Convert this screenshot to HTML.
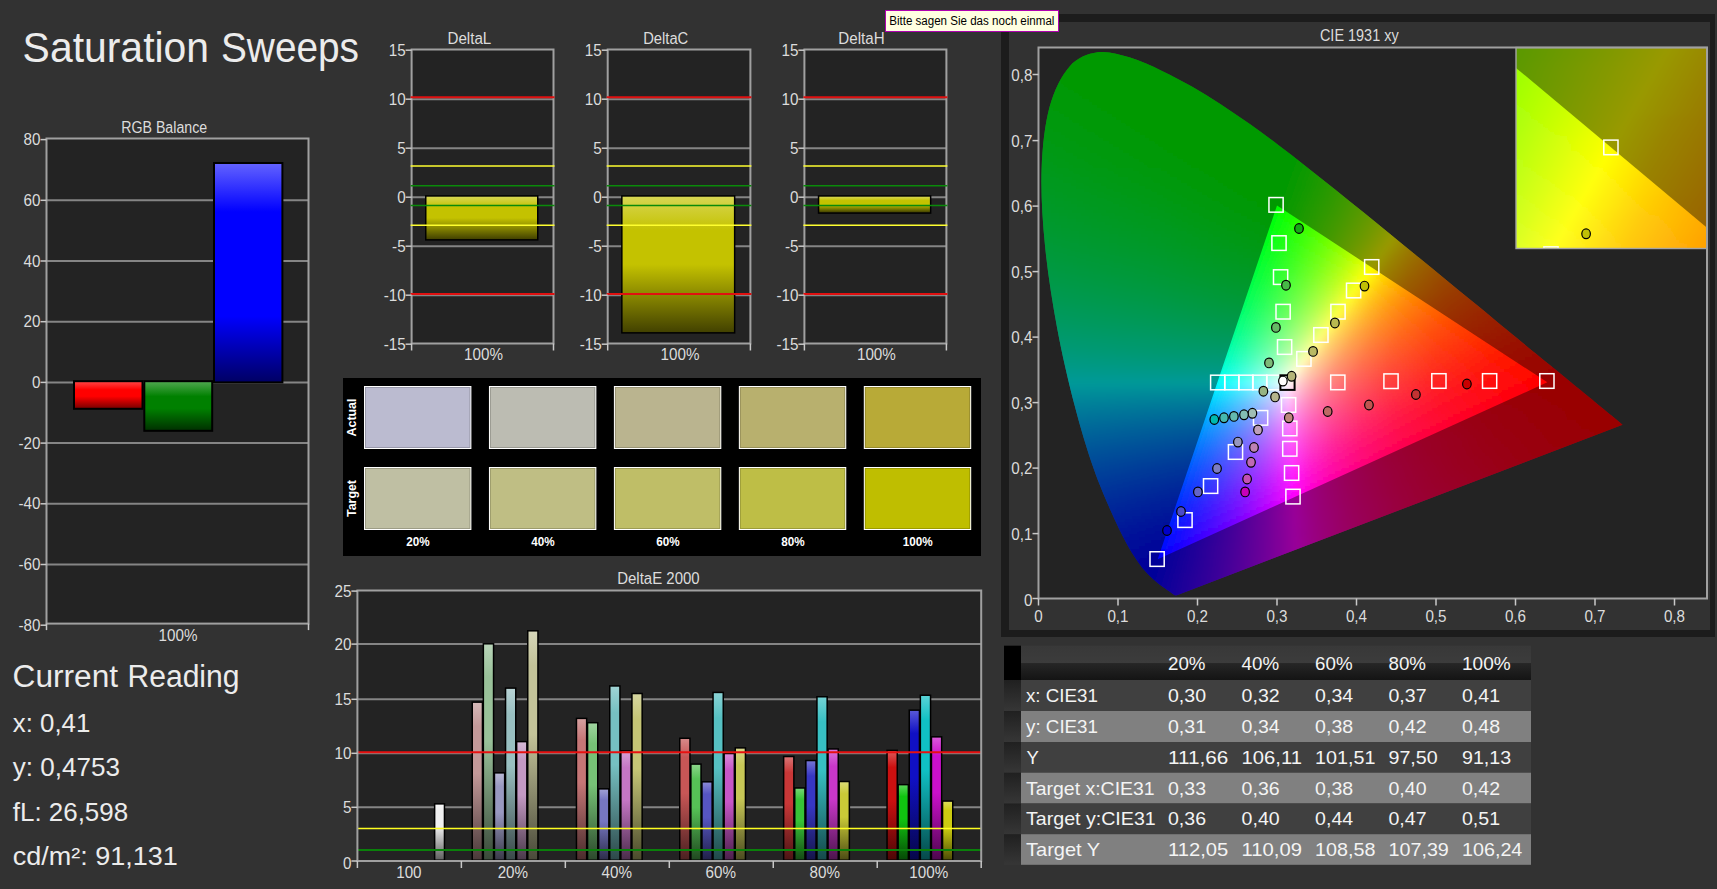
<!DOCTYPE html>
<html><head><meta charset="utf-8"><title>Saturation Sweeps</title><style>html,body{margin:0;padding:0;background:#323232;overflow:hidden}svg{display:block}text{font-family:"Liberation Sans",sans-serif}</style></head><body><svg width="1717" height="889" viewBox="0 0 1717 889"><defs><linearGradient id="g1" x1="0" y1="0" x2="0" y2="1"><stop offset="0" stop-color="#ff4040"/><stop offset="0.3" stop-color="#ff0000"/><stop offset="0.55" stop-color="#ff0000"/><stop offset="1" stop-color="#800000"/></linearGradient><linearGradient id="g2" x1="0" y1="0" x2="0" y2="1"><stop offset="0" stop-color="#4ca64c"/><stop offset="0.3" stop-color="#008000"/><stop offset="0.55" stop-color="#008000"/><stop offset="1" stop-color="#003300"/></linearGradient><linearGradient id="g3" x1="0" y1="0" x2="0" y2="1"><stop offset="0" stop-color="#6161ff"/><stop offset="0.22" stop-color="#0000ff"/><stop offset="0.7" stop-color="#0000ff"/><stop offset="1" stop-color="#000066"/></linearGradient><linearGradient id="g4" x1="0" y1="0" x2="0" y2="1"><stop offset="0" stop-color="#d7d652"/><stop offset="0.25" stop-color="#c4c200"/><stop offset="0.5" stop-color="#c4c200"/><stop offset="1" stop-color="#434200"/></linearGradient><linearGradient id="g5" x1="0" y1="0" x2="0" y2="1"><stop offset="0" stop-color="#d7d652"/><stop offset="0.25" stop-color="#c4c200"/><stop offset="0.5" stop-color="#c4c200"/><stop offset="1" stop-color="#434200"/></linearGradient><linearGradient id="g6" x1="0" y1="0" x2="0" y2="1"><stop offset="0" stop-color="#d7d652"/><stop offset="0.25" stop-color="#c4c200"/><stop offset="0.5" stop-color="#c4c200"/><stop offset="1" stop-color="#434200"/></linearGradient><linearGradient id="g7" x1="0" y1="0" x2="0" y2="1"><stop offset="0" stop-color="#f9f9f9"/><stop offset="0.1" stop-color="#f0f0f0"/><stop offset="0.4" stop-color="#f0f0f0"/><stop offset="1" stop-color="#606060"/></linearGradient><linearGradient id="g8" x1="0" y1="0" x2="0" y2="1"><stop offset="0" stop-color="#d5b8b8"/><stop offset="0.15" stop-color="#c39999"/><stop offset="0.45" stop-color="#c39999"/><stop offset="1" stop-color="#4a3a3a"/></linearGradient><linearGradient id="g9" x1="0" y1="0" x2="0" y2="1"><stop offset="0" stop-color="#b8d4b8"/><stop offset="0.15" stop-color="#99c199"/><stop offset="0.45" stop-color="#99c199"/><stop offset="1" stop-color="#3a493a"/></linearGradient><linearGradient id="g10" x1="0" y1="0" x2="0" y2="1"><stop offset="0" stop-color="#b8b8d4"/><stop offset="0.15" stop-color="#9999c1"/><stop offset="0.45" stop-color="#9999c1"/><stop offset="1" stop-color="#3a3a49"/></linearGradient><linearGradient id="g11" x1="0" y1="0" x2="0" y2="1"><stop offset="0" stop-color="#b8d3d4"/><stop offset="0.15" stop-color="#99c0c1"/><stop offset="0.45" stop-color="#99c0c1"/><stop offset="1" stop-color="#3a4949"/></linearGradient><linearGradient id="g12" x1="0" y1="0" x2="0" y2="1"><stop offset="0" stop-color="#d5b8d5"/><stop offset="0.15" stop-color="#c399c3"/><stop offset="0.45" stop-color="#c399c3"/><stop offset="1" stop-color="#4a3a4a"/></linearGradient><linearGradient id="g13" x1="0" y1="0" x2="0" y2="1"><stop offset="0" stop-color="#d5d5b8"/><stop offset="0.15" stop-color="#c3c399"/><stop offset="0.45" stop-color="#c3c399"/><stop offset="1" stop-color="#4a4a3a"/></linearGradient><linearGradient id="g14" x1="0" y1="0" x2="0" y2="1"><stop offset="0" stop-color="#d69f9f"/><stop offset="0.15" stop-color="#c57676"/><stop offset="0.45" stop-color="#c57676"/><stop offset="1" stop-color="#4b2d2d"/></linearGradient><linearGradient id="g15" x1="0" y1="0" x2="0" y2="1"><stop offset="0" stop-color="#9fd49f"/><stop offset="0.15" stop-color="#76c276"/><stop offset="0.45" stop-color="#76c276"/><stop offset="1" stop-color="#2d4a2d"/></linearGradient><linearGradient id="g16" x1="0" y1="0" x2="0" y2="1"><stop offset="0" stop-color="#9f9fd4"/><stop offset="0.15" stop-color="#7676c2"/><stop offset="0.45" stop-color="#7676c2"/><stop offset="1" stop-color="#2d2d4a"/></linearGradient><linearGradient id="g17" x1="0" y1="0" x2="0" y2="1"><stop offset="0" stop-color="#9fd3d4"/><stop offset="0.15" stop-color="#76c0c2"/><stop offset="0.45" stop-color="#76c0c2"/><stop offset="1" stop-color="#2d494a"/></linearGradient><linearGradient id="g18" x1="0" y1="0" x2="0" y2="1"><stop offset="0" stop-color="#d69fd6"/><stop offset="0.15" stop-color="#c576c5"/><stop offset="0.45" stop-color="#c576c5"/><stop offset="1" stop-color="#4b2d4b"/></linearGradient><linearGradient id="g19" x1="0" y1="0" x2="0" y2="1"><stop offset="0" stop-color="#d6d69f"/><stop offset="0.15" stop-color="#c5c576"/><stop offset="0.45" stop-color="#c5c576"/><stop offset="1" stop-color="#4b4b2d"/></linearGradient><linearGradient id="g20" x1="0" y1="0" x2="0" y2="1"><stop offset="0" stop-color="#d88989"/><stop offset="0.15" stop-color="#c75656"/><stop offset="0.45" stop-color="#c75656"/><stop offset="1" stop-color="#4c2121"/></linearGradient><linearGradient id="g21" x1="0" y1="0" x2="0" y2="1"><stop offset="0" stop-color="#89d589"/><stop offset="0.15" stop-color="#56c256"/><stop offset="0.45" stop-color="#56c256"/><stop offset="1" stop-color="#214a21"/></linearGradient><linearGradient id="g22" x1="0" y1="0" x2="0" y2="1"><stop offset="0" stop-color="#8989d5"/><stop offset="0.15" stop-color="#5656c2"/><stop offset="0.45" stop-color="#5656c2"/><stop offset="1" stop-color="#21214a"/></linearGradient><linearGradient id="g23" x1="0" y1="0" x2="0" y2="1"><stop offset="0" stop-color="#89d3d5"/><stop offset="0.15" stop-color="#56c0c2"/><stop offset="0.45" stop-color="#56c0c2"/><stop offset="1" stop-color="#21494a"/></linearGradient><linearGradient id="g24" x1="0" y1="0" x2="0" y2="1"><stop offset="0" stop-color="#d889d8"/><stop offset="0.15" stop-color="#c756c7"/><stop offset="0.45" stop-color="#c756c7"/><stop offset="1" stop-color="#4c214c"/></linearGradient><linearGradient id="g25" x1="0" y1="0" x2="0" y2="1"><stop offset="0" stop-color="#d8d889"/><stop offset="0.15" stop-color="#c7c756"/><stop offset="0.45" stop-color="#c7c756"/><stop offset="1" stop-color="#4c4c21"/></linearGradient><linearGradient id="g26" x1="0" y1="0" x2="0" y2="1"><stop offset="0" stop-color="#d97373"/><stop offset="0.15" stop-color="#c93737"/><stop offset="0.45" stop-color="#c93737"/><stop offset="1" stop-color="#4d1515"/></linearGradient><linearGradient id="g27" x1="0" y1="0" x2="0" y2="1"><stop offset="0" stop-color="#73d573"/><stop offset="0.15" stop-color="#37c337"/><stop offset="0.45" stop-color="#37c337"/><stop offset="1" stop-color="#154a15"/></linearGradient><linearGradient id="g28" x1="0" y1="0" x2="0" y2="1"><stop offset="0" stop-color="#7373d5"/><stop offset="0.15" stop-color="#3737c3"/><stop offset="0.45" stop-color="#3737c3"/><stop offset="1" stop-color="#15154a"/></linearGradient><linearGradient id="g29" x1="0" y1="0" x2="0" y2="1"><stop offset="0" stop-color="#73d3d5"/><stop offset="0.15" stop-color="#37c0c3"/><stop offset="0.45" stop-color="#37c0c3"/><stop offset="1" stop-color="#15494a"/></linearGradient><linearGradient id="g30" x1="0" y1="0" x2="0" y2="1"><stop offset="0" stop-color="#d973d9"/><stop offset="0.15" stop-color="#c937c9"/><stop offset="0.45" stop-color="#c937c9"/><stop offset="1" stop-color="#4d154d"/></linearGradient><linearGradient id="g31" x1="0" y1="0" x2="0" y2="1"><stop offset="0" stop-color="#d9d973"/><stop offset="0.15" stop-color="#c9c937"/><stop offset="0.45" stop-color="#c9c937"/><stop offset="1" stop-color="#4d4d15"/></linearGradient><linearGradient id="g32" x1="0" y1="0" x2="0" y2="1"><stop offset="0" stop-color="#db5858"/><stop offset="0.15" stop-color="#cc1010"/><stop offset="0.45" stop-color="#cc1010"/><stop offset="1" stop-color="#4e0606"/></linearGradient><linearGradient id="g33" x1="0" y1="0" x2="0" y2="1"><stop offset="0" stop-color="#58d658"/><stop offset="0.15" stop-color="#10c410"/><stop offset="0.45" stop-color="#10c410"/><stop offset="1" stop-color="#064a06"/></linearGradient><linearGradient id="g34" x1="0" y1="0" x2="0" y2="1"><stop offset="0" stop-color="#5858d6"/><stop offset="0.15" stop-color="#1010c4"/><stop offset="0.45" stop-color="#1010c4"/><stop offset="1" stop-color="#06064a"/></linearGradient><linearGradient id="g35" x1="0" y1="0" x2="0" y2="1"><stop offset="0" stop-color="#58d3d6"/><stop offset="0.15" stop-color="#10c0c4"/><stop offset="0.45" stop-color="#10c0c4"/><stop offset="1" stop-color="#06494a"/></linearGradient><linearGradient id="g36" x1="0" y1="0" x2="0" y2="1"><stop offset="0" stop-color="#db58db"/><stop offset="0.15" stop-color="#cc10cc"/><stop offset="0.45" stop-color="#cc10cc"/><stop offset="1" stop-color="#4e064e"/></linearGradient><linearGradient id="g37" x1="0" y1="0" x2="0" y2="1"><stop offset="0" stop-color="#dbdb58"/><stop offset="0.15" stop-color="#cccc10"/><stop offset="0.45" stop-color="#cccc10"/><stop offset="1" stop-color="#4e4e06"/></linearGradient><linearGradient id="g38" x1="0" y1="0" x2="0" y2="1"><stop offset="0" stop-color="#383838"/><stop offset="0.5" stop-color="#3c3c3c"/><stop offset="0.52" stop-color="#262626"/><stop offset="1" stop-color="#141414"/></linearGradient><linearGradient id="g39" x1="0" y1="0" x2="0" y2="1"><stop offset="0" stop-color="#202020"/><stop offset="1" stop-color="#363636"/></linearGradient><clipPath id="locus"><path d="M1176.91,595.23C1176.64,595.25 1175.82,595.44 1175.32,595.36C1174.82,595.27 1174.58,595.12 1173.89,594.7C1173.2,594.29 1171.97,593.42 1171.19,592.87C1170.4,592.31 1169.97,591.93 1169.2,591.36C1168.43,590.79 1167.61,590.2 1166.57,589.46C1165.54,588.72 1164.34,587.88 1163,586.91C1161.66,585.93 1160.21,584.94 1158.55,583.63C1156.88,582.32 1155.03,580.92 1152.98,579.05C1150.93,577.17 1148.86,575.43 1146.22,572.37C1143.59,569.3 1140.59,565.76 1137.16,560.64C1133.73,555.52 1129.98,549.82 1125.63,541.65C1121.29,533.47 1116.5,524.02 1111.08,511.58C1105.66,499.15 1099.2,484.76 1093.12,467.04C1087.03,449.32 1080.58,428.42 1074.59,405.27C1068.6,382.13 1062.11,354.75 1057.18,328.18C1052.25,301.61 1047.62,272.28 1045.02,245.85C1042.42,219.42 1040.85,192.73 1041.6,169.61C1042.36,146.48 1044.91,124.28 1049.55,107.12C1054.19,89.96 1061.42,75.77 1069.43,66.64C1077.43,57.51 1087.59,53.91 1097.57,52.36C1107.55,50.81 1118.64,54.29 1129.29,57.34C1139.94,60.38 1151.06,65.77 1161.49,70.64C1171.91,75.5 1181.93,80.92 1191.86,86.55C1201.78,92.19 1211.37,98.18 1221.03,104.43C1230.69,110.69 1240.27,117.32 1249.81,124.08C1259.35,130.85 1268.8,137.9 1278.27,145.04C1287.75,152.18 1297.18,159.52 1306.65,166.92C1316.13,174.32 1325.65,181.89 1335.11,189.45C1344.57,197.02 1354.01,204.69 1363.42,212.31C1372.82,219.93 1382.27,227.6 1391.56,235.17C1400.85,242.75 1410.08,250.33 1419.15,257.77C1428.21,265.2 1437.19,272.59 1445.94,279.78C1454.68,286.96 1463.31,294.06 1471.62,300.87C1479.92,307.68 1488.09,314.33 1495.78,320.65C1503.48,326.97 1510.94,333.15 1517.81,338.79C1524.67,344.44 1530.96,349.59 1536.96,354.51C1542.97,359.44 1548.68,364.13 1553.82,368.33C1558.96,372.54 1563.58,376.27 1567.81,379.73C1572.04,383.19 1575.77,386.29 1579.18,389.1C1582.58,391.9 1585.53,394.34 1588.24,396.56C1590.96,398.79 1593.3,400.68 1595.48,402.46C1597.65,404.24 1599.5,405.78 1601.28,407.24C1603.06,408.7 1604.66,410.02 1606.13,411.24C1607.6,412.45 1608.91,413.54 1610.11,414.51C1611.3,415.48 1612.36,416.31 1613.28,417.06C1614.21,417.82 1614.97,418.45 1615.67,419.03C1616.37,419.61 1616.97,420.1 1617.5,420.54C1618.03,420.97 1618.36,421.25 1618.85,421.65C1619.34,422.05 1619.82,422.45 1620.44,422.96C1621.06,423.47 1622.23,424.43 1622.59,424.73Z"/></clipPath><filter id="vb" filterUnits="userSpaceOnUse" x="1020" y="30" width="700" height="590"><feGaussianBlur stdDeviation="2.5 2.5"/></filter><linearGradient id="c0" gradientUnits="userSpaceOnUse" x1="1086" x2="1109" y1="0" y2="0"><stop offset="0" stop-color="#0f0"/><stop offset="1" stop-color="#0f0"/></linearGradient><linearGradient id="c1" gradientUnits="userSpaceOnUse" x1="1080" x2="1129" y1="0" y2="0"><stop offset="0" stop-color="#0f0"/><stop offset="1" stop-color="#0f0"/></linearGradient><linearGradient id="c2" gradientUnits="userSpaceOnUse" x1="1074" x2="1143" y1="0" y2="0"><stop offset="0" stop-color="#0f0"/><stop offset="1" stop-color="#0f0"/></linearGradient><linearGradient id="c3" gradientUnits="userSpaceOnUse" x1="1069" x2="1150" y1="0" y2="0"><stop offset="0" stop-color="#0f0"/><stop offset="1" stop-color="#0f0"/></linearGradient><linearGradient id="c4" gradientUnits="userSpaceOnUse" x1="1063" x2="1158" y1="0" y2="0"><stop offset="0" stop-color="#0f0"/><stop offset="1" stop-color="#0f0"/></linearGradient><linearGradient id="c5" gradientUnits="userSpaceOnUse" x1="1058" x2="1165" y1="0" y2="0"><stop offset="0" stop-color="#0f0"/><stop offset="1" stop-color="#0f0"/></linearGradient><linearGradient id="c6" gradientUnits="userSpaceOnUse" x1="1057" x2="1172" y1="0" y2="0"><stop offset="0" stop-color="#0f0"/><stop offset="1" stop-color="#0f0"/></linearGradient><linearGradient id="c7" gradientUnits="userSpaceOnUse" x1="1055" x2="1178" y1="0" y2="0"><stop offset="0" stop-color="#0f0"/><stop offset="1" stop-color="#0f0"/></linearGradient><linearGradient id="c8" gradientUnits="userSpaceOnUse" x1="1054" x2="1184" y1="0" y2="0"><stop offset="0" stop-color="#00ff02"/><stop offset="1" stop-color="#0f0"/></linearGradient><linearGradient id="c9" gradientUnits="userSpaceOnUse" x1="1052" x2="1189" y1="0" y2="0"><stop offset="0" stop-color="#00ff03"/><stop offset=".1022" stop-color="#0f0"/><stop offset="1" stop-color="#0f0"/></linearGradient><linearGradient id="c10" gradientUnits="userSpaceOnUse" x1="1051" x2="1195" y1="0" y2="0"><stop offset="0" stop-color="#00ff04"/><stop offset=".1389" stop-color="#0f0"/><stop offset="1" stop-color="#0f0"/></linearGradient><linearGradient id="c11" gradientUnits="userSpaceOnUse" x1="1049" x2="1201" y1="0" y2="0"><stop offset="0" stop-color="#00ff06"/><stop offset=".1776" stop-color="#0f0"/><stop offset="1" stop-color="#0f0"/></linearGradient><linearGradient id="c12" gradientUnits="userSpaceOnUse" x1="1048" x2="1206" y1="0" y2="0"><stop offset="0" stop-color="#00ff07"/><stop offset=".2025" stop-color="#0f0"/><stop offset="1" stop-color="#0f0"/></linearGradient><linearGradient id="c13" gradientUnits="userSpaceOnUse" x1="1046" x2="1211" y1="0" y2="0"><stop offset="0" stop-color="#00ff08"/><stop offset=".2364" stop-color="#0f0"/><stop offset="1" stop-color="#0f0"/></linearGradient><linearGradient id="c14" gradientUnits="userSpaceOnUse" x1="1045" x2="1216" y1="0" y2="0"><stop offset="0" stop-color="#00ff0a"/><stop offset=".2573" stop-color="#0f0"/><stop offset="1" stop-color="#0f0"/></linearGradient><linearGradient id="c15" gradientUnits="userSpaceOnUse" x1="1043" x2="1221" y1="0" y2="0"><stop offset="0" stop-color="#00ff0b"/><stop offset=".2865" stop-color="#0f0"/><stop offset="1" stop-color="#0f0"/></linearGradient><linearGradient id="c16" gradientUnits="userSpaceOnUse" x1="1042" x2="1226" y1="0" y2="0"><stop offset="0" stop-color="#00ff0c"/><stop offset=".3043" stop-color="#0f0"/><stop offset="1" stop-color="#0f0"/></linearGradient><linearGradient id="c17" gradientUnits="userSpaceOnUse" x1="1040" x2="1231" y1="0" y2="0"><stop offset="0" stop-color="#00ff0e"/><stop offset=".3298" stop-color="#0f0"/><stop offset="1" stop-color="#0f0"/></linearGradient><linearGradient id="c18" gradientUnits="userSpaceOnUse" x1="1039" x2="1235" y1="0" y2="0"><stop offset="0" stop-color="#00ff0f"/><stop offset=".352" stop-color="#0f0"/><stop offset="1" stop-color="#0f0"/></linearGradient><linearGradient id="c19" gradientUnits="userSpaceOnUse" x1="1038" x2="1239" y1="0" y2="0"><stop offset="0" stop-color="#00ff10"/><stop offset=".3682" stop-color="#0f0"/><stop offset="1" stop-color="#0f0"/></linearGradient><linearGradient id="c20" gradientUnits="userSpaceOnUse" x1="1038" x2="1244" y1="0" y2="0"><stop offset="0" stop-color="#00ff12"/><stop offset=".3835" stop-color="#0f0"/><stop offset="1" stop-color="#0f0"/></linearGradient><linearGradient id="c21" gradientUnits="userSpaceOnUse" x1="1037" x2="1248" y1="0" y2="0"><stop offset="0" stop-color="#00ff13"/><stop offset=".3981" stop-color="#0f0"/><stop offset="1" stop-color="#0f0"/></linearGradient><linearGradient id="c22" gradientUnits="userSpaceOnUse" x1="1037" x2="1253" y1="0" y2="0"><stop offset="0" stop-color="#00ff14"/><stop offset=".412" stop-color="#0f0"/><stop offset="1" stop-color="#0f0"/></linearGradient><linearGradient id="c23" gradientUnits="userSpaceOnUse" x1="1037" x2="1257" y1="0" y2="0"><stop offset="0" stop-color="#00ff15"/><stop offset=".4227" stop-color="#0f0"/><stop offset="1" stop-color="#0f0"/></linearGradient><linearGradient id="c24" gradientUnits="userSpaceOnUse" x1="1036" x2="1261" y1="0" y2="0"><stop offset="0" stop-color="#00ff17"/><stop offset=".44" stop-color="#0f0"/><stop offset="1" stop-color="#0f0"/></linearGradient><linearGradient id="c25" gradientUnits="userSpaceOnUse" x1="1036" x2="1265" y1="0" y2="0"><stop offset="0" stop-color="#00ff18"/><stop offset=".4541" stop-color="#0f0"/><stop offset="1" stop-color="#0f0"/></linearGradient><linearGradient id="c26" gradientUnits="userSpaceOnUse" x1="1036" x2="1270" y1="0" y2="0"><stop offset="0" stop-color="#00ff19"/><stop offset=".4615" stop-color="#0f0"/><stop offset="1" stop-color="#0f0"/></linearGradient><linearGradient id="c27" gradientUnits="userSpaceOnUse" x1="1035" x2="1274" y1="0" y2="0"><stop offset="0" stop-color="#00ff1a"/><stop offset=".477" stop-color="#0f0"/><stop offset="1" stop-color="#0f0"/></linearGradient><linearGradient id="c28" gradientUnits="userSpaceOnUse" x1="1035" x2="1278" y1="0" y2="0"><stop offset="0" stop-color="#00ff1c"/><stop offset=".4856" stop-color="#0f0"/><stop offset="1" stop-color="#0f0"/></linearGradient><linearGradient id="c29" gradientUnits="userSpaceOnUse" x1="1034" x2="1282" y1="0" y2="0"><stop offset="0" stop-color="#00ff1d"/><stop offset=".5" stop-color="#0f0"/><stop offset="1" stop-color="#0f0"/></linearGradient><linearGradient id="c30" gradientUnits="userSpaceOnUse" x1="1034" x2="1286" y1="0" y2="0"><stop offset="0" stop-color="#00ff1e"/><stop offset=".5079" stop-color="#0f0"/><stop offset="1" stop-color="#0f0"/></linearGradient><linearGradient id="c31" gradientUnits="userSpaceOnUse" x1="1034" x2="1290" y1="0" y2="0"><stop offset="0" stop-color="#00ff20"/><stop offset=".5195" stop-color="#0f0"/><stop offset="1" stop-color="#0f0"/></linearGradient><linearGradient id="c32" gradientUnits="userSpaceOnUse" x1="1033" x2="1294" y1="0" y2="0"><stop offset="0" stop-color="#00ff21"/><stop offset=".5326" stop-color="#0f0"/><stop offset="1" stop-color="#0f0"/></linearGradient><linearGradient id="c33" gradientUnits="userSpaceOnUse" x1="1033" x2="1298" y1="0" y2="0"><stop offset="0" stop-color="#0f2"/><stop offset=".5396" stop-color="#0f0"/><stop offset="1" stop-color="#0f0"/></linearGradient><linearGradient id="c34" gradientUnits="userSpaceOnUse" x1="1033" x2="1302" y1="0" y2="0"><stop offset="0" stop-color="#00ff24"/><stop offset=".5502" stop-color="#0f0"/><stop offset=".9851" stop-color="#0f0"/><stop offset="1" stop-color="#05ff00"/></linearGradient><linearGradient id="c35" gradientUnits="userSpaceOnUse" x1="1032" x2="1305" y1="0" y2="0"><stop offset="0" stop-color="#00ff25"/><stop offset=".5604" stop-color="#0f0"/><stop offset=".9707" stop-color="#0f0"/><stop offset="1" stop-color="#0aff00"/></linearGradient><linearGradient id="c36" gradientUnits="userSpaceOnUse" x1="1032" x2="1309" y1="0" y2="0"><stop offset="0" stop-color="#00ff27"/><stop offset=".5704" stop-color="#0f0"/><stop offset=".9531" stop-color="#0f0"/><stop offset="1" stop-color="#10ff00"/></linearGradient><linearGradient id="c37" gradientUnits="userSpaceOnUse" x1="1031" x2="1313" y1="0" y2="0"><stop offset="0" stop-color="#00ff28"/><stop offset=".578" stop-color="#0f0"/><stop offset=".9362" stop-color="#0f0"/><stop offset="1" stop-color="#17ff00"/></linearGradient><linearGradient id="c38" gradientUnits="userSpaceOnUse" x1="1031" x2="1317" y1="0" y2="0"><stop offset="0" stop-color="#00ff2a"/><stop offset=".5874" stop-color="#0f0"/><stop offset=".9196" stop-color="#0f0"/><stop offset="1" stop-color="#1dff00"/></linearGradient><linearGradient id="c39" gradientUnits="userSpaceOnUse" x1="1031" x2="1321" y1="0" y2="0"><stop offset="0" stop-color="#00ff2b"/><stop offset=".5966" stop-color="#0f0"/><stop offset=".9034" stop-color="#0f0"/><stop offset="1" stop-color="#24ff00"/></linearGradient><linearGradient id="c40" gradientUnits="userSpaceOnUse" x1="1031" x2="1325" y1="0" y2="0"><stop offset="0" stop-color="#00ff2d"/><stop offset=".602" stop-color="#0f0"/><stop offset=".8878" stop-color="#0f0"/><stop offset="1" stop-color="#2cff00"/></linearGradient><linearGradient id="c41" gradientUnits="userSpaceOnUse" x1="1031" x2="1328" y1="0" y2="0"><stop offset="0" stop-color="#00ff2e"/><stop offset=".6128" stop-color="#0f0"/><stop offset=".8754" stop-color="#0f0"/><stop offset="1" stop-color="#32ff00"/></linearGradient><linearGradient id="c42" gradientUnits="userSpaceOnUse" x1="1031" x2="1332" y1="0" y2="0"><stop offset="0" stop-color="#00ff2f"/><stop offset=".6179" stop-color="#0f0"/><stop offset=".8605" stop-color="#0f0"/><stop offset="1" stop-color="#39ff00"/></linearGradient><linearGradient id="c43" gradientUnits="userSpaceOnUse" x1="1031" x2="1336" y1="0" y2="0"><stop offset="0" stop-color="#00ff31"/><stop offset=".3311" stop-color="#00ff1a"/><stop offset=".6262" stop-color="#0f0"/><stop offset=".8459" stop-color="#0f0"/><stop offset="1" stop-color="#41ff00"/></linearGradient><linearGradient id="c44" gradientUnits="userSpaceOnUse" x1="1031" x2="1340" y1="0" y2="0"><stop offset="0" stop-color="#00ff32"/><stop offset=".3333" stop-color="#00ff1b"/><stop offset=".6311" stop-color="#0f0"/><stop offset=".8317" stop-color="#0f0"/><stop offset="1" stop-color="#49ff00"/></linearGradient><linearGradient id="c45" gradientUnits="userSpaceOnUse" x1="1031" x2="1344" y1="0" y2="0"><stop offset="0" stop-color="#00ff34"/><stop offset=".3387" stop-color="#00ff1b"/><stop offset=".639" stop-color="#0f0"/><stop offset=".8179" stop-color="#0f0"/><stop offset="1" stop-color="#51ff00"/></linearGradient><linearGradient id="c46" gradientUnits="userSpaceOnUse" x1="1031" x2="1347" y1="0" y2="0"><stop offset="0" stop-color="#00ff36"/><stop offset=".3418" stop-color="#00ff1d"/><stop offset=".6487" stop-color="#0f0"/><stop offset=".807" stop-color="#0f0"/><stop offset="1" stop-color="#58ff00"/></linearGradient><linearGradient id="c47" gradientUnits="userSpaceOnUse" x1="1031" x2="1351" y1="0" y2="0"><stop offset="0" stop-color="#00ff37"/><stop offset=".3469" stop-color="#00ff1d"/><stop offset=".6531" stop-color="#0f0"/><stop offset=".7937" stop-color="#0f0"/><stop offset="1" stop-color="#61ff00"/></linearGradient><linearGradient id="c48" gradientUnits="userSpaceOnUse" x1="1031" x2="1355" y1="0" y2="0"><stop offset="0" stop-color="#00ff39"/><stop offset=".3519" stop-color="#00ff1e"/><stop offset=".6605" stop-color="#0f0"/><stop offset=".7809" stop-color="#0f0"/><stop offset=".892" stop-color="#3f0"/><stop offset="1" stop-color="#6bff00"/></linearGradient><linearGradient id="c49" gradientUnits="userSpaceOnUse" x1="1031" x2="1359" y1="0" y2="0"><stop offset="0" stop-color="#00ff3a"/><stop offset=".3537" stop-color="#00ff1f"/><stop offset=".6646" stop-color="#0f0"/><stop offset=".7683" stop-color="#0f0"/><stop offset=".8872" stop-color="#38ff00"/><stop offset="1" stop-color="#74ff00"/></linearGradient><linearGradient id="c50" gradientUnits="userSpaceOnUse" x1="1031" x2="1362" y1="0" y2="0"><stop offset="0" stop-color="#00ff3c"/><stop offset=".3595" stop-color="#00ff20"/><stop offset=".6737" stop-color="#0f0"/><stop offset=".7583" stop-color="#0f0"/><stop offset=".8822" stop-color="#3cff00"/><stop offset="1" stop-color="#7cff00"/></linearGradient><linearGradient id="c51" gradientUnits="userSpaceOnUse" x1="1031" x2="1366" y1="0" y2="0"><stop offset="0" stop-color="#00ff3e"/><stop offset=".3612" stop-color="#00ff21"/><stop offset=".6776" stop-color="#0f0"/><stop offset=".7463" stop-color="#0f0"/><stop offset=".8776" stop-color="#41ff00"/><stop offset="1" stop-color="#86ff00"/></linearGradient><linearGradient id="c52" gradientUnits="userSpaceOnUse" x1="1031" x2="1370" y1="0" y2="0"><stop offset="0" stop-color="#00ff3f"/><stop offset=".3658" stop-color="#0f2"/><stop offset=".6844" stop-color="#0f0"/><stop offset=".7345" stop-color="#0f0"/><stop offset=".8732" stop-color="#46ff00"/><stop offset="1" stop-color="#91ff00"/></linearGradient><linearGradient id="c53" gradientUnits="userSpaceOnUse" x1="1031" x2="1373" y1="0" y2="0"><stop offset="0" stop-color="#00ff41"/><stop offset=".3187" stop-color="#00ff28"/><stop offset=".693" stop-color="#0f0"/><stop offset=".7251" stop-color="#0f0"/><stop offset=".8684" stop-color="#4aff00"/><stop offset="1" stop-color="#9aff00"/></linearGradient><linearGradient id="c54" gradientUnits="userSpaceOnUse" x1="1032" x2="1377" y1="0" y2="0"><stop offset="0" stop-color="#00ff43"/><stop offset=".3478" stop-color="#00ff26"/><stop offset=".713" stop-color="#0f0"/><stop offset=".8609" stop-color="#4eff00"/><stop offset="1" stop-color="#a5ff00"/></linearGradient><linearGradient id="c55" gradientUnits="userSpaceOnUse" x1="1032" x2="1381" y1="0" y2="0"><stop offset="0" stop-color="#0f4"/><stop offset=".3782" stop-color="#00ff25"/><stop offset=".702" stop-color="#0f0"/><stop offset=".8567" stop-color="#54ff00"/><stop offset="1" stop-color="#b0ff00"/></linearGradient><linearGradient id="c56" gradientUnits="userSpaceOnUse" x1="1032" x2="1384" y1="0" y2="0"><stop offset="0" stop-color="#00ff46"/><stop offset=".375" stop-color="#00ff27"/><stop offset=".6932" stop-color="#00ff02"/><stop offset=".8523" stop-color="#58ff00"/><stop offset="1" stop-color="#bf0"/></linearGradient><linearGradient id="c57" gradientUnits="userSpaceOnUse" x1="1032" x2="1388" y1="0" y2="0"><stop offset="0" stop-color="#00ff48"/><stop offset=".368" stop-color="#00ff29"/><stop offset=".6826" stop-color="#00ff04"/><stop offset=".7135" stop-color="#10ff00"/><stop offset=".8483" stop-color="#5eff00"/><stop offset=".927" stop-color="#92ff00"/><stop offset="1" stop-color="#c7ff00"/></linearGradient><linearGradient id="c58" gradientUnits="userSpaceOnUse" x1="1032" x2="1392" y1="0" y2="0"><stop offset="0" stop-color="#00ff4a"/><stop offset=".3639" stop-color="#00ff2b"/><stop offset=".6722" stop-color="#00ff07"/><stop offset=".7194" stop-color="#1aff00"/><stop offset=".8444" stop-color="#65ff00"/><stop offset=".925" stop-color="#9cff00"/><stop offset="1" stop-color="#d4ff00"/></linearGradient><linearGradient id="c59" gradientUnits="userSpaceOnUse" x1="1032" x2="1396" y1="0" y2="0"><stop offset="0" stop-color="#00ff4c"/><stop offset=".3571" stop-color="#00ff2d"/><stop offset=".6621" stop-color="#00ff09"/><stop offset=".7253" stop-color="#23ff00"/><stop offset=".8407" stop-color="#6bff00"/><stop offset=".9231" stop-color="#a5ff00"/><stop offset="1" stop-color="#e2ff00"/></linearGradient><linearGradient id="c60" gradientUnits="userSpaceOnUse" x1="1032" x2="1399" y1="0" y2="0"><stop offset="0" stop-color="#00ff4e"/><stop offset=".3542" stop-color="#00ff2f"/><stop offset=".654" stop-color="#00ff0b"/><stop offset=".7302" stop-color="#2cff00"/><stop offset=".8365" stop-color="#70ff00"/><stop offset=".921" stop-color="#adff00"/><stop offset="1" stop-color="#edff00"/></linearGradient><linearGradient id="c61" gradientUnits="userSpaceOnUse" x1="1032" x2="1403" y1="0" y2="0"><stop offset="0" stop-color="#00ff50"/><stop offset=".3477" stop-color="#00ff31"/><stop offset=".6442" stop-color="#00ff0e"/><stop offset=".7358" stop-color="#36ff00"/><stop offset=".8329" stop-color="#7f0"/><stop offset=".9191" stop-color="#b8ff00"/><stop offset="1" stop-color="#fcff00"/></linearGradient><linearGradient id="c62" gradientUnits="userSpaceOnUse" x1="1033" x2="1407" y1="0" y2="0"><stop offset="0" stop-color="#00ff51"/><stop offset=".3422" stop-color="#0f3"/><stop offset=".6337" stop-color="#00ff10"/><stop offset=".738" stop-color="#3fff00"/><stop offset=".8209" stop-color="#78ff00"/><stop offset=".9064" stop-color="#baff00"/><stop offset=".9866" stop-color="#ff0"/><stop offset="1" stop-color="#fff300"/></linearGradient><linearGradient id="c63" gradientUnits="userSpaceOnUse" x1="1033" x2="1410" y1="0" y2="0"><stop offset="0" stop-color="#00ff53"/><stop offset=".3395" stop-color="#00ff35"/><stop offset=".626" stop-color="#00ff12"/><stop offset=".7454" stop-color="#4bff00"/><stop offset=".809" stop-color="#7f0"/><stop offset=".8912" stop-color="#b7ff00"/><stop offset=".9708" stop-color="#fdff00"/><stop offset="1" stop-color="#ffe800"/></linearGradient><linearGradient id="c64" gradientUnits="userSpaceOnUse" x1="1033" x2="1414" y1="0" y2="0"><stop offset="0" stop-color="#0f5"/><stop offset=".3333" stop-color="#00ff38"/><stop offset=".6168" stop-color="#00ff15"/><stop offset=".748" stop-color="#54ff00"/><stop offset=".7953" stop-color="#7f0"/><stop offset=".8766" stop-color="#b7ff00"/><stop offset=".9554" stop-color="#fdff00"/><stop offset="1" stop-color="#ffdb00"/></linearGradient><linearGradient id="c65" gradientUnits="userSpaceOnUse" x1="1033" x2="1418" y1="0" y2="0"><stop offset="0" stop-color="#00ff57"/><stop offset=".3299" stop-color="#00ff3a"/><stop offset=".6078" stop-color="#00ff17"/><stop offset=".7532" stop-color="#61ff00"/><stop offset=".7844" stop-color="#78ff00"/><stop offset=".8649" stop-color="#b9ff00"/><stop offset=".9403" stop-color="#feff00"/><stop offset="1" stop-color="#ffcf00"/></linearGradient><linearGradient id="c66" gradientUnits="userSpaceOnUse" x1="1033" x2="1421" y1="0" y2="0"><stop offset="0" stop-color="#00ff59"/><stop offset=".3247" stop-color="#00ff3c"/><stop offset=".6005" stop-color="#00ff1a"/><stop offset=".6881" stop-color="#39ff0c"/><stop offset=".7732" stop-color="#7f0"/><stop offset=".8531" stop-color="#b9ff00"/><stop offset=".9278" stop-color="#feff00"/><stop offset=".9639" stop-color="#ffdf00"/><stop offset="1" stop-color="#ffc500"/></linearGradient><linearGradient id="c67" gradientUnits="userSpaceOnUse" x1="1033" x2="1425" y1="0" y2="0"><stop offset="0" stop-color="#00ff5c"/><stop offset=".3214" stop-color="#00ff3f"/><stop offset=".5918" stop-color="#00ff1d"/><stop offset=".6811" stop-color="#3bff0f"/><stop offset=".7628" stop-color="#78ff00"/><stop offset=".8393" stop-color="#b9ff00"/><stop offset=".9133" stop-color="#ff0"/><stop offset=".9541" stop-color="#ffdb00"/><stop offset="1" stop-color="#ffba00"/></linearGradient><linearGradient id="c68" gradientUnits="userSpaceOnUse" x1="1033" x2="1429" y1="0" y2="0"><stop offset="0" stop-color="#00ff5e"/><stop offset=".3157" stop-color="#00ff41"/><stop offset=".5833" stop-color="#00ff1f"/><stop offset=".6692" stop-color="#3aff12"/><stop offset=".75" stop-color="#78ff03"/><stop offset=".8232" stop-color="#b6ff00"/><stop offset=".899" stop-color="#fffe00"/><stop offset=".947" stop-color="#ffd400"/><stop offset="1" stop-color="#ffb000"/></linearGradient><linearGradient id="c69" gradientUnits="userSpaceOnUse" x1="1034" x2="1432" y1="0" y2="0"><stop offset="0" stop-color="#00ff60"/><stop offset=".3116" stop-color="#00ff43"/><stop offset=".5754" stop-color="#0f2"/><stop offset=".6583" stop-color="#39ff15"/><stop offset=".7387" stop-color="#77ff06"/><stop offset=".7714" stop-color="#92ff00"/><stop offset=".8869" stop-color="#fffe00"/><stop offset=".9397" stop-color="#ffcf00"/><stop offset="1" stop-color="#ffa800"/></linearGradient><linearGradient id="c70" gradientUnits="userSpaceOnUse" x1="1034" x2="1436" y1="0" y2="0"><stop offset="0" stop-color="#00ff62"/><stop offset=".306" stop-color="#00ff46"/><stop offset=".5672" stop-color="#00ff25"/><stop offset=".6493" stop-color="#3aff18"/><stop offset=".7289" stop-color="#78ff09"/><stop offset=".7761" stop-color="#a1ff00"/><stop offset=".8706" stop-color="#feff00"/><stop offset=".9303" stop-color="#ffcb00"/><stop offset="1" stop-color="#ff9f00"/></linearGradient><linearGradient id="c71" gradientUnits="userSpaceOnUse" x1="1034" x2="1440" y1="0" y2="0"><stop offset="0" stop-color="#00ff64"/><stop offset=".303" stop-color="#00ff48"/><stop offset=".5591" stop-color="#00ff28"/><stop offset=".6404" stop-color="#3aff1b"/><stop offset=".7167" stop-color="#78ff0d"/><stop offset=".7783" stop-color="#afff00"/><stop offset=".8571" stop-color="#feff00"/><stop offset=".8892" stop-color="#ffe000"/><stop offset=".9236" stop-color="#ffc400"/><stop offset="1" stop-color="#ff9600"/></linearGradient><linearGradient id="c72" gradientUnits="userSpaceOnUse" x1="1034" x2="1443" y1="0" y2="0"><stop offset="0" stop-color="#00ff67"/><stop offset=".2983" stop-color="#00ff4b"/><stop offset=".5526" stop-color="#00ff2a"/><stop offset=".6333" stop-color="#3bff1d"/><stop offset=".709" stop-color="#79ff10"/><stop offset=".7848" stop-color="#bfff00"/><stop offset=".846" stop-color="#ff0"/><stop offset=".8778" stop-color="#ffdf00"/><stop offset=".9144" stop-color="#ffc200"/><stop offset=".956" stop-color="#ffa700"/><stop offset="1" stop-color="#ff9000"/></linearGradient><linearGradient id="c73" gradientUnits="userSpaceOnUse" x1="1034" x2="1447" y1="0" y2="0"><stop offset="0" stop-color="#00ff69"/><stop offset=".2954" stop-color="#00ff4e"/><stop offset=".5448" stop-color="#00ff2d"/><stop offset=".6223" stop-color="#3aff21"/><stop offset=".6949" stop-color="#76ff14"/><stop offset=".7869" stop-color="#ceff00"/><stop offset=".8329" stop-color="#fffe00"/><stop offset=".8692" stop-color="#ffda00"/><stop offset=".908" stop-color="#ffbc00"/><stop offset=".9516" stop-color="#ffa000"/><stop offset="1" stop-color="#f80"/></linearGradient><linearGradient id="c74" gradientUnits="userSpaceOnUse" x1="1035" x2="1451" y1="0" y2="0"><stop offset="0" stop-color="#00ff6b"/><stop offset=".2909" stop-color="#00ff50"/><stop offset=".5361" stop-color="#00ff30"/><stop offset=".6106" stop-color="#38ff24"/><stop offset=".6827" stop-color="#75ff17"/><stop offset=".738" stop-color="#a9ff0c"/><stop offset=".7909" stop-color="#e0ff00"/><stop offset=".8197" stop-color="#fffe00"/><stop offset=".8558" stop-color="#ffda00"/><stop offset=".899" stop-color="#ffb700"/><stop offset=".9471" stop-color="#ff9a00"/><stop offset="1" stop-color="#ff8100"/></linearGradient><linearGradient id="c75" gradientUnits="userSpaceOnUse" x1="1035" x2="1454" y1="0" y2="0"><stop offset="0" stop-color="#00ff6e"/><stop offset=".2864" stop-color="#00ff53"/><stop offset=".5298" stop-color="#00ff34"/><stop offset=".6038" stop-color="#39ff27"/><stop offset=".6754" stop-color="#77ff1a"/><stop offset=".7422" stop-color="#b7ff0d"/><stop offset=".8067" stop-color="#feff00"/><stop offset=".8496" stop-color="#ffd400"/><stop offset=".8926" stop-color="#ffb300"/><stop offset=".9427" stop-color="#ff9500"/><stop offset="1" stop-color="#ff7b00"/></linearGradient><linearGradient id="c76" gradientUnits="userSpaceOnUse" x1="1036" x2="1458" y1="0" y2="0"><stop offset="0" stop-color="#00ff70"/><stop offset=".282" stop-color="#00ff56"/><stop offset=".5213" stop-color="#00ff37"/><stop offset=".5948" stop-color="#3aff2b"/><stop offset=".6659" stop-color="#78ff1e"/><stop offset=".7322" stop-color="#baff10"/><stop offset=".7938" stop-color="#ffff01"/><stop offset=".8365" stop-color="#ffd400"/><stop offset=".8839" stop-color="#ffaf00"/><stop offset=".9384" stop-color="#ff8f00"/><stop offset="1" stop-color="#ff7400"/></linearGradient><linearGradient id="c77" gradientUnits="userSpaceOnUse" x1="1036" x2="1461" y1="0" y2="0"><stop offset="0" stop-color="#00ff72"/><stop offset=".28" stop-color="#00ff58"/><stop offset=".5153" stop-color="#00ff3a"/><stop offset=".5882" stop-color="#3aff2e"/><stop offset=".6565" stop-color="#77ff21"/><stop offset=".7224" stop-color="#baff14"/><stop offset=".7835" stop-color="#ffff05"/><stop offset=".8047" stop-color="#ffe700"/><stop offset=".8259" stop-color="#ffd300"/><stop offset=".8753" stop-color="#ffad00"/><stop offset=".9341" stop-color="#ff8b00"/><stop offset="1" stop-color="#ff6e00"/></linearGradient><linearGradient id="c78" gradientUnits="userSpaceOnUse" x1="1036" x2="1465" y1="0" y2="0"><stop offset="0" stop-color="#00ff75"/><stop offset=".2751" stop-color="#00ff5b"/><stop offset=".5082" stop-color="#00ff3d"/><stop offset=".5781" stop-color="#39ff32"/><stop offset=".6457" stop-color="#76ff25"/><stop offset=".7086" stop-color="#b7ff18"/><stop offset=".7716" stop-color="#fffe09"/><stop offset=".8159" stop-color="#ffd000"/><stop offset=".8671" stop-color="#ffa800"/><stop offset=".9277" stop-color="#ff8600"/><stop offset="1" stop-color="#ff6800"/></linearGradient><linearGradient id="c79" gradientUnits="userSpaceOnUse" x1="1037" x2="1469" y1="0" y2="0"><stop offset="0" stop-color="#0f7"/><stop offset=".2708" stop-color="#00ff5e"/><stop offset=".5" stop-color="#00ff40"/><stop offset=".5694" stop-color="#3aff35"/><stop offset=".6343" stop-color="#76ff29"/><stop offset=".6944" stop-color="#b4ff1d"/><stop offset=".7593" stop-color="#fffe0d"/><stop offset=".8056" stop-color="#ffcd01"/><stop offset=".8611" stop-color="#ffa300"/><stop offset=".9259" stop-color="#ff8000"/><stop offset="1" stop-color="#ff6300"/></linearGradient><linearGradient id="c80" gradientUnits="userSpaceOnUse" x1="1037" x2="1472" y1="0" y2="0"><stop offset="0" stop-color="#00ff7a"/><stop offset=".269" stop-color="#00ff61"/><stop offset=".4943" stop-color="#01ff44"/><stop offset=".5632" stop-color="#3aff39"/><stop offset=".6276" stop-color="#77ff2d"/><stop offset=".6897" stop-color="#b9ff20"/><stop offset=".7471" stop-color="#feff12"/><stop offset=".7977" stop-color="#ffca04"/><stop offset=".8161" stop-color="#fb0"/><stop offset=".8529" stop-color="#ffa000"/><stop offset=".9195" stop-color="#ff7d00"/><stop offset="1" stop-color="#ff5e00"/></linearGradient><linearGradient id="c81" gradientUnits="userSpaceOnUse" x1="1038" x2="1476" y1="0" y2="0"><stop offset="0" stop-color="#00ff7c"/><stop offset=".2648" stop-color="#00ff64"/><stop offset=".4863" stop-color="#01ff47"/><stop offset=".5548" stop-color="#3bff3c"/><stop offset=".6187" stop-color="#79ff30"/><stop offset=".6781" stop-color="#b9ff24"/><stop offset=".7352" stop-color="#ffff17"/><stop offset=".7854" stop-color="#ffc907"/><stop offset=".8174" stop-color="#ffaf00"/><stop offset=".8447" stop-color="#ff9c00"/><stop offset=".9155" stop-color="#f70"/><stop offset="1" stop-color="#ff5800"/></linearGradient><linearGradient id="c82" gradientUnits="userSpaceOnUse" x1="1038" x2="1480" y1="0" y2="0"><stop offset="0" stop-color="#00ff7f"/><stop offset=".2602" stop-color="#00ff67"/><stop offset=".4796" stop-color="#01ff4b"/><stop offset=".5452" stop-color="#3aff40"/><stop offset=".6086" stop-color="#78ff34"/><stop offset=".6674" stop-color="#b9ff28"/><stop offset=".724" stop-color="#ffff1b"/><stop offset=".7489" stop-color="#ffe112"/><stop offset=".776" stop-color="#ffc60a"/><stop offset=".819" stop-color="#ffa400"/><stop offset=".8371" stop-color="#f90"/><stop offset=".9118" stop-color="#ff7200"/><stop offset="1" stop-color="#ff5300"/></linearGradient><linearGradient id="c83" gradientUnits="userSpaceOnUse" x1="1039" x2="1483" y1="0" y2="0"><stop offset="0" stop-color="#00ff82"/><stop offset=".2568" stop-color="#00ff6a"/><stop offset=".473" stop-color="#01ff4f"/><stop offset=".5383" stop-color="#3aff44"/><stop offset=".5991" stop-color="#77ff39"/><stop offset=".6577" stop-color="#b9ff2d"/><stop offset=".7117" stop-color="#fdff20"/><stop offset=".768" stop-color="#ffc30d"/><stop offset=".8311" stop-color="#ff9500"/><stop offset=".9077" stop-color="#ff6f00"/><stop offset="1" stop-color="#ff4f00"/></linearGradient><linearGradient id="c84" gradientUnits="userSpaceOnUse" x1="1039" x2="1487" y1="0" y2="0"><stop offset="0" stop-color="#00ff85"/><stop offset=".2545" stop-color="#00ff6e"/><stop offset=".4665" stop-color="#01ff52"/><stop offset=".5312" stop-color="#3bff48"/><stop offset=".5915" stop-color="#78ff3d"/><stop offset=".6473" stop-color="#b8ff31"/><stop offset=".7009" stop-color="#fdff25"/><stop offset=".7567" stop-color="#ffc211"/><stop offset=".8214" stop-color="#ff9201"/><stop offset=".9018" stop-color="#ff6b00"/><stop offset="1" stop-color="#ff4a00"/></linearGradient><linearGradient id="c85" gradientUnits="userSpaceOnUse" x1="1040" x2="1491" y1="0" y2="0"><stop offset="0" stop-color="#00ff87"/><stop offset=".2506" stop-color="#00ff71"/><stop offset=".459" stop-color="#01ff56"/><stop offset=".5211" stop-color="#3aff4c"/><stop offset=".5809" stop-color="#78ff41"/><stop offset=".6364" stop-color="#b8ff36"/><stop offset=".6896" stop-color="#feff29"/><stop offset=".7184" stop-color="#ffdc1d"/><stop offset=".7472" stop-color="#ffbf14"/><stop offset=".7783" stop-color="#ffa60b"/><stop offset=".8137" stop-color="#ff8f03"/><stop offset=".8315" stop-color="#ff8500"/><stop offset=".898" stop-color="#f60"/><stop offset="1" stop-color="#ff4600"/></linearGradient><linearGradient id="c86" gradientUnits="userSpaceOnUse" x1="1040" x2="1494" y1="0" y2="0"><stop offset="0" stop-color="#00ff8a"/><stop offset=".2467" stop-color="#00ff74"/><stop offset=".4537" stop-color="#01ff5a"/><stop offset=".5154" stop-color="#3aff50"/><stop offset=".5749" stop-color="#79ff45"/><stop offset=".63" stop-color="#bbff3a"/><stop offset=".6806" stop-color="#ffff2e"/><stop offset=".7093" stop-color="#ffdb22"/><stop offset=".7379" stop-color="#ffbe17"/><stop offset=".7709" stop-color="#ffa30e"/><stop offset=".8062" stop-color="#ff8c06"/><stop offset=".8348" stop-color="#ff7c00"/><stop offset=".8921" stop-color="#ff6300"/><stop offset="1" stop-color="#ff4200"/></linearGradient><linearGradient id="c87" gradientUnits="userSpaceOnUse" x1="1040" x2="1498" y1="0" y2="0"><stop offset="0" stop-color="#00ff8d"/><stop offset=".2445" stop-color="#00ff78"/><stop offset=".4476" stop-color="#01ff5e"/><stop offset=".5087" stop-color="#3bff54"/><stop offset=".5655" stop-color="#78ff4a"/><stop offset=".6179" stop-color="#b8ff3f"/><stop offset=".6703" stop-color="#ff3"/><stop offset=".6965" stop-color="#ffdd27"/><stop offset=".7271" stop-color="#ffbd1b"/><stop offset=".762" stop-color="#ffa110"/><stop offset=".7991" stop-color="#ff8808"/><stop offset=".8384" stop-color="#ff7400"/><stop offset=".8886" stop-color="#ff5f00"/><stop offset="1" stop-color="#ff3e00"/></linearGradient><linearGradient id="c88" gradientUnits="userSpaceOnUse" x1="1041" x2="1502" y1="0" y2="0"><stop offset="0" stop-color="#00ff90"/><stop offset=".2408" stop-color="#00ff7b"/><stop offset=".4403" stop-color="#01ff62"/><stop offset=".4989" stop-color="#3aff59"/><stop offset=".5553" stop-color="#77ff4f"/><stop offset=".6074" stop-color="#b7ff44"/><stop offset=".6573" stop-color="#fdff39"/><stop offset=".692" stop-color="#ffd528"/><stop offset=".7202" stop-color="#ffb81d"/><stop offset=".7549" stop-color="#ff9c12"/><stop offset=".7918" stop-color="#ff8509"/><stop offset=".8395" stop-color="#ff6d00"/><stop offset=".8829" stop-color="#ff5b00"/><stop offset="1" stop-color="#ff3a00"/></linearGradient><linearGradient id="c89" gradientUnits="userSpaceOnUse" x1="1041" x2="1505" y1="0" y2="0"><stop offset="0" stop-color="#00ff94"/><stop offset=".2371" stop-color="#00ff7f"/><stop offset=".4353" stop-color="#01ff66"/><stop offset=".4935" stop-color="#3aff5d"/><stop offset=".5474" stop-color="#76ff54"/><stop offset=".5991" stop-color="#b7ff49"/><stop offset=".6487" stop-color="#fdff3e"/><stop offset=".681" stop-color="#ffd62d"/><stop offset=".7112" stop-color="#ffb721"/><stop offset=".7457" stop-color="#ff9b16"/><stop offset=".7845" stop-color="#ff820c"/><stop offset=".8448" stop-color="#ff6500"/><stop offset=".8793" stop-color="#ff5800"/><stop offset="1" stop-color="#ff3600"/></linearGradient><linearGradient id="c90" gradientUnits="userSpaceOnUse" x1="1042" x2="1509" y1="0" y2="0"><stop offset="0" stop-color="#00ff97"/><stop offset=".2334" stop-color="#00ff83"/><stop offset=".4283" stop-color="#01ff6b"/><stop offset=".4861" stop-color="#3bff61"/><stop offset=".5396" stop-color="#78ff58"/><stop offset=".591" stop-color="#baff4e"/><stop offset=".6381" stop-color="#feff43"/><stop offset=".6681" stop-color="#ffd833"/><stop offset=".7002" stop-color="#ffb625"/><stop offset=".7345" stop-color="#ff9a19"/><stop offset=".7752" stop-color="#ff800e"/><stop offset=".8458" stop-color="#ff5f00"/><stop offset=".8737" stop-color="#f50"/><stop offset="1" stop-color="#f30"/></linearGradient><linearGradient id="c91" gradientUnits="userSpaceOnUse" x1="1042" x2="1513" y1="0" y2="0"><stop offset="0" stop-color="#00ff9a"/><stop offset=".2293" stop-color="#00ff86"/><stop offset=".4225" stop-color="#01ff6f"/><stop offset=".4777" stop-color="#3aff66"/><stop offset=".5308" stop-color="#77ff5d"/><stop offset=".5817" stop-color="#baff53"/><stop offset=".6285" stop-color="#ffff49"/><stop offset=".6582" stop-color="#ffd737"/><stop offset=".69" stop-color="#ffb529"/><stop offset=".7261" stop-color="#ff971c"/><stop offset=".7686" stop-color="#ff7c10"/><stop offset=".8493" stop-color="#ff5800"/><stop offset=".9193" stop-color="#ff4200"/><stop offset="1" stop-color="#ff2f00"/></linearGradient><linearGradient id="c92" gradientUnits="userSpaceOnUse" x1="1043" x2="1516" y1="0" y2="0"><stop offset="0" stop-color="#00ff9d"/><stop offset=".2262" stop-color="#00ff8a"/><stop offset=".4144" stop-color="#00ff74"/><stop offset=".4651" stop-color="#33ff6c"/><stop offset=".5201" stop-color="#74ff63"/><stop offset=".5708" stop-color="#b7ff59"/><stop offset=".6195" stop-color="#ffff4e"/><stop offset=".649" stop-color="#ffd63c"/><stop offset=".6808" stop-color="#ffb42c"/><stop offset=".7188" stop-color="#ff951e"/><stop offset=".7611" stop-color="#ff7a12"/><stop offset=".8541" stop-color="#ff5200"/><stop offset=".9218" stop-color="#ff3d00"/><stop offset="1" stop-color="#ff2c00"/></linearGradient><linearGradient id="c93" gradientUnits="userSpaceOnUse" x1="1043" x2="1520" y1="0" y2="0"><stop offset="0" stop-color="#00ffa0"/><stop offset=".2222" stop-color="#00ff8e"/><stop offset=".4088" stop-color="#00ff78"/><stop offset=".457" stop-color="#32ff71"/><stop offset=".5115" stop-color="#73ff68"/><stop offset=".5618" stop-color="#b6ff5f"/><stop offset=".608" stop-color="#fdff55"/><stop offset=".6415" stop-color="#ffd23f"/><stop offset=".673" stop-color="#ffb130"/><stop offset=".7107" stop-color="#ff9221"/><stop offset=".7547" stop-color="#ff7714"/><stop offset=".8008" stop-color="#ff600a"/><stop offset=".8553" stop-color="#ff4c00"/><stop offset="1" stop-color="#ff2900"/></linearGradient><linearGradient id="c94" gradientUnits="userSpaceOnUse" x1="1044" x2="1524" y1="0" y2="0"><stop offset="0" stop-color="#00ffa4"/><stop offset=".2188" stop-color="#00ff92"/><stop offset=".4021" stop-color="#00ff7d"/><stop offset=".45" stop-color="#33ff76"/><stop offset=".5042" stop-color="#74ff6d"/><stop offset=".5521" stop-color="#b6ff64"/><stop offset=".5979" stop-color="#fdff5b"/><stop offset=".6312" stop-color="#ffd144"/><stop offset=".6625" stop-color="#ffb033"/><stop offset=".7021" stop-color="#ff8f24"/><stop offset=".7458" stop-color="#ff7416"/><stop offset=".7979" stop-color="#ff5c0a"/><stop offset=".8583" stop-color="#ff4600"/><stop offset="1" stop-color="#ff2500"/></linearGradient><linearGradient id="c95" gradientUnits="userSpaceOnUse" x1="1044" x2="1527" y1="0" y2="0"><stop offset="0" stop-color="#00ffa7"/><stop offset=".2174" stop-color="#00ff96"/><stop offset=".3975" stop-color="#00ff82"/><stop offset=".4451" stop-color="#33ff7b"/><stop offset=".4969" stop-color="#73ff73"/><stop offset=".5445" stop-color="#b6ff6a"/><stop offset=".5901" stop-color="#feff61"/><stop offset=".6211" stop-color="#ffd34a"/><stop offset=".6542" stop-color="#ffaf38"/><stop offset=".6936" stop-color="#ff8e27"/><stop offset=".7391" stop-color="#ff7219"/><stop offset=".795" stop-color="#ff580c"/><stop offset=".8613" stop-color="#ff4200"/><stop offset="1" stop-color="#ff2300"/></linearGradient><linearGradient id="c96" gradientUnits="userSpaceOnUse" x1="1044" x2="1531" y1="0" y2="0"><stop offset="0" stop-color="#00ffab"/><stop offset=".2136" stop-color="#00ff9b"/><stop offset=".3922" stop-color="#00ff87"/><stop offset=".4394" stop-color="#34ff80"/><stop offset=".4908" stop-color="#75ff78"/><stop offset=".538" stop-color="#b9ff70"/><stop offset=".5811" stop-color="#ffff67"/><stop offset=".6119" stop-color="#ffd24f"/><stop offset=".6448" stop-color="#ffad3c"/><stop offset=".6838" stop-color="#ff8d2a"/><stop offset=".731" stop-color="#ff6f1b"/><stop offset=".7926" stop-color="#ff540c"/><stop offset=".8645" stop-color="#ff3c00"/><stop offset="1" stop-color="#ff2000"/></linearGradient><linearGradient id="c97" gradientUnits="userSpaceOnUse" x1="1045" x2="1535" y1="0" y2="0"><stop offset="0" stop-color="#00ffaf"/><stop offset=".2102" stop-color="#00ff9f"/><stop offset=".3857" stop-color="#00ff8c"/><stop offset=".4306" stop-color="#32ff86"/><stop offset=".4816" stop-color="#74ff7e"/><stop offset=".5265" stop-color="#b5ff76"/><stop offset=".5714" stop-color="#ffff6d"/><stop offset=".602" stop-color="#ffd154"/><stop offset=".6367" stop-color="#ffaa3f"/><stop offset=".6755" stop-color="#ff8a2d"/><stop offset=".7224" stop-color="#ff6d1d"/><stop offset=".7878" stop-color="#ff500d"/><stop offset=".8653" stop-color="#ff3800"/><stop offset="1" stop-color="#ff1d00"/></linearGradient><linearGradient id="c98" gradientUnits="userSpaceOnUse" x1="1045" x2="1538" y1="0" y2="0"><stop offset="0" stop-color="#00ffb2"/><stop offset=".2089" stop-color="#00ffa3"/><stop offset=".3813" stop-color="#00ff91"/><stop offset=".426" stop-color="#33ff8b"/><stop offset=".4746" stop-color="#73ff84"/><stop offset=".5193" stop-color="#b5ff7c"/><stop offset=".5619" stop-color="#fcff74"/><stop offset=".5963" stop-color="#ffcd58"/><stop offset=".6308" stop-color="#ffa742"/><stop offset=".6714" stop-color="#ff862f"/><stop offset=".7181" stop-color="#ff6a1f"/><stop offset=".787" stop-color="#ff4c0e"/><stop offset=".8702" stop-color="#f30"/><stop offset="1" stop-color="#ff1a00"/></linearGradient><linearGradient id="c99" gradientUnits="userSpaceOnUse" x1="1046" x2="1542" y1="0" y2="0"><stop offset="0" stop-color="#00ffb6"/><stop offset=".2056" stop-color="#00ffa8"/><stop offset=".375" stop-color="#00ff97"/><stop offset=".4194" stop-color="#34ff91"/><stop offset=".4677" stop-color="#75ff8a"/><stop offset=".5121" stop-color="#b8ff82"/><stop offset=".5524" stop-color="#fdff7b"/><stop offset=".5867" stop-color="#ffcc5d"/><stop offset=".621" stop-color="#ffa646"/><stop offset=".6613" stop-color="#ff8533"/><stop offset=".7097" stop-color="#ff6721"/><stop offset=".7823" stop-color="#ff490f"/><stop offset=".871" stop-color="#ff2f00"/><stop offset="1" stop-color="#ff1700"/></linearGradient><linearGradient id="c100" gradientUnits="userSpaceOnUse" x1="1046" x2="1546" y1="0" y2="0"><stop offset="0" stop-color="#00ffba"/><stop offset=".202" stop-color="#00ffad"/><stop offset=".37" stop-color="#00ff9c"/><stop offset=".412" stop-color="#32ff97"/><stop offset=".46" stop-color="#74ff90"/><stop offset=".504" stop-color="#b8ff89"/><stop offset=".544" stop-color="#feff82"/><stop offset=".576" stop-color="#ffcd63"/><stop offset=".612" stop-color="#ffa44a"/><stop offset=".654" stop-color="#ff8235"/><stop offset=".702" stop-color="#ff6524"/><stop offset=".78" stop-color="#ff4510"/><stop offset=".874" stop-color="#ff2b00"/><stop offset="1" stop-color="#ff1500"/></linearGradient><linearGradient id="c101" gradientUnits="userSpaceOnUse" x1="1047" x2="1549" y1="0" y2="0"><stop offset="0" stop-color="#00ffbe"/><stop offset=".1992" stop-color="#00ffb1"/><stop offset=".3645" stop-color="#00ffa2"/><stop offset=".4064" stop-color="#33ff9d"/><stop offset=".4542" stop-color="#75ff96"/><stop offset=".496" stop-color="#b7ff90"/><stop offset=".5359" stop-color="#ffff89"/><stop offset=".5677" stop-color="#ffcc69"/><stop offset=".6036" stop-color="#ffa34f"/><stop offset=".6454" stop-color="#ff8039"/><stop offset=".6952" stop-color="#ff6326"/><stop offset=".7769" stop-color="#ff4111"/><stop offset=".8785" stop-color="#ff2700"/><stop offset="1" stop-color="#ff1200"/></linearGradient><linearGradient id="c102" gradientUnits="userSpaceOnUse" x1="1048" x2="1553" y1="0" y2="0"><stop offset="0" stop-color="#00ffc2"/><stop offset=".3584" stop-color="#00ffa8"/><stop offset=".4" stop-color="#33ffa3"/><stop offset=".4455" stop-color="#74ff9d"/><stop offset=".4871" stop-color="#b7ff97"/><stop offset=".5267" stop-color="#ffff90"/><stop offset=".5584" stop-color="#ffcb6e"/><stop offset=".5941" stop-color="#ffa253"/><stop offset=".6376" stop-color="#ff7e3c"/><stop offset=".6871" stop-color="#ff6028"/><stop offset=".7723" stop-color="#ff3e12"/><stop offset=".8792" stop-color="#ff2300"/><stop offset="1" stop-color="#ff1000"/></linearGradient><linearGradient id="c103" gradientUnits="userSpaceOnUse" x1="1048" x2="1556" y1="0" y2="0"><stop offset="0" stop-color="#00ffc6"/><stop offset=".3543" stop-color="#00ffae"/><stop offset=".3937" stop-color="#32ffa9"/><stop offset=".439" stop-color="#73ffa4"/><stop offset=".4803" stop-color="#b7ff9e"/><stop offset=".5177" stop-color="#fcff98"/><stop offset=".5197" stop-color="#fffe97"/><stop offset=".5512" stop-color="#ffca74"/><stop offset=".5866" stop-color="#ffa158"/><stop offset=".6299" stop-color="#ff7c3f"/><stop offset=".6811" stop-color="#ff5e2b"/><stop offset=".7677" stop-color="#ff3c13"/><stop offset=".876" stop-color="#ff2101"/><stop offset="1" stop-color="#ff0d00"/></linearGradient><linearGradient id="c104" gradientUnits="userSpaceOnUse" x1="1049" x2="1560" y1="0" y2="0"><stop offset="0" stop-color="#00ffcb"/><stop offset=".3483" stop-color="#00ffb4"/><stop offset=".3875" stop-color="#32ffb0"/><stop offset=".4305" stop-color="#72ffab"/><stop offset=".4677" stop-color="#b0ffa6"/><stop offset=".5108" stop-color="#fffd9f"/><stop offset=".5421" stop-color="#ffc97a"/><stop offset=".5773" stop-color="#ff9f5c"/><stop offset=".6204" stop-color="#ff7b43"/><stop offset=".6732" stop-color="#ff5c2d"/><stop offset=".7593" stop-color="#ff3a15"/><stop offset=".8669" stop-color="#ff2003"/><stop offset="1" stop-color="#ff0b00"/></linearGradient><linearGradient id="c105" gradientUnits="userSpaceOnUse" x1="1050" x2="1564" y1="0" y2="0"><stop offset="0" stop-color="#00ffcf"/><stop offset=".3424" stop-color="#00ffba"/><stop offset=".3794" stop-color="#30ffb7"/><stop offset=".4222" stop-color="#71ffb2"/><stop offset=".4572" stop-color="#acffae"/><stop offset=".5" stop-color="#feffa8"/><stop offset=".5019" stop-color="#fffca6"/><stop offset=".5331" stop-color="#ffc880"/><stop offset=".57" stop-color="#ff9c60"/><stop offset=".6128" stop-color="#ff7846"/><stop offset=".6654" stop-color="#ff592f"/><stop offset=".751" stop-color="#ff3817"/><stop offset=".858" stop-color="#ff1e04"/><stop offset=".8891" stop-color="#ff1800"/><stop offset="1" stop-color="#ff0900"/></linearGradient><linearGradient id="c106" gradientUnits="userSpaceOnUse" x1="1050" x2="1567" y1="0" y2="0"><stop offset="0" stop-color="#00ffd4"/><stop offset=".3385" stop-color="#00ffc1"/><stop offset=".3772" stop-color="#34ffbd"/><stop offset=".4197" stop-color="#76ffb9"/><stop offset=".4584" stop-color="#baffb5"/><stop offset=".4932" stop-color="#ffffb0"/><stop offset=".5242" stop-color="#ffc988"/><stop offset=".5609" stop-color="#ff9c66"/><stop offset=".6054" stop-color="#ff7749"/><stop offset=".6576" stop-color="#ff5832"/><stop offset=".7408" stop-color="#ff371a"/><stop offset=".8472" stop-color="#ff1d06"/><stop offset=".8917" stop-color="#ff1500"/><stop offset="1" stop-color="#ff0700"/></linearGradient><linearGradient id="c107" gradientUnits="userSpaceOnUse" x1="1051" x2="1571" y1="0" y2="0"><stop offset="0" stop-color="#00ffd8"/><stop offset=".3327" stop-color="#00ffc7"/><stop offset=".3712" stop-color="#35ffc4"/><stop offset=".4115" stop-color="#75ffc1"/><stop offset=".4481" stop-color="#b6ffbd"/><stop offset=".4846" stop-color="#ffffb9"/><stop offset=".5" stop-color="#ffe1a1"/><stop offset=".5154" stop-color="#ffc88e"/><stop offset=".5519" stop-color="#ff9b6b"/><stop offset=".5962" stop-color="#ff754d"/><stop offset=".65" stop-color="#ff5634"/><stop offset=".7327" stop-color="#ff361b"/><stop offset=".8385" stop-color="#ff1c07"/><stop offset=".8942" stop-color="#ff1200"/><stop offset="1" stop-color="#ff0400"/></linearGradient><linearGradient id="c108" gradientUnits="userSpaceOnUse" x1="1052" x2="1575" y1="0" y2="0"><stop offset="0" stop-color="#0fd"/><stop offset=".327" stop-color="#00ffce"/><stop offset=".3633" stop-color="#3fc"/><stop offset=".4034" stop-color="#73ffc9"/><stop offset=".4379" stop-color="#b2ffc6"/><stop offset=".4761" stop-color="#fffec1"/><stop offset=".4914" stop-color="#ffe0a8"/><stop offset=".5067" stop-color="#ffc794"/><stop offset=".5449" stop-color="#ff976e"/><stop offset=".5908" stop-color="#ff714f"/><stop offset=".6444" stop-color="#ff5236"/><stop offset=".7266" stop-color="#ff331d"/><stop offset=".8317" stop-color="#ff1a09"/><stop offset=".8948" stop-color="#ff1000"/><stop offset="1" stop-color="#ff0200"/></linearGradient><linearGradient id="c109" gradientUnits="userSpaceOnUse" x1="1052" x2="1579" y1="0" y2="0"><stop offset="0" stop-color="#00ffe2"/><stop offset=".3226" stop-color="#00ffd6"/><stop offset=".3586" stop-color="#34ffd3"/><stop offset=".3966" stop-color="#72ffd1"/><stop offset=".4288" stop-color="#aeffce"/><stop offset=".4687" stop-color="#fffdc9"/><stop offset=".4839" stop-color="#ffdeb0"/><stop offset=".4991" stop-color="#ffc59b"/><stop offset=".537" stop-color="#ff9673"/><stop offset=".5825" stop-color="#ff7053"/><stop offset=".6376" stop-color="#ff5038"/><stop offset=".7211" stop-color="#ff311e"/><stop offset=".8254" stop-color="#ff180a"/><stop offset=".8975" stop-color="#ff0d00"/><stop offset="1" stop-color="#f00"/></linearGradient><linearGradient id="c110" gradientUnits="userSpaceOnUse" x1="1053" x2="1582" y1="0" y2="0"><stop offset="0" stop-color="#00ffe7"/><stop offset=".3176" stop-color="#0fd"/><stop offset=".3516" stop-color="#32ffdb"/><stop offset=".3894" stop-color="#71ffd9"/><stop offset=".4197" stop-color="#aaffd7"/><stop offset=".4594" stop-color="#feffd4"/><stop offset=".4612" stop-color="#fffcd2"/><stop offset=".4764" stop-color="#ffddb7"/><stop offset=".4915" stop-color="#ffc4a1"/><stop offset=".5293" stop-color="#ff9478"/><stop offset=".5747" stop-color="#ff6e57"/><stop offset=".6314" stop-color="#ff4e3b"/><stop offset=".7146" stop-color="#ff2f20"/><stop offset=".8185" stop-color="#ff170b"/><stop offset=".8998" stop-color="#ff0a00"/><stop offset="1" stop-color="#f00"/></linearGradient><linearGradient id="c111" gradientUnits="userSpaceOnUse" x1="1054" x2="1586" y1="0" y2="0"><stop offset="0" stop-color="#00ffec"/><stop offset=".312" stop-color="#00ffe5"/><stop offset=".3477" stop-color="#36ffe3"/><stop offset=".3853" stop-color="#76ffe2"/><stop offset=".4192" stop-color="#b8ffe0"/><stop offset=".4511" stop-color="#ffffde"/><stop offset=".4662" stop-color="#ffe0c2"/><stop offset=".4831" stop-color="#ffc3a8"/><stop offset=".5207" stop-color="#ff937d"/><stop offset=".5677" stop-color="#ff6b5a"/><stop offset=".6241" stop-color="#ff4b3d"/><stop offset=".7068" stop-color="#ff2d22"/><stop offset=".8102" stop-color="#ff150d"/><stop offset=".9023" stop-color="#ff0700"/><stop offset=".9643" stop-color="#f00"/><stop offset="1" stop-color="#f00"/></linearGradient><linearGradient id="c112" gradientUnits="userSpaceOnUse" x1="1054" x2="1589" y1="0" y2="0"><stop offset="0" stop-color="#00fff2"/><stop offset=".3084" stop-color="#00ffec"/><stop offset=".3421" stop-color="#34ffec"/><stop offset=".3794" stop-color="#75ffea"/><stop offset=".4131" stop-color="#b8ffe9"/><stop offset=".4449" stop-color="#fffee8"/><stop offset=".4598" stop-color="#ffdeca"/><stop offset=".4766" stop-color="#ffc1af"/><stop offset=".514" stop-color="#ff9182"/><stop offset=".5607" stop-color="#ff6a5e"/><stop offset=".6187" stop-color="#ff493f"/><stop offset=".7009" stop-color="#ff2b24"/><stop offset=".8037" stop-color="#ff140e"/><stop offset=".9047" stop-color="#ff0500"/><stop offset=".9458" stop-color="#f00"/><stop offset="1" stop-color="#f00"/></linearGradient><linearGradient id="c113" gradientUnits="userSpaceOnUse" x1="1055" x2="1593" y1="0" y2="0"><stop offset="0" stop-color="#00fff7"/><stop offset=".303" stop-color="#00fff5"/><stop offset=".3364" stop-color="#34fff4"/><stop offset=".3717" stop-color="#74fff4"/><stop offset=".4033" stop-color="#b4fff3"/><stop offset=".4368" stop-color="#fffef1"/><stop offset=".4517" stop-color="#ffddd2"/><stop offset=".4684" stop-color="#ffc0b6"/><stop offset=".487" stop-color="#ffa59c"/><stop offset=".5074" stop-color="#ff8e86"/><stop offset=".5558" stop-color="#ff655f"/><stop offset=".6134" stop-color="#ff4641"/><stop offset=".6952" stop-color="#ff2925"/><stop offset=".7993" stop-color="#ff120f"/><stop offset=".9071" stop-color="#ff0200"/><stop offset="1" stop-color="#f00"/></linearGradient><linearGradient id="c114" gradientUnits="userSpaceOnUse" x1="1056" x2="1597" y1="0" y2="0"><stop offset="0" stop-color="#00fffd"/><stop offset=".2976" stop-color="#00fffd"/><stop offset=".329" stop-color="#32fffd"/><stop offset=".3641" stop-color="#72fffd"/><stop offset=".3937" stop-color="#affffd"/><stop offset=".4288" stop-color="#fffdfb"/><stop offset=".4436" stop-color="#ffdcda"/><stop offset=".4603" stop-color="#ffbebd"/><stop offset=".4787" stop-color="#ffa4a3"/><stop offset=".4991" stop-color="#ff8c8b"/><stop offset=".5471" stop-color="#ff6463"/><stop offset=".6063" stop-color="#ff4343"/><stop offset=".6895" stop-color="#ff2626"/><stop offset=".793" stop-color="#ff1010"/><stop offset=".9076" stop-color="#f00"/><stop offset="1" stop-color="#f00"/></linearGradient><linearGradient id="c115" gradientUnits="userSpaceOnUse" x1="1056" x2="1600" y1="0" y2="0"><stop offset="0" stop-color="#00fbff"/><stop offset=".2941" stop-color="#00f8ff"/><stop offset=".3254" stop-color="#32f8ff"/><stop offset=".3603" stop-color="#71f7ff"/><stop offset=".3934" stop-color="#b5f7ff"/><stop offset=".4246" stop-color="#fef6ff"/><stop offset=".4265" stop-color="#fff3fc"/><stop offset=".4412" stop-color="#ffd3dc"/><stop offset=".4577" stop-color="#ffb7be"/><stop offset=".4761" stop-color="#ff9da4"/><stop offset=".4963" stop-color="#ff878d"/><stop offset=".5441" stop-color="#ff6065"/><stop offset=".6048" stop-color="#ff4044"/><stop offset=".6912" stop-color="#ff2326"/><stop offset=".7996" stop-color="#ff0c0f"/><stop offset=".8897" stop-color="#ff0003"/><stop offset="1" stop-color="#f00"/></linearGradient><linearGradient id="c116" gradientUnits="userSpaceOnUse" x1="1057" x2="1604" y1="0" y2="0"><stop offset="0" stop-color="#00f6ff"/><stop offset=".2888" stop-color="#00f0ff"/><stop offset=".3218" stop-color="#34efff"/><stop offset=".3565" stop-color="#73eeff"/><stop offset=".3857" stop-color="#aeedff"/><stop offset=".4223" stop-color="#ffe9fc"/><stop offset=".4369" stop-color="#ffcbdd"/><stop offset=".4534" stop-color="#ffb0c0"/><stop offset=".4717" stop-color="#ff97a6"/><stop offset=".4936" stop-color="#ff808c"/><stop offset=".5411" stop-color="#ff5b65"/><stop offset=".6015" stop-color="#ff3c44"/><stop offset=".691" stop-color="#ff1f26"/><stop offset=".8062" stop-color="#ff090e"/><stop offset=".872" stop-color="#ff0005"/><stop offset=".9141" stop-color="#f00"/><stop offset="1" stop-color="#f00"/></linearGradient><linearGradient id="c117" gradientUnits="userSpaceOnUse" x1="1058" x2="1608" y1="0" y2="0"><stop offset="0" stop-color="#00f0ff"/><stop offset=".2836" stop-color="#00e8ff"/><stop offset=".3164" stop-color="#33e7ff"/><stop offset=".3527" stop-color="#74e5ff"/><stop offset=".3836" stop-color="#b2e3ff"/><stop offset=".4182" stop-color="#ffe0fd"/><stop offset=".4327" stop-color="#ffc3de"/><stop offset=".4491" stop-color="#ffa9c1"/><stop offset=".4673" stop-color="#ff91a7"/><stop offset=".4891" stop-color="#ff7a8e"/><stop offset=".5382" stop-color="#ff5565"/><stop offset=".5982" stop-color="#ff3845"/><stop offset=".6927" stop-color="#ff1b25"/><stop offset=".8145" stop-color="#ff050d"/><stop offset=".8527" stop-color="#ff0007"/><stop offset=".9145" stop-color="#f00"/><stop offset="1" stop-color="#f00"/></linearGradient><linearGradient id="c118" gradientUnits="userSpaceOnUse" x1="1058" x2="1611" y1="0" y2="0"><stop offset="0" stop-color="#00eaff"/><stop offset=".2803" stop-color="#00e0ff"/><stop offset=".3146" stop-color="#35deff"/><stop offset=".3508" stop-color="#75dcff"/><stop offset=".3816" stop-color="#b3daff"/><stop offset=".4159" stop-color="#ffd7fe"/><stop offset=".4322" stop-color="#ffb8db"/><stop offset=".4485" stop-color="#ffa0bf"/><stop offset=".4665" stop-color="#ff89a6"/><stop offset=".4882" stop-color="#ff748e"/><stop offset=".5371" stop-color="#ff5166"/><stop offset=".5967" stop-color="#ff3446"/><stop offset=".6962" stop-color="#ff1725"/><stop offset=".8246" stop-color="#ff020c"/><stop offset=".9186" stop-color="#f00"/><stop offset="1" stop-color="#f00"/></linearGradient><linearGradient id="c119" gradientUnits="userSpaceOnUse" x1="1059" x2="1615" y1="0" y2="0"><stop offset="0" stop-color="#00e5ff"/><stop offset=".2752" stop-color="#00d9ff"/><stop offset=".3112" stop-color="#38d6ff"/><stop offset=".3471" stop-color="#77d4ff"/><stop offset=".3795" stop-color="#b7d1ff"/><stop offset=".4119" stop-color="#ffceff"/><stop offset=".4281" stop-color="#ffb1dc"/><stop offset=".4442" stop-color="#ff99c1"/><stop offset=".4622" stop-color="#ff84a8"/><stop offset=".4838" stop-color="#ff6f8f"/><stop offset=".5324" stop-color="#ff4d67"/><stop offset=".5935" stop-color="#ff3146"/><stop offset=".6906" stop-color="#ff1526"/><stop offset=".8183" stop-color="#ff000d"/><stop offset=".9191" stop-color="#f00"/><stop offset="1" stop-color="#f00"/></linearGradient><linearGradient id="c120" gradientUnits="userSpaceOnUse" x1="1060" x2="1619" y1="0" y2="0"><stop offset="0" stop-color="#00e0ff"/><stop offset=".2701" stop-color="#00d2ff"/><stop offset=".3059" stop-color="#37cfff"/><stop offset=".3417" stop-color="#75ccff"/><stop offset=".3757" stop-color="#b7c8ff"/><stop offset=".4079" stop-color="#ffc5ff"/><stop offset=".424" stop-color="#ffa9dd"/><stop offset=".4419" stop-color="#ff90bf"/><stop offset=".4597" stop-color="#ff7ca7"/><stop offset=".4812" stop-color="#ff688f"/><stop offset=".5313" stop-color="#ff4766"/><stop offset=".5921" stop-color="#ff2d46"/><stop offset=".6834" stop-color="#ff1427"/><stop offset=".7996" stop-color="#ff0010"/><stop offset=".9213" stop-color="#f00"/><stop offset="1" stop-color="#f00"/></linearGradient><linearGradient id="c121" gradientUnits="userSpaceOnUse" x1="1060" x2="1622" y1="0" y2="0"><stop offset="0" stop-color="#00daff"/><stop offset=".2669" stop-color="#00caff"/><stop offset=".3025" stop-color="#36c7ff"/><stop offset=".3381" stop-color="#73c4ff"/><stop offset=".3683" stop-color="#adc0ff"/><stop offset=".4057" stop-color="#febcff"/><stop offset=".4075" stop-color="#ffb9fc"/><stop offset=".4235" stop-color="#ff9fdb"/><stop offset=".4395" stop-color="#ff8ac0"/><stop offset=".4591" stop-color="#ff75a6"/><stop offset=".4804" stop-color="#ff628e"/><stop offset=".5302" stop-color="#ff4366"/><stop offset=".5925" stop-color="#ff2946"/><stop offset=".6779" stop-color="#ff1229"/><stop offset=".7847" stop-color="#ff0012"/><stop offset=".9235" stop-color="#f00"/><stop offset="1" stop-color="#f00"/></linearGradient><linearGradient id="c122" gradientUnits="userSpaceOnUse" x1="1061" x2="1626" y1="0" y2="0"><stop offset="0" stop-color="#00d5ff"/><stop offset=".2619" stop-color="#00c4ff"/><stop offset=".2973" stop-color="#35c0ff"/><stop offset=".3345" stop-color="#74bcff"/><stop offset=".3664" stop-color="#b1b8ff"/><stop offset=".4035" stop-color="#ffb1fd"/><stop offset=".4195" stop-color="#ff98dc"/><stop offset=".4372" stop-color="#ff82bf"/><stop offset=".4566" stop-color="#ff6ea5"/><stop offset=".4779" stop-color="#ff5c8e"/><stop offset=".5274" stop-color="#ff3e67"/><stop offset=".5894" stop-color="#ff2546"/><stop offset=".669" stop-color="#ff112b"/><stop offset=".7664" stop-color="#ff0016"/><stop offset=".9257" stop-color="#f00"/><stop offset="1" stop-color="#f00"/></linearGradient><linearGradient id="c123" gradientUnits="userSpaceOnUse" x1="1062" x2="1630" y1="0" y2="0"><stop offset="0" stop-color="#00d0ff"/><stop offset=".257" stop-color="#00bdff"/><stop offset=".294" stop-color="#37b9ff"/><stop offset=".331" stop-color="#75b4ff"/><stop offset=".3627" stop-color="#b1b0ff"/><stop offset=".3996" stop-color="#ffa9fd"/><stop offset=".4155" stop-color="#ff92dd"/><stop offset=".4331" stop-color="#ff7cc0"/><stop offset=".4525" stop-color="#ff69a6"/><stop offset=".4736" stop-color="#ff588f"/><stop offset=".5246" stop-color="#ff3a67"/><stop offset=".5863" stop-color="#ff2247"/><stop offset=".6602" stop-color="#ff0f2d"/><stop offset=".75" stop-color="#ff0019"/><stop offset=".9261" stop-color="#f00"/><stop offset="1" stop-color="#f00"/></linearGradient><linearGradient id="c124" gradientUnits="userSpaceOnUse" x1="1063" x2="1633" y1="0" y2="0"><stop offset="0" stop-color="#00cbff"/><stop offset=".2526" stop-color="#00b6ff"/><stop offset=".2895" stop-color="#36b2ff"/><stop offset=".3281" stop-color="#77adff"/><stop offset=".3614" stop-color="#b5a8ff"/><stop offset=".3965" stop-color="#ffa2fe"/><stop offset=".4123" stop-color="#ff8bde"/><stop offset=".4298" stop-color="#ff76c1"/><stop offset=".4702" stop-color="#ff5391"/><stop offset=".5211" stop-color="#ff3768"/><stop offset=".5842" stop-color="#ff1f47"/><stop offset=".6526" stop-color="#ff0e2f"/><stop offset=".7333" stop-color="#ff001c"/><stop offset=".9158" stop-color="#ff0002"/><stop offset="1" stop-color="#f00"/></linearGradient><linearGradient id="c125" gradientUnits="userSpaceOnUse" x1="1063" x2="1634" y1="0" y2="0"><stop offset="0" stop-color="#00c6ff"/><stop offset=".2504" stop-color="#00b0ff"/><stop offset=".289" stop-color="#38abff"/><stop offset=".3275" stop-color="#78a6ff"/><stop offset=".3625" stop-color="#b9a0ff"/><stop offset=".3958" stop-color="#ff9aff"/><stop offset=".4116" stop-color="#ff84df"/><stop offset=".4291" stop-color="#ff71c3"/><stop offset=".4483" stop-color="#ff5fa9"/><stop offset=".4711" stop-color="#ff4e90"/><stop offset=".5219" stop-color="#ff3269"/><stop offset=".5849" stop-color="#ff1c48"/><stop offset=".6462" stop-color="#ff0d32"/><stop offset=".7198" stop-color="#ff0020"/><stop offset=".8949" stop-color="#ff0004"/><stop offset=".937" stop-color="#f00"/><stop offset="1" stop-color="#f00"/></linearGradient><linearGradient id="c126" gradientUnits="userSpaceOnUse" x1="1064" x2="1634" y1="0" y2="0"><stop offset="0" stop-color="#00c1ff"/><stop offset=".2474" stop-color="#0af"/><stop offset=".2842" stop-color="#35a5ff"/><stop offset=".3211" stop-color="#70a0ff"/><stop offset=".3596" stop-color="#b699ff"/><stop offset=".3947" stop-color="#fe93ff"/><stop offset=".3965" stop-color="#ff90fc"/><stop offset=".4123" stop-color="#ff7cdd"/><stop offset=".4298" stop-color="#ff69c1"/><stop offset=".4491" stop-color="#ff59a8"/><stop offset=".4719" stop-color="#ff4990"/><stop offset=".5228" stop-color="#ff2e69"/><stop offset=".586" stop-color="#ff1948"/><stop offset=".6421" stop-color="#ff0c34"/><stop offset=".7088" stop-color="#ff0023"/><stop offset=".8772" stop-color="#ff0007"/><stop offset=".9439" stop-color="#f00"/><stop offset="1" stop-color="#f00"/></linearGradient><linearGradient id="c127" gradientUnits="userSpaceOnUse" x1="1065" x2="1634" y1="0" y2="0"><stop offset="0" stop-color="#00bcff"/><stop offset=".2443" stop-color="#00a4ff"/><stop offset=".2812" stop-color="#349fff"/><stop offset=".3199" stop-color="#7199ff"/><stop offset=".3533" stop-color="#ad93ff"/><stop offset=".3937" stop-color="#fe8bff"/><stop offset=".3954" stop-color="#ff89fc"/><stop offset=".4112" stop-color="#ff76de"/><stop offset=".4288" stop-color="#ff64c2"/><stop offset=".4482" stop-color="#ff54a9"/><stop offset=".471" stop-color="#ff4591"/><stop offset=".522" stop-color="#ff2b6a"/><stop offset=".5852" stop-color="#ff164a"/><stop offset=".696" stop-color="#ff0027"/><stop offset=".7663" stop-color="#ff0018"/><stop offset=".9244" stop-color="#ff0003"/><stop offset="1" stop-color="#f00"/></linearGradient><linearGradient id="c128" gradientUnits="userSpaceOnUse" x1="1066" x2="1634" y1="0" y2="0"><stop offset="0" stop-color="#00b7ff"/><stop offset=".2412" stop-color="#009eff"/><stop offset=".2799" stop-color="#3699ff"/><stop offset=".3187" stop-color="#7292ff"/><stop offset=".3539" stop-color="#b08cff"/><stop offset=".3944" stop-color="#ff83fd"/><stop offset=".4102" stop-color="#ff70df"/><stop offset=".4278" stop-color="#ff5fc3"/><stop offset=".4701" stop-color="#ff4193"/><stop offset=".5211" stop-color="#ff286b"/><stop offset=".5845" stop-color="#ff144b"/><stop offset=".6831" stop-color="#ff002b"/><stop offset=".7641" stop-color="#ff001a"/><stop offset=".9137" stop-color="#ff0005"/><stop offset="1" stop-color="#f00"/></linearGradient><linearGradient id="c129" gradientUnits="userSpaceOnUse" x1="1067" x2="1634" y1="0" y2="0"><stop offset="0" stop-color="#00b2ff"/><stop offset=".2381" stop-color="#09f"/><stop offset=".2787" stop-color="#3893ff"/><stop offset=".3175" stop-color="#748cff"/><stop offset=".3545" stop-color="#b485ff"/><stop offset=".3933" stop-color="#ff7cfe"/><stop offset=".4092" stop-color="#ff6ae0"/><stop offset=".4268" stop-color="#ff5ac4"/><stop offset=".4691" stop-color="#ff3d94"/><stop offset=".5203" stop-color="#ff256d"/><stop offset=".5838" stop-color="#ff124c"/><stop offset=".672" stop-color="#ff002f"/><stop offset=".7601" stop-color="#ff001b"/><stop offset=".8995" stop-color="#ff0007"/><stop offset="1" stop-color="#f00"/></linearGradient><linearGradient id="c130" gradientUnits="userSpaceOnUse" x1="1068" x2="1634" y1="0" y2="0"><stop offset="0" stop-color="#00aeff"/><stop offset=".235" stop-color="#0093ff"/><stop offset=".2756" stop-color="#378dff"/><stop offset=".3163" stop-color="#7586ff"/><stop offset=".3534" stop-color="#b47eff"/><stop offset=".3922" stop-color="#ff75fe"/><stop offset=".4081" stop-color="#ff64e1"/><stop offset=".4258" stop-color="#ff55c5"/><stop offset=".4682" stop-color="#ff3995"/><stop offset=".5194" stop-color="#ff226e"/><stop offset=".583" stop-color="#ff0f4d"/><stop offset=".659" stop-color="#f03"/><stop offset=".758" stop-color="#ff001d"/><stop offset=".8905" stop-color="#ff0009"/><stop offset="1" stop-color="#f00"/></linearGradient><linearGradient id="c131" gradientUnits="userSpaceOnUse" x1="1068" x2="1634" y1="0" y2="0"><stop offset="0" stop-color="#00a9ff"/><stop offset=".2332" stop-color="#008eff"/><stop offset=".2756" stop-color="#3987ff"/><stop offset=".3163" stop-color="#7680ff"/><stop offset=".3551" stop-color="#b878ff"/><stop offset=".3922" stop-color="#ff6fff"/><stop offset=".4081" stop-color="#ff5fe2"/><stop offset=".4258" stop-color="#ff50c7"/><stop offset=".4682" stop-color="#ff3596"/><stop offset=".5194" stop-color="#ff1f6f"/><stop offset=".583" stop-color="#ff0d4f"/><stop offset=".6484" stop-color="#ff0037"/><stop offset=".7562" stop-color="#ff001e"/><stop offset=".8799" stop-color="#ff000b"/><stop offset="1" stop-color="#f00"/></linearGradient><linearGradient id="c132" gradientUnits="userSpaceOnUse" x1="1069" x2="1634" y1="0" y2="0"><stop offset="0" stop-color="#00a5ff"/><stop offset=".2301" stop-color="#0089ff"/><stop offset=".2708" stop-color="#3582ff"/><stop offset=".3115" stop-color="#717aff"/><stop offset=".3469" stop-color="#ac73ff"/><stop offset=".3912" stop-color="#fe68ff"/><stop offset=".3929" stop-color="#ff67fc"/><stop offset=".4106" stop-color="#ff56dd"/><stop offset=".4283" stop-color="#ff48c3"/><stop offset=".4708" stop-color="#ff2f94"/><stop offset=".5221" stop-color="#ff1b6e"/><stop offset=".5841" stop-color="#ff0a4f"/><stop offset=".6354" stop-color="#ff003c"/><stop offset=".754" stop-color="#ff001f"/><stop offset=".8708" stop-color="#ff000d"/><stop offset="1" stop-color="#f00"/></linearGradient><linearGradient id="c133" gradientUnits="userSpaceOnUse" x1="1070" x2="1626" y1="0" y2="0"><stop offset="0" stop-color="#00a0ff"/><stop offset=".2302" stop-color="#0084ff"/><stop offset=".2734" stop-color="#377cff"/><stop offset=".3147" stop-color="#7375ff"/><stop offset=".3525" stop-color="#af6dff"/><stop offset=".3975" stop-color="#ff61fd"/><stop offset=".4137" stop-color="#ff52e0"/><stop offset=".4317" stop-color="#ff45c6"/><stop offset=".4748" stop-color="#ff2c97"/><stop offset=".527" stop-color="#ff1871"/><stop offset=".5881" stop-color="#ff0852"/><stop offset=".6331" stop-color="#ff0041"/><stop offset=".7554" stop-color="#f02"/><stop offset=".8669" stop-color="#ff0010"/><stop offset="1" stop-color="#ff0001"/></linearGradient><linearGradient id="c134" gradientUnits="userSpaceOnUse" x1="1071" x2="1618" y1="0" y2="0"><stop offset="0" stop-color="#009cff"/><stop offset=".2303" stop-color="#007fff"/><stop offset=".2742" stop-color="#3677ff"/><stop offset=".3181" stop-color="#746fff"/><stop offset=".3565" stop-color="#b067ff"/><stop offset=".4022" stop-color="#ff5bfd"/><stop offset=".4369" stop-color="#ff40c7"/><stop offset=".4808" stop-color="#ff2998"/><stop offset=".532" stop-color="#ff1673"/><stop offset=".5941" stop-color="#ff0754"/><stop offset=".6289" stop-color="#ff0046"/><stop offset=".7587" stop-color="#ff0024"/><stop offset=".8684" stop-color="#ff0012"/><stop offset="1" stop-color="#ff0003"/></linearGradient><linearGradient id="c135" gradientUnits="userSpaceOnUse" x1="1072" x2="1611" y1="0" y2="0"><stop offset="0" stop-color="#0097ff"/><stop offset=".2301" stop-color="#007aff"/><stop offset=".2764" stop-color="#3872ff"/><stop offset=".321" stop-color="#7569ff"/><stop offset=".3618" stop-color="#b360ff"/><stop offset=".4063" stop-color="#ff55fe"/><stop offset=".4416" stop-color="#ff3bc8"/><stop offset=".4842" stop-color="#ff269b"/><stop offset=".5362" stop-color="#ff1475"/><stop offset=".5993" stop-color="#ff0555"/><stop offset=".6234" stop-color="#ff004c"/><stop offset=".6735" stop-color="#ff003c"/><stop offset=".7625" stop-color="#ff0026"/><stop offset=".8701" stop-color="#ff0014"/><stop offset="1" stop-color="#ff0005"/></linearGradient><linearGradient id="c136" gradientUnits="userSpaceOnUse" x1="1073" x2="1603" y1="0" y2="0"><stop offset="0" stop-color="#0093ff"/><stop offset=".2302" stop-color="#0075ff"/><stop offset=".2774" stop-color="#376dff"/><stop offset=".3245" stop-color="#7664ff"/><stop offset=".3679" stop-color="#b75aff"/><stop offset=".4113" stop-color="#ff4ffe"/><stop offset=".4472" stop-color="#ff37c9"/><stop offset=".4906" stop-color="#ff229c"/><stop offset=".5415" stop-color="#f17"/><stop offset=".6038" stop-color="#ff0358"/><stop offset=".6774" stop-color="#ff003e"/><stop offset=".766" stop-color="#ff0029"/><stop offset=".8717" stop-color="#ff0017"/><stop offset="1" stop-color="#ff0008"/></linearGradient><linearGradient id="c137" gradientUnits="userSpaceOnUse" x1="1074" x2="1595" y1="0" y2="0"><stop offset="0" stop-color="#008fff"/><stop offset=".2303" stop-color="#0071ff"/><stop offset=".2802" stop-color="#3968ff"/><stop offset=".3282" stop-color="#775fff"/><stop offset=".3743" stop-color="#ba54ff"/><stop offset=".4165" stop-color="#ff4aff"/><stop offset=".453" stop-color="#ff33ca"/><stop offset=".4952" stop-color="#ff209f"/><stop offset=".547" stop-color="#ff0f7a"/><stop offset=".6084" stop-color="#ff015b"/><stop offset=".6814" stop-color="#ff0041"/><stop offset=".7697" stop-color="#ff002b"/><stop offset=".8752" stop-color="#ff0019"/><stop offset="1" stop-color="#ff000a"/></linearGradient><linearGradient id="c138" gradientUnits="userSpaceOnUse" x1="1075" x2="1587" y1="0" y2="0"><stop offset="0" stop-color="#008aff"/><stop offset=".2305" stop-color="#006cff"/><stop offset=".2793" stop-color="#3664ff"/><stop offset=".3281" stop-color="#735aff"/><stop offset=".3711" stop-color="#ae51ff"/><stop offset=".4219" stop-color="#fe44ff"/><stop offset=".4238" stop-color="#ff43fc"/><stop offset=".4609" stop-color="#ff2dc9"/><stop offset=".5039" stop-color="#ff1b9e"/><stop offset=".5547" stop-color="#ff0c7b"/><stop offset=".6152" stop-color="#ff005d"/><stop offset=".6875" stop-color="#ff0043"/><stop offset=".7754" stop-color="#ff002d"/><stop offset=".8789" stop-color="#ff001b"/><stop offset="1" stop-color="#ff000c"/></linearGradient><linearGradient id="c139" gradientUnits="userSpaceOnUse" x1="1076" x2="1579" y1="0" y2="0"><stop offset="0" stop-color="#0086ff"/><stop offset=".2306" stop-color="#0068ff"/><stop offset=".2823" stop-color="#385fff"/><stop offset=".332" stop-color="#7455ff"/><stop offset=".3757" stop-color="#af4cff"/><stop offset=".4294" stop-color="#ff3efd"/><stop offset=".4652" stop-color="#ff2acc"/><stop offset=".5089" stop-color="#ff19a1"/><stop offset=".5606" stop-color="#ff0a7d"/><stop offset=".6223" stop-color="#ff005f"/><stop offset=".6938" stop-color="#ff0046"/><stop offset=".7793" stop-color="#ff0030"/><stop offset=".8807" stop-color="#ff001e"/><stop offset="1" stop-color="#ff000f"/></linearGradient><linearGradient id="c140" gradientUnits="userSpaceOnUse" x1="1077" x2="1571" y1="0" y2="0"><stop offset="0" stop-color="#0082ff"/><stop offset=".2308" stop-color="#0064ff"/><stop offset=".2854" stop-color="#395aff"/><stop offset=".336" stop-color="#7550ff"/><stop offset=".3826" stop-color="#b246ff"/><stop offset=".4352" stop-color="#ff39fd"/><stop offset=".4717" stop-color="#ff26cd"/><stop offset=".5162" stop-color="#ff15a2"/><stop offset=".5668" stop-color="#ff087f"/><stop offset=".6032" stop-color="#ff006c"/><stop offset=".6275" stop-color="#ff0061"/><stop offset=".6984" stop-color="#ff0048"/><stop offset=".7834" stop-color="#f03"/><stop offset=".8826" stop-color="#ff0021"/><stop offset="1" stop-color="#f01"/></linearGradient><linearGradient id="c141" gradientUnits="userSpaceOnUse" x1="1077" x2="1564" y1="0" y2="0"><stop offset="0" stop-color="#007eff"/><stop offset=".232" stop-color="#005fff"/><stop offset=".2875" stop-color="#3956ff"/><stop offset=".3409" stop-color="#764bff"/><stop offset=".3901" stop-color="#b541ff"/><stop offset=".4415" stop-color="#ff34fe"/><stop offset=".4784" stop-color="#ff22ce"/><stop offset=".5216" stop-color="#ff12a5"/><stop offset=".5565" stop-color="#ff098c"/><stop offset=".5975" stop-color="#ff0074"/><stop offset=".6324" stop-color="#ff0064"/><stop offset=".7023" stop-color="#ff004b"/><stop offset=".7864" stop-color="#ff0035"/><stop offset=".885" stop-color="#ff0023"/><stop offset="1" stop-color="#ff0014"/></linearGradient><linearGradient id="c142" gradientUnits="userSpaceOnUse" x1="1078" x2="1556" y1="0" y2="0"><stop offset="0" stop-color="#007aff"/><stop offset=".2322" stop-color="#005bff"/><stop offset=".2908" stop-color="#3a51ff"/><stop offset=".3452" stop-color="#7747ff"/><stop offset=".3975" stop-color="#b83bff"/><stop offset=".4477" stop-color="#ff2fff"/><stop offset=".4854" stop-color="#ff1ecf"/><stop offset=".5272" stop-color="#ff10a8"/><stop offset=".5941" stop-color="#ff007c"/><stop offset=".6381" stop-color="#ff0067"/><stop offset=".7092" stop-color="#ff004e"/><stop offset=".7908" stop-color="#ff0038"/><stop offset=".887" stop-color="#ff0026"/><stop offset="1" stop-color="#ff0016"/></linearGradient><linearGradient id="c143" gradientUnits="userSpaceOnUse" x1="1079" x2="1548" y1="0" y2="0"><stop offset="0" stop-color="#0076ff"/><stop offset=".2324" stop-color="#0057ff"/><stop offset=".2921" stop-color="#394dff"/><stop offset=".3497" stop-color="#7842ff"/><stop offset=".403" stop-color="#b937ff"/><stop offset=".4542" stop-color="#ff2aff"/><stop offset=".4925" stop-color="#ff1acf"/><stop offset=".5352" stop-color="#ff0ca9"/><stop offset=".5885" stop-color="#ff0085"/><stop offset=".6461" stop-color="#ff0069"/><stop offset=".7143" stop-color="#ff0051"/><stop offset=".7953" stop-color="#ff003b"/><stop offset=".8891" stop-color="#ff0029"/><stop offset="1" stop-color="#ff0019"/></linearGradient><linearGradient id="c144" gradientUnits="userSpaceOnUse" x1="1080" x2="1540" y1="0" y2="0"><stop offset="0" stop-color="#0072ff"/><stop offset=".2326" stop-color="#0054ff"/><stop offset=".2935" stop-color="#3949ff"/><stop offset=".35" stop-color="#743eff"/><stop offset=".4" stop-color="#ae34ff"/><stop offset=".463" stop-color="#ff24fd"/><stop offset=".5" stop-color="#ff16d0"/><stop offset=".5435" stop-color="#ff09aa"/><stop offset=".5848" stop-color="#ff008e"/><stop offset=".6522" stop-color="#ff006c"/><stop offset=".7196" stop-color="#ff0054"/><stop offset=".8" stop-color="#ff003e"/><stop offset=".8935" stop-color="#ff002c"/><stop offset="1" stop-color="#ff001c"/></linearGradient><linearGradient id="c145" gradientUnits="userSpaceOnUse" x1="1081" x2="1532" y1="0" y2="0"><stop offset="0" stop-color="#006eff"/><stop offset=".2328" stop-color="#0050ff"/><stop offset=".2949" stop-color="#3845ff"/><stop offset=".3548" stop-color="#753aff"/><stop offset=".408" stop-color="#b12fff"/><stop offset=".4701" stop-color="#ff20fd"/><stop offset=".5078" stop-color="#ff12d1"/><stop offset=".5499" stop-color="#ff06ac"/><stop offset=".5787" stop-color="#ff0098"/><stop offset=".6585" stop-color="#ff006f"/><stop offset=".7273" stop-color="#ff0056"/><stop offset=".8049" stop-color="#ff0041"/><stop offset="1" stop-color="#ff001f"/></linearGradient><linearGradient id="c146" gradientUnits="userSpaceOnUse" x1="1082" x2="1524" y1="0" y2="0"><stop offset="0" stop-color="#006bff"/><stop offset=".233" stop-color="#004cff"/><stop offset=".2986" stop-color="#3a41ff"/><stop offset=".3597" stop-color="#7636ff"/><stop offset=".4163" stop-color="#b42aff"/><stop offset=".4774" stop-color="#ff1bfe"/><stop offset=".5158" stop-color="#ff0ed2"/><stop offset=".5588" stop-color="#ff03ad"/><stop offset=".6086" stop-color="#ff008d"/><stop offset=".6652" stop-color="#ff0072"/><stop offset=".7308" stop-color="#ff005a"/><stop offset=".8077" stop-color="#ff0045"/><stop offset="1" stop-color="#f02"/></linearGradient><linearGradient id="c147" gradientUnits="userSpaceOnUse" x1="1083" x2="1517" y1="0" y2="0"><stop offset="0" stop-color="#0067ff"/><stop offset=".2327" stop-color="#0048ff"/><stop offset=".2995" stop-color="#393dff"/><stop offset=".3641" stop-color="#7731ff"/><stop offset=".4217" stop-color="#b425ff"/><stop offset=".4839" stop-color="#ff17fe"/><stop offset=".5207" stop-color="#ff0bd5"/><stop offset=".5645" stop-color="#ff00b0"/><stop offset=".6152" stop-color="#ff008f"/><stop offset=".6728" stop-color="#ff0074"/><stop offset=".7373" stop-color="#ff005c"/><stop offset=".8134" stop-color="#ff0047"/><stop offset="1" stop-color="#ff0025"/></linearGradient><linearGradient id="c148" gradientUnits="userSpaceOnUse" x1="1084" x2="1509" y1="0" y2="0"><stop offset="0" stop-color="#0063ff"/><stop offset=".2329" stop-color="#0045ff"/><stop offset=".3035" stop-color="#3a39ff"/><stop offset=".3694" stop-color="#782dff"/><stop offset=".4306" stop-color="#b721ff"/><stop offset=".4918" stop-color="#ff12ff"/><stop offset=".5294" stop-color="#ff07d6"/><stop offset=".5718" stop-color="#ff00b2"/><stop offset=".6212" stop-color="#ff0093"/><stop offset=".6776" stop-color="#ff0078"/><stop offset=".7435" stop-color="#ff005f"/><stop offset=".8165" stop-color="#ff004b"/><stop offset="1" stop-color="#ff0029"/></linearGradient><linearGradient id="c149" gradientUnits="userSpaceOnUse" x1="1086" x2="1501" y1="0" y2="0"><stop offset="0" stop-color="#005fff"/><stop offset=".2313" stop-color="#0041ff"/><stop offset=".3036" stop-color="#3a36ff"/><stop offset=".3735" stop-color="#7829ff"/><stop offset=".4386" stop-color="#ba1cff"/><stop offset=".4988" stop-color="#ff0eff"/><stop offset=".5373" stop-color="#ff04d6"/><stop offset=".5807" stop-color="#ff00b3"/><stop offset=".6289" stop-color="#ff0095"/><stop offset=".6843" stop-color="#ff007b"/><stop offset=".7494" stop-color="#ff0063"/><stop offset=".8217" stop-color="#ff004e"/><stop offset="1" stop-color="#ff002c"/></linearGradient><linearGradient id="c150" gradientUnits="userSpaceOnUse" x1="1087" x2="1493" y1="0" y2="0"><stop offset="0" stop-color="#005bff"/><stop offset=".2315" stop-color="#003eff"/><stop offset=".3054" stop-color="#3932ff"/><stop offset=".3744" stop-color="#7526ff"/><stop offset=".436" stop-color="#b01aff"/><stop offset=".5099" stop-color="#ff09fd"/><stop offset=".5468" stop-color="#ff00d7"/><stop offset=".5911" stop-color="#ff00b4"/><stop offset=".6404" stop-color="#ff0096"/><stop offset=".6946" stop-color="#ff007d"/><stop offset=".7562" stop-color="#f06"/><stop offset=".8276" stop-color="#ff0052"/><stop offset="1" stop-color="#ff0030"/></linearGradient><linearGradient id="c151" gradientUnits="userSpaceOnUse" x1="1088" x2="1485" y1="0" y2="0"><stop offset="0" stop-color="#0058ff"/><stop offset=".2317" stop-color="#003bff"/><stop offset=".3073" stop-color="#382fff"/><stop offset=".3804" stop-color="#7622ff"/><stop offset=".4458" stop-color="#b315ff"/><stop offset=".5189" stop-color="#ff05fd"/><stop offset=".5567" stop-color="#ff00d8"/><stop offset=".5995" stop-color="#ff00b7"/><stop offset=".6474" stop-color="#ff009a"/><stop offset=".7003" stop-color="#ff0081"/><stop offset=".7607" stop-color="#ff006a"/><stop offset=".8312" stop-color="#ff0056"/><stop offset="1" stop-color="#ff0034"/></linearGradient><linearGradient id="c152" gradientUnits="userSpaceOnUse" x1="1089" x2="1477" y1="0" y2="0"><stop offset="0" stop-color="#0054ff"/><stop offset=".232" stop-color="#0037ff"/><stop offset=".3119" stop-color="#3a2bff"/><stop offset=".3866" stop-color="#771eff"/><stop offset=".4536" stop-color="#b311ff"/><stop offset=".5284" stop-color="#ff01fe"/><stop offset=".567" stop-color="#ff00d9"/><stop offset=".6082" stop-color="#ff00b9"/><stop offset=".6546" stop-color="#ff009e"/><stop offset=".7088" stop-color="#ff0084"/><stop offset=".7706" stop-color="#ff006d"/><stop offset=".8376" stop-color="#ff0059"/><stop offset="1" stop-color="#ff0038"/></linearGradient><linearGradient id="c153" gradientUnits="userSpaceOnUse" x1="1090" x2="1470" y1="0" y2="0"><stop offset="0" stop-color="#0051ff"/><stop offset=".2316" stop-color="#0034ff"/><stop offset=".3132" stop-color="#3928ff"/><stop offset=".3921" stop-color="#771bff"/><stop offset=".4632" stop-color="#b60dff"/><stop offset=".5368" stop-color="#ff00fe"/><stop offset=".5737" stop-color="#ff00dc"/><stop offset=".6158" stop-color="#ff00bc"/><stop offset=".6632" stop-color="#ff00a0"/><stop offset=".7158" stop-color="#ff0087"/><stop offset=".8421" stop-color="#ff005d"/><stop offset="1" stop-color="#ff003c"/></linearGradient><linearGradient id="c154" gradientUnits="userSpaceOnUse" x1="1092" x2="1462" y1="0" y2="0"><stop offset="0" stop-color="#004dff"/><stop offset=".2297" stop-color="#0031ff"/><stop offset=".3162" stop-color="#3b24ff"/><stop offset=".3973" stop-color="#7817ff"/><stop offset=".5135" stop-color="#df00ff"/><stop offset=".5459" stop-color="#f0f"/><stop offset=".5838" stop-color="#ff00dc"/><stop offset=".6243" stop-color="#ff00bf"/><stop offset=".6703" stop-color="#ff00a4"/><stop offset=".7243" stop-color="#ff008a"/><stop offset=".8459" stop-color="#ff0062"/><stop offset="1" stop-color="#ff0040"/></linearGradient><linearGradient id="c155" gradientUnits="userSpaceOnUse" x1="1093" x2="1454" y1="0" y2="0"><stop offset="0" stop-color="#0049ff"/><stop offset=".2299" stop-color="#002eff"/><stop offset=".3186" stop-color="#3a21ff"/><stop offset=".4017" stop-color="#7714ff"/><stop offset=".5069" stop-color="#cf00ff"/><stop offset=".5568" stop-color="#f0f"/><stop offset=".5956" stop-color="#f0d"/><stop offset=".6343" stop-color="#ff00c1"/><stop offset=".6814" stop-color="#ff00a6"/><stop offset=".7313" stop-color="#ff008f"/><stop offset=".8504" stop-color="#f06"/><stop offset="1" stop-color="#ff0045"/></linearGradient><linearGradient id="c156" gradientUnits="userSpaceOnUse" x1="1094" x2="1446" y1="0" y2="0"><stop offset="0" stop-color="#0046ff"/><stop offset=".2301" stop-color="#002bff"/><stop offset=".321" stop-color="#391eff"/><stop offset=".4091" stop-color="#7810ff"/><stop offset=".4972" stop-color="#be00ff"/><stop offset=".5682" stop-color="#fe00ff"/><stop offset=".608" stop-color="#ff00de"/><stop offset=".6477" stop-color="#ff00c2"/><stop offset=".7415" stop-color="#ff0092"/><stop offset=".858" stop-color="#ff006a"/><stop offset="1" stop-color="#ff004a"/></linearGradient><linearGradient id="c157" gradientUnits="userSpaceOnUse" x1="1095" x2="1438" y1="0" y2="0"><stop offset="0" stop-color="#0042ff"/><stop offset=".2303" stop-color="#0028ff"/><stop offset=".3236" stop-color="#391bff"/><stop offset=".414" stop-color="#760dff"/><stop offset=".4898" stop-color="#b000ff"/><stop offset=".5831" stop-color="#ff00fd"/><stop offset=".6181" stop-color="#ff00e0"/><stop offset=".6589" stop-color="#ff00c5"/><stop offset=".7522" stop-color="#ff0095"/><stop offset=".863" stop-color="#ff006f"/><stop offset="1" stop-color="#ff004f"/></linearGradient><linearGradient id="c158" gradientUnits="userSpaceOnUse" x1="1096" x2="1430" y1="0" y2="0"><stop offset="0" stop-color="#003fff"/><stop offset=".2305" stop-color="#0025ff"/><stop offset=".3293" stop-color="#3a18ff"/><stop offset=".4222" stop-color="#770aff"/><stop offset=".479" stop-color="#a100ff"/><stop offset=".5958" stop-color="#ff00fe"/><stop offset=".6317" stop-color="#ff00e1"/><stop offset=".6707" stop-color="#ff00c7"/><stop offset=".7605" stop-color="#ff009a"/><stop offset=".8683" stop-color="#ff0074"/><stop offset="1" stop-color="#f05"/></linearGradient><linearGradient id="c159" gradientUnits="userSpaceOnUse" x1="1098" x2="1422" y1="0" y2="0"><stop offset="0" stop-color="#003bff"/><stop offset=".2284" stop-color="#02f"/><stop offset=".3302" stop-color="#3a15ff"/><stop offset=".429" stop-color="#7806ff"/><stop offset=".4691" stop-color="#9400ff"/><stop offset=".608" stop-color="#ff00fe"/><stop offset=".6821" stop-color="#ff00ca"/><stop offset=".7685" stop-color="#ff009f"/><stop offset=".8735" stop-color="#ff007a"/><stop offset="1" stop-color="#ff005b"/></linearGradient><linearGradient id="c160" gradientUnits="userSpaceOnUse" x1="1099" x2="1415" y1="0" y2="0"><stop offset="0" stop-color="#0038ff"/><stop offset=".2278" stop-color="#0020ff"/><stop offset=".3354" stop-color="#3b12ff"/><stop offset=".4367" stop-color="#7903ff"/><stop offset=".5316" stop-color="#ba00ff"/><stop offset=".6203" stop-color="#f0f"/><stop offset=".693" stop-color="#f0c"/><stop offset=".7785" stop-color="#ff00a2"/><stop offset=".8797" stop-color="#ff007e"/><stop offset="1" stop-color="#ff0060"/></linearGradient><linearGradient id="c161" gradientUnits="userSpaceOnUse" x1="1100" x2="1407" y1="0" y2="0"><stop offset="0" stop-color="#0035ff"/><stop offset=".228" stop-color="#001dff"/><stop offset=".3388" stop-color="#3a0fff"/><stop offset=".443" stop-color="#7800ff"/><stop offset=".5407" stop-color="#b800ff"/><stop offset=".6352" stop-color="#f0f"/><stop offset=".7068" stop-color="#ff00cf"/><stop offset=".7883" stop-color="#ff00a7"/><stop offset=".886" stop-color="#ff0084"/><stop offset="1" stop-color="#ff0067"/></linearGradient><linearGradient id="c162" gradientUnits="userSpaceOnUse" x1="1101" x2="1399" y1="0" y2="0"><stop offset="0" stop-color="#0032ff"/><stop offset=".2282" stop-color="#001aff"/><stop offset=".3423" stop-color="#3a0cff"/><stop offset=".453" stop-color="#7800ff"/><stop offset=".5537" stop-color="#b900ff"/><stop offset=".651" stop-color="#fe00ff"/><stop offset=".7215" stop-color="#ff00d2"/><stop offset=".802" stop-color="#ff00ab"/><stop offset=".8926" stop-color="#ff008a"/><stop offset="1" stop-color="#ff006d"/></linearGradient><linearGradient id="c163" gradientUnits="userSpaceOnUse" x1="1103" x2="1391" y1="0" y2="0"><stop offset="0" stop-color="#002eff"/><stop offset=".2257" stop-color="#0018ff"/><stop offset=".4167" stop-color="#6000ff"/><stop offset=".4583" stop-color="#70f"/><stop offset=".566" stop-color="#b900ff"/><stop offset=".6667" stop-color="#fe00ff"/><stop offset=".7396" stop-color="#ff00d2"/><stop offset=".8125" stop-color="#ff00b0"/><stop offset=".8993" stop-color="#ff0090"/><stop offset="1" stop-color="#ff0075"/></linearGradient><linearGradient id="c164" gradientUnits="userSpaceOnUse" x1="1104" x2="1383" y1="0" y2="0"><stop offset="0" stop-color="#002bff"/><stop offset=".2258" stop-color="#0015ff"/><stop offset=".4014" stop-color="#5400ff"/><stop offset=".4695" stop-color="#7800ff"/><stop offset=".5806" stop-color="#b900ff"/><stop offset=".6846" stop-color="#fd00ff"/><stop offset=".7563" stop-color="#ff00d5"/><stop offset=".8244" stop-color="#ff00b5"/><stop offset=".9068" stop-color="#ff0097"/><stop offset="1" stop-color="#ff007c"/></linearGradient><linearGradient id="c165" gradientUnits="userSpaceOnUse" x1="1106" x2="1375" y1="0" y2="0"><stop offset="0" stop-color="#0028ff"/><stop offset=".223" stop-color="#0012ff"/><stop offset=".3866" stop-color="#4a00ff"/><stop offset=".4758" stop-color="#70f"/><stop offset=".5911" stop-color="#b700ff"/><stop offset=".7026" stop-color="#fd00ff"/><stop offset=".7732" stop-color="#ff00d7"/><stop offset=".8401" stop-color="#ff00b9"/><stop offset=".9145" stop-color="#ff009d"/><stop offset="1" stop-color="#ff0085"/></linearGradient><linearGradient id="c166" gradientUnits="userSpaceOnUse" x1="1107" x2="1368" y1="0" y2="0"><stop offset="0" stop-color="#0025ff"/><stop offset=".2222" stop-color="#0010ff"/><stop offset=".3678" stop-color="#3e00ff"/><stop offset=".4866" stop-color="#70f"/><stop offset=".6092" stop-color="#b900ff"/><stop offset=".7241" stop-color="#f0f"/><stop offset=".7816" stop-color="#ff00de"/><stop offset=".8467" stop-color="#ff00c0"/><stop offset=".9195" stop-color="#ff00a4"/><stop offset="1" stop-color="#ff008c"/></linearGradient><linearGradient id="c167" gradientUnits="userSpaceOnUse" x1="1109" x2="1360" y1="0" y2="0"><stop offset="0" stop-color="#0021ff"/><stop offset=".2191" stop-color="#000dff"/><stop offset=".3506" stop-color="#3500ff"/><stop offset=".498" stop-color="#7800ff"/><stop offset=".6255" stop-color="#ba00ff"/><stop offset=".745" stop-color="#f0f"/><stop offset=".8008" stop-color="#ff00e0"/><stop offset=".8606" stop-color="#ff00c5"/><stop offset="1" stop-color="#ff0096"/></linearGradient><linearGradient id="c168" gradientUnits="userSpaceOnUse" x1="1110" x2="1352" y1="0" y2="0"><stop offset="0" stop-color="#001eff"/><stop offset=".219" stop-color="#000bff"/><stop offset=".3306" stop-color="#2b00ff"/><stop offset=".5083" stop-color="#70f"/><stop offset=".6405" stop-color="#b800ff"/><stop offset=".7686" stop-color="#fe00ff"/><stop offset=".876" stop-color="#ff00cb"/><stop offset="1" stop-color="#ff00a0"/></linearGradient><linearGradient id="c169" gradientUnits="userSpaceOnUse" x1="1112" x2="1344" y1="0" y2="0"><stop offset="0" stop-color="#001bff"/><stop offset=".2155" stop-color="#0009ff"/><stop offset=".3103" stop-color="#20f"/><stop offset=".5216" stop-color="#7800ff"/><stop offset=".6595" stop-color="#b800ff"/><stop offset=".7931" stop-color="#fe00ff"/><stop offset=".8922" stop-color="#ff00d1"/><stop offset="1" stop-color="#ff00ab"/></linearGradient><linearGradient id="c170" gradientUnits="userSpaceOnUse" x1="1113" x2="1336" y1="0" y2="0"><stop offset="0" stop-color="#0018ff"/><stop offset=".2152" stop-color="#0006ff"/><stop offset=".287" stop-color="#1900ff"/><stop offset=".5336" stop-color="#70f"/><stop offset=".6816" stop-color="#b800ff"/><stop offset=".8206" stop-color="#fd00ff"/><stop offset=".9103" stop-color="#ff00d7"/><stop offset="1" stop-color="#ff00b6"/></linearGradient><linearGradient id="c171" gradientUnits="userSpaceOnUse" x1="1115" x2="1328" y1="0" y2="0"><stop offset="0" stop-color="#0015ff"/><stop offset=".2113" stop-color="#0004ff"/><stop offset=".2629" stop-color="#10f"/><stop offset=".385" stop-color="#3a00ff"/><stop offset=".5493" stop-color="#70f"/><stop offset=".7042" stop-color="#b800ff"/><stop offset=".8498" stop-color="#fd00ff"/><stop offset="1" stop-color="#ff00c3"/></linearGradient><linearGradient id="c172" gradientUnits="userSpaceOnUse" x1="1116" x2="1321" y1="0" y2="0"><stop offset="0" stop-color="#0012ff"/><stop offset=".2098" stop-color="#0002ff"/><stop offset=".3951" stop-color="#3b00ff"/><stop offset=".5659" stop-color="#7800ff"/><stop offset=".7268" stop-color="#b900ff"/><stop offset=".8829" stop-color="#f0f"/><stop offset="1" stop-color="#ff00cf"/></linearGradient><linearGradient id="c173" gradientUnits="userSpaceOnUse" x1="1118" x2="1313" y1="0" y2="0"><stop offset="0" stop-color="#000eff"/><stop offset=".2051" stop-color="#00f"/><stop offset=".4" stop-color="#3b00ff"/><stop offset=".5846" stop-color="#7900ff"/><stop offset=".7538" stop-color="#b900ff"/><stop offset=".9179" stop-color="#f0f"/><stop offset="1" stop-color="#ff00de"/></linearGradient><linearGradient id="c174" gradientUnits="userSpaceOnUse" x1="1120" x2="1305" y1="0" y2="0"><stop offset="0" stop-color="#000bff"/><stop offset=".2" stop-color="#0100ff"/><stop offset=".4054" stop-color="#3a00ff"/><stop offset=".6" stop-color="#7800ff"/><stop offset=".7838" stop-color="#b900ff"/><stop offset=".9568" stop-color="#fe00ff"/><stop offset="1" stop-color="#f0e"/></linearGradient><linearGradient id="c175" gradientUnits="userSpaceOnUse" x1="1122" x2="1297" y1="0" y2="0"><stop offset="0" stop-color="#0008ff"/><stop offset=".1257" stop-color="#00f"/><stop offset=".1886" stop-color="#00f"/><stop offset=".2343" stop-color="#0b00ff"/><stop offset=".4457" stop-color="#4300ff"/><stop offset=".64" stop-color="#7e00ff"/><stop offset=".8229" stop-color="#b0f"/><stop offset="1" stop-color="#fe00ff"/></linearGradient><linearGradient id="c176" gradientUnits="userSpaceOnUse" x1="1124" x2="1289" y1="0" y2="0"><stop offset="0" stop-color="#0005ff"/><stop offset=".0788" stop-color="#00f"/><stop offset=".1818" stop-color="#00f"/><stop offset=".2182" stop-color="#0800ff"/><stop offset=".4303" stop-color="#3c00ff"/><stop offset=".6303" stop-color="#7400ff"/><stop offset=".8182" stop-color="#ae00ff"/><stop offset="1" stop-color="#ec00ff"/></linearGradient><linearGradient id="c177" gradientUnits="userSpaceOnUse" x1="1125" x2="1281" y1="0" y2="0"><stop offset="0" stop-color="#0002ff"/><stop offset=".1923" stop-color="#0200ff"/><stop offset=".4103" stop-color="#3400ff"/><stop offset=".6154" stop-color="#6800ff"/><stop offset=".8141" stop-color="#a000ff"/><stop offset="1" stop-color="#da00ff"/></linearGradient><linearGradient id="c178" gradientUnits="userSpaceOnUse" x1="1128" x2="1273" y1="0" y2="0"><stop offset="0" stop-color="#00f"/><stop offset=".1655" stop-color="#00f"/><stop offset=".1862" stop-color="#0300ff"/><stop offset=".6138" stop-color="#6200ff"/><stop offset="1" stop-color="#ca00ff"/></linearGradient><linearGradient id="c179" gradientUnits="userSpaceOnUse" x1="1130" x2="1266" y1="0" y2="0"><stop offset="0" stop-color="#00f"/><stop offset=".1544" stop-color="#00f"/><stop offset=".1765" stop-color="#0300ff"/><stop offset=".6029" stop-color="#5b00ff"/><stop offset="1" stop-color="#bc00ff"/></linearGradient><linearGradient id="c180" gradientUnits="userSpaceOnUse" x1="1132" x2="1258" y1="0" y2="0"><stop offset="0" stop-color="#00f"/><stop offset=".1429" stop-color="#00f"/><stop offset=".1667" stop-color="#0300ff"/><stop offset=".6032" stop-color="#50f"/><stop offset="1" stop-color="#ad00ff"/></linearGradient><linearGradient id="c181" gradientUnits="userSpaceOnUse" x1="1135" x2="1250" y1="0" y2="0"><stop offset="0" stop-color="#00f"/><stop offset=".1217" stop-color="#00f"/><stop offset=".1826" stop-color="#0900ff"/><stop offset=".6087" stop-color="#5100ff"/><stop offset="1" stop-color="#9e00ff"/></linearGradient><linearGradient id="c182" gradientUnits="userSpaceOnUse" x1="1137" x2="1242" y1="0" y2="0"><stop offset="0" stop-color="#00f"/><stop offset=".1048" stop-color="#00f"/><stop offset=".1905" stop-color="#0b00ff"/><stop offset=".6095" stop-color="#4c00ff"/><stop offset="1" stop-color="#9000ff"/></linearGradient><linearGradient id="c183" gradientUnits="userSpaceOnUse" x1="1140" x2="1234" y1="0" y2="0"><stop offset="0" stop-color="#00f"/><stop offset=".0851" stop-color="#0100ff"/><stop offset=".2447" stop-color="#1500ff"/><stop offset=".6277" stop-color="#4a00ff"/><stop offset="1" stop-color="#8300ff"/></linearGradient><linearGradient id="c184" gradientUnits="userSpaceOnUse" x1="1144" x2="1226" y1="0" y2="0"><stop offset="0" stop-color="#00f"/><stop offset=".0366" stop-color="#0100ff"/><stop offset=".4024" stop-color="#2a00ff"/><stop offset="1" stop-color="#7600ff"/></linearGradient><linearGradient id="c185" gradientUnits="userSpaceOnUse" x1="1147" x2="1219" y1="0" y2="0"><stop offset="0" stop-color="#0200ff"/><stop offset=".5139" stop-color="#3500ff"/><stop offset="1" stop-color="#6b00ff"/></linearGradient><linearGradient id="c186" gradientUnits="userSpaceOnUse" x1="1151" x2="1211" y1="0" y2="0"><stop offset="0" stop-color="#0800ff"/><stop offset="1" stop-color="#5f00ff"/></linearGradient><linearGradient id="c187" gradientUnits="userSpaceOnUse" x1="1156" x2="1203" y1="0" y2="0"><stop offset="0" stop-color="#0e00ff"/><stop offset="1" stop-color="#5100ff"/></linearGradient><linearGradient id="c188" gradientUnits="userSpaceOnUse" x1="1160" x2="1195" y1="0" y2="0"><stop offset="0" stop-color="#1300ff"/><stop offset="1" stop-color="#40f"/></linearGradient><clipPath id="insc"><rect x="1516" y="47.5" width="191" height="201.0"/></clipPath><filter id="vb2" filterUnits="userSpaceOnUse" x="1500" y="30" width="230" height="240"><feGaussianBlur stdDeviation="2 2"/></filter><linearGradient id="i0" gradientUnits="userSpaceOnUse" x1="1508" x2="1715" y1="0" y2="0"><stop offset="0" stop-color="#8fff00"/><stop offset=".4058" stop-color="#c5ff00"/><stop offset=".7923" stop-color="#feff00"/><stop offset="1" stop-color="#ffe200"/></linearGradient><linearGradient id="i1" gradientUnits="userSpaceOnUse" x1="1508" x2="1715" y1="0" y2="0"><stop offset="0" stop-color="#90ff00"/><stop offset=".401" stop-color="#c6ff00"/><stop offset=".7826" stop-color="#ff0"/><stop offset="1" stop-color="#ffe000"/></linearGradient><linearGradient id="i2" gradientUnits="userSpaceOnUse" x1="1508" x2="1715" y1="0" y2="0"><stop offset="0" stop-color="#91ff00"/><stop offset=".3961" stop-color="#c7ff00"/><stop offset=".7729" stop-color="#ff0"/><stop offset="1" stop-color="#ffdf00"/></linearGradient><linearGradient id="i3" gradientUnits="userSpaceOnUse" x1="1508" x2="1715" y1="0" y2="0"><stop offset="0" stop-color="#92ff00"/><stop offset=".3865" stop-color="#c7ff00"/><stop offset=".7633" stop-color="#ff0"/><stop offset="1" stop-color="#ffde00"/></linearGradient><linearGradient id="i4" gradientUnits="userSpaceOnUse" x1="1508" x2="1715" y1="0" y2="0"><stop offset="0" stop-color="#93ff00"/><stop offset=".3816" stop-color="#c7ff00"/><stop offset=".7488" stop-color="#ff0"/><stop offset="1" stop-color="#ffdc00"/></linearGradient><linearGradient id="i5" gradientUnits="userSpaceOnUse" x1="1508" x2="1715" y1="0" y2="0"><stop offset="0" stop-color="#94ff00"/><stop offset=".7391" stop-color="#ff0"/><stop offset="1" stop-color="#ffdb00"/></linearGradient><linearGradient id="i6" gradientUnits="userSpaceOnUse" x1="1508" x2="1715" y1="0" y2="0"><stop offset="0" stop-color="#96ff01"/><stop offset=".7295" stop-color="#ff0"/><stop offset="1" stop-color="#ffd900"/></linearGradient><linearGradient id="i7" gradientUnits="userSpaceOnUse" x1="1508" x2="1715" y1="0" y2="0"><stop offset="0" stop-color="#97ff01"/><stop offset=".715" stop-color="#ff0"/><stop offset="1" stop-color="#ffd800"/></linearGradient><linearGradient id="i8" gradientUnits="userSpaceOnUse" x1="1508" x2="1715" y1="0" y2="0"><stop offset="0" stop-color="#98ff02"/><stop offset=".7053" stop-color="#ff0"/><stop offset="1" stop-color="#ffd600"/></linearGradient><linearGradient id="i9" gradientUnits="userSpaceOnUse" x1="1508" x2="1715" y1="0" y2="0"><stop offset="0" stop-color="#99ff03"/><stop offset=".6957" stop-color="#ff0"/><stop offset="1" stop-color="#ffd500"/></linearGradient><linearGradient id="i10" gradientUnits="userSpaceOnUse" x1="1508" x2="1715" y1="0" y2="0"><stop offset="0" stop-color="#9aff04"/><stop offset=".1208" stop-color="#abff00"/><stop offset=".686" stop-color="#ff0"/><stop offset="1" stop-color="#ffd300"/></linearGradient><linearGradient id="i11" gradientUnits="userSpaceOnUse" x1="1508" x2="1715" y1="0" y2="0"><stop offset="0" stop-color="#9cff04"/><stop offset=".1401" stop-color="#afff00"/><stop offset=".6715" stop-color="#ff0"/><stop offset="1" stop-color="#ffd200"/></linearGradient><linearGradient id="i12" gradientUnits="userSpaceOnUse" x1="1508" x2="1715" y1="0" y2="0"><stop offset="0" stop-color="#9dff05"/><stop offset=".1643" stop-color="#b4ff00"/><stop offset=".6618" stop-color="#ff0"/><stop offset="1" stop-color="#ffd000"/></linearGradient><linearGradient id="i13" gradientUnits="userSpaceOnUse" x1="1508" x2="1715" y1="0" y2="0"><stop offset="0" stop-color="#9eff06"/><stop offset=".1884" stop-color="#b9ff00"/><stop offset=".6522" stop-color="#ff0"/><stop offset="1" stop-color="#ffcf00"/></linearGradient><linearGradient id="i14" gradientUnits="userSpaceOnUse" x1="1508" x2="1715" y1="0" y2="0"><stop offset="0" stop-color="#9fff07"/><stop offset=".2077" stop-color="#bdff00"/><stop offset=".6377" stop-color="#ff0"/><stop offset="1" stop-color="#ffce00"/></linearGradient><linearGradient id="i15" gradientUnits="userSpaceOnUse" x1="1508" x2="1715" y1="0" y2="0"><stop offset="0" stop-color="#a1ff07"/><stop offset=".2319" stop-color="#c2ff00"/><stop offset=".628" stop-color="#ff0"/><stop offset="1" stop-color="#fc0"/></linearGradient><linearGradient id="i16" gradientUnits="userSpaceOnUse" x1="1508" x2="1715" y1="0" y2="0"><stop offset="0" stop-color="#a2ff08"/><stop offset=".256" stop-color="#c7ff00"/><stop offset=".6184" stop-color="#ff0"/><stop offset="1" stop-color="#ffcb00"/></linearGradient><linearGradient id="i17" gradientUnits="userSpaceOnUse" x1="1508" x2="1715" y1="0" y2="0"><stop offset="0" stop-color="#a3ff09"/><stop offset=".2802" stop-color="#cf0"/><stop offset=".6087" stop-color="#ff0"/><stop offset="1" stop-color="#ffc900"/></linearGradient><linearGradient id="i18" gradientUnits="userSpaceOnUse" x1="1508" x2="1715" y1="0" y2="0"><stop offset="0" stop-color="#a5ff0a"/><stop offset=".2995" stop-color="#d0ff00"/><stop offset=".5942" stop-color="#ff0"/><stop offset="1" stop-color="#ffc800"/></linearGradient><linearGradient id="i19" gradientUnits="userSpaceOnUse" x1="1508" x2="1715" y1="0" y2="0"><stop offset="0" stop-color="#a6ff0a"/><stop offset=".3237" stop-color="#d5ff00"/><stop offset=".5845" stop-color="#ff0"/><stop offset=".7826" stop-color="#ffe100"/><stop offset="1" stop-color="#ffc700"/></linearGradient><linearGradient id="i20" gradientUnits="userSpaceOnUse" x1="1508" x2="1715" y1="0" y2="0"><stop offset="0" stop-color="#a7ff0b"/><stop offset=".3478" stop-color="#dbff00"/><stop offset=".5749" stop-color="#ff0"/><stop offset=".7778" stop-color="#ffe000"/><stop offset="1" stop-color="#ffc500"/></linearGradient><linearGradient id="i21" gradientUnits="userSpaceOnUse" x1="1508" x2="1715" y1="0" y2="0"><stop offset="0" stop-color="#a8ff0c"/><stop offset=".372" stop-color="#e0ff00"/><stop offset=".5604" stop-color="#ff0"/><stop offset=".7778" stop-color="#ffdf00"/><stop offset="1" stop-color="#ffc400"/></linearGradient><linearGradient id="i22" gradientUnits="userSpaceOnUse" x1="1508" x2="1715" y1="0" y2="0"><stop offset="0" stop-color="#aaff0d"/><stop offset=".3913" stop-color="#e5ff00"/><stop offset=".5507" stop-color="#ff0"/><stop offset=".7681" stop-color="#ffdf00"/><stop offset="1" stop-color="#ffc200"/></linearGradient><linearGradient id="i23" gradientUnits="userSpaceOnUse" x1="1508" x2="1715" y1="0" y2="0"><stop offset="0" stop-color="#abff0e"/><stop offset=".4155" stop-color="#ebff00"/><stop offset=".5411" stop-color="#ff0"/><stop offset=".7585" stop-color="#ffde00"/><stop offset="1" stop-color="#ffc100"/></linearGradient><linearGradient id="i24" gradientUnits="userSpaceOnUse" x1="1508" x2="1715" y1="0" y2="0"><stop offset="0" stop-color="#adff0e"/><stop offset=".5314" stop-color="#ff0"/><stop offset=".7536" stop-color="#fd0"/><stop offset="1" stop-color="#ffc000"/></linearGradient><linearGradient id="i25" gradientUnits="userSpaceOnUse" x1="1508" x2="1715" y1="0" y2="0"><stop offset="0" stop-color="#aeff0f"/><stop offset=".5169" stop-color="#ff0"/><stop offset=".7488" stop-color="#ffdc00"/><stop offset="1" stop-color="#ffbe00"/></linearGradient><linearGradient id="i26" gradientUnits="userSpaceOnUse" x1="1508" x2="1715" y1="0" y2="0"><stop offset="0" stop-color="#afff10"/><stop offset=".5072" stop-color="#ff0"/><stop offset=".7391" stop-color="#ffdc00"/><stop offset="1" stop-color="#ffbd00"/></linearGradient><linearGradient id="i27" gradientUnits="userSpaceOnUse" x1="1508" x2="1715" y1="0" y2="0"><stop offset="0" stop-color="#b1ff11"/><stop offset=".4976" stop-color="#ff0"/><stop offset=".7343" stop-color="#ffdb00"/><stop offset="1" stop-color="#ffbc00"/></linearGradient><linearGradient id="i28" gradientUnits="userSpaceOnUse" x1="1508" x2="1715" y1="0" y2="0"><stop offset="0" stop-color="#b2ff12"/><stop offset=".4831" stop-color="#ffff02"/><stop offset=".7295" stop-color="#ffda00"/><stop offset="1" stop-color="#ffba00"/></linearGradient><linearGradient id="i29" gradientUnits="userSpaceOnUse" x1="1508" x2="1715" y1="0" y2="0"><stop offset="0" stop-color="#b4ff13"/><stop offset=".4734" stop-color="#ffff03"/><stop offset=".7198" stop-color="#ffda00"/><stop offset="1" stop-color="#ffb900"/></linearGradient><linearGradient id="i30" gradientUnits="userSpaceOnUse" x1="1508" x2="1715" y1="0" y2="0"><stop offset="0" stop-color="#b5ff14"/><stop offset=".4638" stop-color="#ffff04"/><stop offset=".715" stop-color="#ffd900"/><stop offset="1" stop-color="#ffb800"/></linearGradient><linearGradient id="i31" gradientUnits="userSpaceOnUse" x1="1508" x2="1715" y1="0" y2="0"><stop offset="0" stop-color="#b6ff14"/><stop offset=".4541" stop-color="#ffff05"/><stop offset=".7101" stop-color="#ffd800"/><stop offset="1" stop-color="#ffb600"/></linearGradient><linearGradient id="i32" gradientUnits="userSpaceOnUse" x1="1508" x2="1715" y1="0" y2="0"><stop offset="0" stop-color="#b8ff15"/><stop offset=".4396" stop-color="#ffff07"/><stop offset=".7053" stop-color="#ffd700"/><stop offset="1" stop-color="#ffb500"/></linearGradient><linearGradient id="i33" gradientUnits="userSpaceOnUse" x1="1508" x2="1715" y1="0" y2="0"><stop offset="0" stop-color="#b9ff16"/><stop offset=".43" stop-color="#ffff08"/><stop offset=".6957" stop-color="#ffd700"/><stop offset="1" stop-color="#ffb400"/></linearGradient><linearGradient id="i34" gradientUnits="userSpaceOnUse" x1="1508" x2="1715" y1="0" y2="0"><stop offset="0" stop-color="#bbff17"/><stop offset=".4203" stop-color="#ffff09"/><stop offset=".6715" stop-color="#ffd800"/><stop offset="1" stop-color="#ffb200"/></linearGradient><linearGradient id="i35" gradientUnits="userSpaceOnUse" x1="1508" x2="1715" y1="0" y2="0"><stop offset="0" stop-color="#bcff18"/><stop offset=".4058" stop-color="#ffff0b"/><stop offset=".6957" stop-color="#ffd400"/><stop offset="1" stop-color="#ffb100"/></linearGradient><linearGradient id="i36" gradientUnits="userSpaceOnUse" x1="1508" x2="1715" y1="0" y2="0"><stop offset="0" stop-color="#beff19"/><stop offset=".3961" stop-color="#ffff0c"/><stop offset=".6763" stop-color="#ffd501"/><stop offset="1" stop-color="#ffb000"/></linearGradient><linearGradient id="i37" gradientUnits="userSpaceOnUse" x1="1508" x2="1715" y1="0" y2="0"><stop offset="0" stop-color="#bfff1a"/><stop offset=".3865" stop-color="#ffff0d"/><stop offset=".6715" stop-color="#ffd402"/><stop offset="1" stop-color="#ffae00"/></linearGradient><linearGradient id="i38" gradientUnits="userSpaceOnUse" x1="1508" x2="1715" y1="0" y2="0"><stop offset="0" stop-color="#c1ff1b"/><stop offset=".3768" stop-color="#ffff0e"/><stop offset=".6667" stop-color="#ffd303"/><stop offset="1" stop-color="#ffad00"/></linearGradient><linearGradient id="i39" gradientUnits="userSpaceOnUse" x1="1508" x2="1715" y1="0" y2="0"><stop offset="0" stop-color="#c3ff1c"/><stop offset=".3623" stop-color="#ffff10"/><stop offset=".657" stop-color="#ffd204"/><stop offset=".7874" stop-color="#ffc200"/><stop offset="1" stop-color="#ffac00"/></linearGradient><linearGradient id="i40" gradientUnits="userSpaceOnUse" x1="1508" x2="1715" y1="0" y2="0"><stop offset="0" stop-color="#c4ff1d"/><stop offset=".3527" stop-color="#ff1"/><stop offset=".6522" stop-color="#ffd205"/><stop offset=".8116" stop-color="#ffbe00"/><stop offset="1" stop-color="#ffab00"/></linearGradient><linearGradient id="i41" gradientUnits="userSpaceOnUse" x1="1508" x2="1715" y1="0" y2="0"><stop offset="0" stop-color="#c6ff1e"/><stop offset=".343" stop-color="#ffff12"/><stop offset=".6473" stop-color="#ffd106"/><stop offset=".8309" stop-color="#fb0"/><stop offset="1" stop-color="#ffa900"/></linearGradient><linearGradient id="i42" gradientUnits="userSpaceOnUse" x1="1508" x2="1715" y1="0" y2="0"><stop offset="0" stop-color="#c7ff1e"/><stop offset=".3285" stop-color="#ffff14"/><stop offset=".6425" stop-color="#ffd007"/><stop offset=".8551" stop-color="#ffb700"/><stop offset="1" stop-color="#ffa800"/></linearGradient><linearGradient id="i43" gradientUnits="userSpaceOnUse" x1="1508" x2="1715" y1="0" y2="0"><stop offset="0" stop-color="#c9ff1f"/><stop offset=".3188" stop-color="#ffff15"/><stop offset=".6329" stop-color="#ffcf08"/><stop offset=".8792" stop-color="#ffb300"/><stop offset="1" stop-color="#ffa700"/></linearGradient><linearGradient id="i44" gradientUnits="userSpaceOnUse" x1="1508" x2="1715" y1="0" y2="0"><stop offset="0" stop-color="#cbff20"/><stop offset=".3092" stop-color="#ffff16"/><stop offset=".628" stop-color="#ffce09"/><stop offset="1" stop-color="#ffa600"/></linearGradient><linearGradient id="i45" gradientUnits="userSpaceOnUse" x1="1508" x2="1715" y1="0" y2="0"><stop offset="0" stop-color="#ccff21"/><stop offset=".2995" stop-color="#fffe18"/><stop offset=".6232" stop-color="#ffcd0a"/><stop offset="1" stop-color="#ffa400"/></linearGradient><linearGradient id="i46" gradientUnits="userSpaceOnUse" x1="1508" x2="1715" y1="0" y2="0"><stop offset="0" stop-color="#ceff22"/><stop offset=".285" stop-color="#ffff19"/><stop offset=".6135" stop-color="#ffcd0b"/><stop offset="1" stop-color="#ffa300"/></linearGradient><linearGradient id="i47" gradientUnits="userSpaceOnUse" x1="1508" x2="1715" y1="0" y2="0"><stop offset="0" stop-color="#d0ff23"/><stop offset=".2754" stop-color="#ffff1a"/><stop offset=".6087" stop-color="#ffcc0c"/><stop offset="1" stop-color="#ffa200"/></linearGradient><linearGradient id="i48" gradientUnits="userSpaceOnUse" x1="1508" x2="1715" y1="0" y2="0"><stop offset="0" stop-color="#d1ff24"/><stop offset=".2657" stop-color="#ffff1c"/><stop offset=".599" stop-color="#ffcc0d"/><stop offset="1" stop-color="#ffa100"/></linearGradient><linearGradient id="i49" gradientUnits="userSpaceOnUse" x1="1508" x2="1715" y1="0" y2="0"><stop offset="0" stop-color="#d3ff25"/><stop offset=".2512" stop-color="#ffff1d"/><stop offset=".5942" stop-color="#ffcb0e"/><stop offset="1" stop-color="#ff9f00"/></linearGradient><linearGradient id="i50" gradientUnits="userSpaceOnUse" x1="1508" x2="1715" y1="0" y2="0"><stop offset="0" stop-color="#d5ff27"/><stop offset=".2415" stop-color="#ffff1f"/><stop offset=".5894" stop-color="#ffca0e"/><stop offset="1" stop-color="#ff9e01"/></linearGradient><linearGradient id="i51" gradientUnits="userSpaceOnUse" x1="1508" x2="1715" y1="0" y2="0"><stop offset="0" stop-color="#d6ff28"/><stop offset=".2319" stop-color="#ffff20"/><stop offset=".5797" stop-color="#ffca10"/><stop offset="1" stop-color="#ff9d02"/></linearGradient><linearGradient id="i52" gradientUnits="userSpaceOnUse" x1="1508" x2="1715" y1="0" y2="0"><stop offset="0" stop-color="#d8ff29"/><stop offset=".2222" stop-color="#fffe21"/><stop offset=".5749" stop-color="#ffc910"/><stop offset="1" stop-color="#ff9c02"/></linearGradient><linearGradient id="i53" gradientUnits="userSpaceOnUse" x1="1508" x2="1715" y1="0" y2="0"><stop offset="0" stop-color="#daff2a"/><stop offset=".2077" stop-color="#ffff23"/><stop offset=".3768" stop-color="#ffe31a"/><stop offset=".5652" stop-color="#ffc812"/><stop offset="1" stop-color="#ff9b03"/></linearGradient><linearGradient id="i54" gradientUnits="userSpaceOnUse" x1="1508" x2="1715" y1="0" y2="0"><stop offset="0" stop-color="#dbff2a"/><stop offset=".2029" stop-color="#ffff24"/><stop offset=".3768" stop-color="#ffe21a"/><stop offset=".5652" stop-color="#ffc712"/><stop offset="1" stop-color="#ff9a03"/></linearGradient></defs>
<rect x="0" y="0" width="1717" height="889" fill="#323232" />
<text x="22.6" y="62.2" font-size="42" fill="#ececec" textLength="186.5" lengthAdjust="spacingAndGlyphs" >Saturation</text>
<text x="221" y="62.2" font-size="42" fill="#ececec" textLength="138" lengthAdjust="spacingAndGlyphs" >Sweeps</text>
<rect x="46.5" y="138.5" width="262" height="485.1" fill="#232323" />
<line x1="46.5" y1="200.3" x2="308.5" y2="200.3" stroke="#858585" stroke-width="2" />
<line x1="46.5" y1="261" x2="308.5" y2="261" stroke="#858585" stroke-width="2" />
<line x1="46.5" y1="321.7" x2="308.5" y2="321.7" stroke="#858585" stroke-width="2" />
<line x1="46.5" y1="382.4" x2="308.5" y2="382.4" stroke="#858585" stroke-width="2" />
<line x1="46.5" y1="443.1" x2="308.5" y2="443.1" stroke="#858585" stroke-width="2" />
<line x1="46.5" y1="503.8" x2="308.5" y2="503.8" stroke="#858585" stroke-width="2" />
<line x1="46.5" y1="564.5" x2="308.5" y2="564.5" stroke="#858585" stroke-width="2" />
<rect x="46.5" y="138.5" width="262" height="485.1" fill="none" stroke="#a0a0a0" stroke-width="2"/>
<line x1="40.5" y1="139.6" x2="46.5" y2="139.6" stroke="#c8c8c8" stroke-width="1.5" />
<text x="40.5" y="145.1" font-size="16" fill="#dcdcdc" text-anchor="end" textLength="16.91" lengthAdjust="spacingAndGlyphs" >80</text>
<line x1="40.5" y1="200.3" x2="46.5" y2="200.3" stroke="#c8c8c8" stroke-width="1.5" />
<text x="40.5" y="205.8" font-size="16" fill="#dcdcdc" text-anchor="end" textLength="16.91" lengthAdjust="spacingAndGlyphs" >60</text>
<line x1="40.5" y1="261" x2="46.5" y2="261" stroke="#c8c8c8" stroke-width="1.5" />
<text x="40.5" y="266.5" font-size="16" fill="#dcdcdc" text-anchor="end" textLength="16.91" lengthAdjust="spacingAndGlyphs" >40</text>
<line x1="40.5" y1="321.7" x2="46.5" y2="321.7" stroke="#c8c8c8" stroke-width="1.5" />
<text x="40.5" y="327.2" font-size="16" fill="#dcdcdc" text-anchor="end" textLength="16.91" lengthAdjust="spacingAndGlyphs" >20</text>
<line x1="40.5" y1="382.4" x2="46.5" y2="382.4" stroke="#c8c8c8" stroke-width="1.5" />
<text x="40.5" y="387.9" font-size="16" fill="#dcdcdc" text-anchor="end" textLength="8.45" lengthAdjust="spacingAndGlyphs" >0</text>
<line x1="40.5" y1="443.1" x2="46.5" y2="443.1" stroke="#c8c8c8" stroke-width="1.5" />
<text x="40.5" y="448.6" font-size="16" fill="#dcdcdc" text-anchor="end" textLength="21.97" lengthAdjust="spacingAndGlyphs" >-20</text>
<line x1="40.5" y1="503.8" x2="46.5" y2="503.8" stroke="#c8c8c8" stroke-width="1.5" />
<text x="40.5" y="509.3" font-size="16" fill="#dcdcdc" text-anchor="end" textLength="21.97" lengthAdjust="spacingAndGlyphs" >-40</text>
<line x1="40.5" y1="564.5" x2="46.5" y2="564.5" stroke="#c8c8c8" stroke-width="1.5" />
<text x="40.5" y="570" font-size="16" fill="#dcdcdc" text-anchor="end" textLength="21.97" lengthAdjust="spacingAndGlyphs" >-60</text>
<line x1="40.5" y1="625.2" x2="46.5" y2="625.2" stroke="#c8c8c8" stroke-width="1.5" />
<text x="40.5" y="630.7" font-size="16" fill="#dcdcdc" text-anchor="end" textLength="21.97" lengthAdjust="spacingAndGlyphs" >-80</text>
<line x1="46.5" y1="623.6" x2="46.5" y2="630.1" stroke="#c8c8c8" stroke-width="1.5" />
<line x1="308.5" y1="623.6" x2="308.5" y2="630.1" stroke="#c8c8c8" stroke-width="1.5" />
<text x="178" y="641" font-size="16" fill="#dcdcdc" text-anchor="middle" textLength="38.88" lengthAdjust="spacingAndGlyphs" >100%</text>
<text x="164.2" y="132.8" font-size="15.6" fill="#dcdcdc" text-anchor="middle" textLength="86" lengthAdjust="spacingAndGlyphs" >RGB Balance</text>
<rect x="73" y="380.2" width="70.5" height="29.6" fill="#000" />
<rect x="75" y="382.2" width="66.5" height="25.6" fill="url(#g1)" />
<rect x="143.3" y="380.2" width="69.9" height="51.6" fill="#000" />
<rect x="145.3" y="382.2" width="65.9" height="47.6" fill="url(#g2)" />
<rect x="213" y="162" width="70.4" height="221.4" fill="#000" />
<rect x="215" y="164" width="66.4" height="217.4" fill="url(#g3)" />
<rect x="411.6" y="49.5" width="141.9" height="294" fill="#232323" />
<line x1="411.6" y1="99.2" x2="553.5" y2="99.2" stroke="#858585" stroke-width="2" />
<line x1="411.6" y1="148.2" x2="553.5" y2="148.2" stroke="#858585" stroke-width="2" />
<line x1="411.6" y1="197.2" x2="553.5" y2="197.2" stroke="#858585" stroke-width="2" />
<line x1="411.6" y1="246.2" x2="553.5" y2="246.2" stroke="#858585" stroke-width="2" />
<line x1="411.6" y1="295.2" x2="553.5" y2="295.2" stroke="#858585" stroke-width="2" />
<rect x="425" y="195.2" width="113.5" height="45.4" fill="#000" />
<rect x="426.5" y="196.7" width="110.5" height="42.4" fill="url(#g4)" />
<rect x="411.6" y="49.5" width="141.9" height="294" fill="none" stroke="#a0a0a0" stroke-width="2"/>
<line x1="410.6" y1="97.2" x2="554.5" y2="97.2" stroke="#e01010" stroke-width="2" />
<line x1="410.6" y1="294.1" x2="554.5" y2="294.1" stroke="#e01010" stroke-width="2" />
<line x1="410.6" y1="166.12" x2="554.5" y2="166.12" stroke="#ffff30" stroke-width="1.5" />
<line x1="410.6" y1="225.19" x2="554.5" y2="225.19" stroke="#ffff30" stroke-width="1.5" />
<line x1="410.6" y1="185.81" x2="554.5" y2="185.81" stroke="#0a8a0a" stroke-width="1.4" />
<line x1="410.6" y1="205.5" x2="554.5" y2="205.5" stroke="#0a8a0a" stroke-width="1.4" />
<line x1="405.6" y1="50.2" x2="411.6" y2="50.2" stroke="#c8c8c8" stroke-width="1.5" />
<text x="405.6" y="55.7" font-size="16" fill="#dcdcdc" text-anchor="end" textLength="16.91" lengthAdjust="spacingAndGlyphs" >15</text>
<line x1="405.6" y1="99.2" x2="411.6" y2="99.2" stroke="#c8c8c8" stroke-width="1.5" />
<text x="405.6" y="104.7" font-size="16" fill="#dcdcdc" text-anchor="end" textLength="16.91" lengthAdjust="spacingAndGlyphs" >10</text>
<line x1="405.6" y1="148.2" x2="411.6" y2="148.2" stroke="#c8c8c8" stroke-width="1.5" />
<text x="405.6" y="153.7" font-size="16" fill="#dcdcdc" text-anchor="end" textLength="8.45" lengthAdjust="spacingAndGlyphs" >5</text>
<line x1="405.6" y1="197.2" x2="411.6" y2="197.2" stroke="#c8c8c8" stroke-width="1.5" />
<text x="405.6" y="202.7" font-size="16" fill="#dcdcdc" text-anchor="end" textLength="8.45" lengthAdjust="spacingAndGlyphs" >0</text>
<line x1="405.6" y1="246.2" x2="411.6" y2="246.2" stroke="#c8c8c8" stroke-width="1.5" />
<text x="405.6" y="251.7" font-size="16" fill="#dcdcdc" text-anchor="end" textLength="13.52" lengthAdjust="spacingAndGlyphs" >-5</text>
<line x1="405.6" y1="295.2" x2="411.6" y2="295.2" stroke="#c8c8c8" stroke-width="1.5" />
<text x="405.6" y="300.7" font-size="16" fill="#dcdcdc" text-anchor="end" textLength="21.97" lengthAdjust="spacingAndGlyphs" >-10</text>
<line x1="405.6" y1="344.2" x2="411.6" y2="344.2" stroke="#c8c8c8" stroke-width="1.5" />
<text x="405.6" y="349.7" font-size="16" fill="#dcdcdc" text-anchor="end" textLength="21.97" lengthAdjust="spacingAndGlyphs" >-15</text>
<line x1="411.6" y1="343.5" x2="411.6" y2="350.5" stroke="#c8c8c8" stroke-width="1.5" />
<line x1="553.5" y1="343.5" x2="553.5" y2="350.5" stroke="#c8c8c8" stroke-width="1.5" />
<text x="483.55" y="360" font-size="16" fill="#dcdcdc" text-anchor="middle" textLength="38.88" lengthAdjust="spacingAndGlyphs" >100%</text>
<text x="469.4" y="43.8" font-size="15.6" fill="#dcdcdc" text-anchor="middle" textLength="43.8" lengthAdjust="spacingAndGlyphs" >DeltaL</text>
<rect x="607.7" y="49.5" width="142.7" height="294" fill="#232323" />
<line x1="607.7" y1="99.2" x2="750.4" y2="99.2" stroke="#858585" stroke-width="2" />
<line x1="607.7" y1="148.2" x2="750.4" y2="148.2" stroke="#858585" stroke-width="2" />
<line x1="607.7" y1="197.2" x2="750.4" y2="197.2" stroke="#858585" stroke-width="2" />
<line x1="607.7" y1="246.2" x2="750.4" y2="246.2" stroke="#858585" stroke-width="2" />
<line x1="607.7" y1="295.2" x2="750.4" y2="295.2" stroke="#858585" stroke-width="2" />
<rect x="621.1" y="195.2" width="114.3" height="138.4" fill="#000" />
<rect x="622.6" y="196.7" width="111.3" height="135.4" fill="url(#g5)" />
<rect x="607.7" y="49.5" width="142.7" height="294" fill="none" stroke="#a0a0a0" stroke-width="2"/>
<line x1="606.7" y1="97.2" x2="751.4" y2="97.2" stroke="#e01010" stroke-width="2" />
<line x1="606.7" y1="294.1" x2="751.4" y2="294.1" stroke="#e01010" stroke-width="2" />
<line x1="606.7" y1="166.12" x2="751.4" y2="166.12" stroke="#ffff30" stroke-width="1.5" />
<line x1="606.7" y1="225.19" x2="751.4" y2="225.19" stroke="#ffff30" stroke-width="1.5" />
<line x1="606.7" y1="185.81" x2="751.4" y2="185.81" stroke="#0a8a0a" stroke-width="1.4" />
<line x1="606.7" y1="205.5" x2="751.4" y2="205.5" stroke="#0a8a0a" stroke-width="1.4" />
<line x1="601.7" y1="50.2" x2="607.7" y2="50.2" stroke="#c8c8c8" stroke-width="1.5" />
<text x="601.7" y="55.7" font-size="16" fill="#dcdcdc" text-anchor="end" textLength="16.91" lengthAdjust="spacingAndGlyphs" >15</text>
<line x1="601.7" y1="99.2" x2="607.7" y2="99.2" stroke="#c8c8c8" stroke-width="1.5" />
<text x="601.7" y="104.7" font-size="16" fill="#dcdcdc" text-anchor="end" textLength="16.91" lengthAdjust="spacingAndGlyphs" >10</text>
<line x1="601.7" y1="148.2" x2="607.7" y2="148.2" stroke="#c8c8c8" stroke-width="1.5" />
<text x="601.7" y="153.7" font-size="16" fill="#dcdcdc" text-anchor="end" textLength="8.45" lengthAdjust="spacingAndGlyphs" >5</text>
<line x1="601.7" y1="197.2" x2="607.7" y2="197.2" stroke="#c8c8c8" stroke-width="1.5" />
<text x="601.7" y="202.7" font-size="16" fill="#dcdcdc" text-anchor="end" textLength="8.45" lengthAdjust="spacingAndGlyphs" >0</text>
<line x1="601.7" y1="246.2" x2="607.7" y2="246.2" stroke="#c8c8c8" stroke-width="1.5" />
<text x="601.7" y="251.7" font-size="16" fill="#dcdcdc" text-anchor="end" textLength="13.52" lengthAdjust="spacingAndGlyphs" >-5</text>
<line x1="601.7" y1="295.2" x2="607.7" y2="295.2" stroke="#c8c8c8" stroke-width="1.5" />
<text x="601.7" y="300.7" font-size="16" fill="#dcdcdc" text-anchor="end" textLength="21.97" lengthAdjust="spacingAndGlyphs" >-10</text>
<line x1="601.7" y1="344.2" x2="607.7" y2="344.2" stroke="#c8c8c8" stroke-width="1.5" />
<text x="601.7" y="349.7" font-size="16" fill="#dcdcdc" text-anchor="end" textLength="21.97" lengthAdjust="spacingAndGlyphs" >-15</text>
<line x1="607.7" y1="343.5" x2="607.7" y2="350.5" stroke="#c8c8c8" stroke-width="1.5" />
<line x1="750.4" y1="343.5" x2="750.4" y2="350.5" stroke="#c8c8c8" stroke-width="1.5" />
<text x="680.05" y="360" font-size="16" fill="#dcdcdc" text-anchor="middle" textLength="38.88" lengthAdjust="spacingAndGlyphs" >100%</text>
<text x="665.7" y="43.8" font-size="15.6" fill="#dcdcdc" text-anchor="middle" textLength="45.1" lengthAdjust="spacingAndGlyphs" >DeltaC</text>
<rect x="804.4" y="49.5" width="142" height="294" fill="#232323" />
<line x1="804.4" y1="99.2" x2="946.4" y2="99.2" stroke="#858585" stroke-width="2" />
<line x1="804.4" y1="148.2" x2="946.4" y2="148.2" stroke="#858585" stroke-width="2" />
<line x1="804.4" y1="197.2" x2="946.4" y2="197.2" stroke="#858585" stroke-width="2" />
<line x1="804.4" y1="246.2" x2="946.4" y2="246.2" stroke="#858585" stroke-width="2" />
<line x1="804.4" y1="295.2" x2="946.4" y2="295.2" stroke="#858585" stroke-width="2" />
<rect x="817.8" y="195.2" width="113.6" height="18.6" fill="#000" />
<rect x="819.3" y="196.7" width="110.6" height="15.6" fill="url(#g6)" />
<rect x="804.4" y="49.5" width="142" height="294" fill="none" stroke="#a0a0a0" stroke-width="2"/>
<line x1="803.4" y1="97.2" x2="947.4" y2="97.2" stroke="#e01010" stroke-width="2" />
<line x1="803.4" y1="294.1" x2="947.4" y2="294.1" stroke="#e01010" stroke-width="2" />
<line x1="803.4" y1="166.12" x2="947.4" y2="166.12" stroke="#ffff30" stroke-width="1.5" />
<line x1="803.4" y1="225.19" x2="947.4" y2="225.19" stroke="#ffff30" stroke-width="1.5" />
<line x1="803.4" y1="185.81" x2="947.4" y2="185.81" stroke="#0a8a0a" stroke-width="1.4" />
<line x1="803.4" y1="205.5" x2="947.4" y2="205.5" stroke="#0a8a0a" stroke-width="1.4" />
<line x1="798.4" y1="50.2" x2="804.4" y2="50.2" stroke="#c8c8c8" stroke-width="1.5" />
<text x="798.4" y="55.7" font-size="16" fill="#dcdcdc" text-anchor="end" textLength="16.91" lengthAdjust="spacingAndGlyphs" >15</text>
<line x1="798.4" y1="99.2" x2="804.4" y2="99.2" stroke="#c8c8c8" stroke-width="1.5" />
<text x="798.4" y="104.7" font-size="16" fill="#dcdcdc" text-anchor="end" textLength="16.91" lengthAdjust="spacingAndGlyphs" >10</text>
<line x1="798.4" y1="148.2" x2="804.4" y2="148.2" stroke="#c8c8c8" stroke-width="1.5" />
<text x="798.4" y="153.7" font-size="16" fill="#dcdcdc" text-anchor="end" textLength="8.45" lengthAdjust="spacingAndGlyphs" >5</text>
<line x1="798.4" y1="197.2" x2="804.4" y2="197.2" stroke="#c8c8c8" stroke-width="1.5" />
<text x="798.4" y="202.7" font-size="16" fill="#dcdcdc" text-anchor="end" textLength="8.45" lengthAdjust="spacingAndGlyphs" >0</text>
<line x1="798.4" y1="246.2" x2="804.4" y2="246.2" stroke="#c8c8c8" stroke-width="1.5" />
<text x="798.4" y="251.7" font-size="16" fill="#dcdcdc" text-anchor="end" textLength="13.52" lengthAdjust="spacingAndGlyphs" >-5</text>
<line x1="798.4" y1="295.2" x2="804.4" y2="295.2" stroke="#c8c8c8" stroke-width="1.5" />
<text x="798.4" y="300.7" font-size="16" fill="#dcdcdc" text-anchor="end" textLength="21.97" lengthAdjust="spacingAndGlyphs" >-10</text>
<line x1="798.4" y1="344.2" x2="804.4" y2="344.2" stroke="#c8c8c8" stroke-width="1.5" />
<text x="798.4" y="349.7" font-size="16" fill="#dcdcdc" text-anchor="end" textLength="21.97" lengthAdjust="spacingAndGlyphs" >-15</text>
<line x1="804.4" y1="343.5" x2="804.4" y2="350.5" stroke="#c8c8c8" stroke-width="1.5" />
<line x1="946.4" y1="343.5" x2="946.4" y2="350.5" stroke="#c8c8c8" stroke-width="1.5" />
<text x="876.4" y="360" font-size="16" fill="#dcdcdc" text-anchor="middle" textLength="38.88" lengthAdjust="spacingAndGlyphs" >100%</text>
<text x="861.5" y="43.8" font-size="15.6" fill="#dcdcdc" text-anchor="middle" textLength="46.3" lengthAdjust="spacingAndGlyphs" >DeltaH</text>
<rect x="343" y="378" width="638" height="178" fill="#000" />
<rect x="364" y="386" width="107.4" height="63" fill="#fff" />
<rect x="365" y="387" width="105.4" height="61" fill="#9999ab" />
<rect x="366" y="388" width="103.4" height="59" fill="#bbbbd0" />
<rect x="364" y="467" width="107.4" height="63" fill="#fff" />
<rect x="365" y="468" width="105.4" height="61" fill="#9d9d86" />
<rect x="366" y="469" width="103.4" height="59" fill="#bfbfa3" />
<text x="418" y="546" font-size="12.6" fill="#fff" text-anchor="middle" textLength="23.45" lengthAdjust="spacingAndGlyphs" font-weight="bold" >20%</text>
<rect x="488.95" y="386" width="107.4" height="63" fill="#fff" />
<rect x="489.95" y="387" width="105.4" height="61" fill="#9a9a92" />
<rect x="490.95" y="388" width="103.4" height="59" fill="#bcbcb2" />
<rect x="488.95" y="467" width="107.4" height="63" fill="#fff" />
<rect x="489.95" y="468" width="105.4" height="61" fill="#9d9c6c" />
<rect x="490.95" y="469" width="103.4" height="59" fill="#bfbe84" />
<text x="542.95" y="546" font-size="12.6" fill="#fff" text-anchor="middle" textLength="23.45" lengthAdjust="spacingAndGlyphs" font-weight="bold" >40%</text>
<rect x="613.9" y="386" width="107.4" height="63" fill="#fff" />
<rect x="614.9" y="387" width="105.4" height="61" fill="#999475" />
<rect x="615.9" y="388" width="103.4" height="59" fill="#bab48f" />
<rect x="613.9" y="467" width="107.4" height="63" fill="#fff" />
<rect x="614.9" y="468" width="105.4" height="61" fill="#9d9c54" />
<rect x="615.9" y="469" width="103.4" height="59" fill="#bfbe67" />
<text x="667.9" y="546" font-size="12.6" fill="#fff" text-anchor="middle" textLength="23.45" lengthAdjust="spacingAndGlyphs" font-weight="bold" >60%</text>
<rect x="738.85" y="386" width="107.4" height="63" fill="#fff" />
<rect x="739.85" y="387" width="105.4" height="61" fill="#97905a" />
<rect x="740.85" y="388" width="103.4" height="59" fill="#b8b06e" />
<rect x="738.85" y="467" width="107.4" height="63" fill="#fff" />
<rect x="739.85" y="468" width="105.4" height="61" fill="#9c9c39" />
<rect x="740.85" y="469" width="103.4" height="59" fill="#bebe46" />
<text x="792.85" y="546" font-size="12.6" fill="#fff" text-anchor="middle" textLength="23.45" lengthAdjust="spacingAndGlyphs" font-weight="bold" >80%</text>
<rect x="863.8" y="386" width="107.4" height="63" fill="#fff" />
<rect x="864.8" y="387" width="105.4" height="61" fill="#978b2d" />
<rect x="865.8" y="388" width="103.4" height="59" fill="#b8aa37" />
<rect x="863.8" y="467" width="107.4" height="63" fill="#fff" />
<rect x="864.8" y="468" width="105.4" height="61" fill="#9d9c00" />
<rect x="865.8" y="469" width="103.4" height="59" fill="#bfbe00" />
<text x="917.8" y="546" font-size="12.6" fill="#fff" text-anchor="middle" textLength="29.97" lengthAdjust="spacingAndGlyphs" font-weight="bold" >100%</text>
<text transform="translate(355.6,417.5) rotate(-90)" font-size="12.6" fill="#fff" text-anchor="middle" font-weight="bold" textLength="38" lengthAdjust="spacingAndGlyphs">Actual</text>
<text transform="translate(355.6,498.5) rotate(-90)" font-size="12.6" fill="#fff" text-anchor="middle" font-weight="bold" textLength="37" lengthAdjust="spacingAndGlyphs">Target</text>
<rect x="357.4" y="590.5" width="623.8" height="270.5" fill="#232323" />
<line x1="357.4" y1="644.1" x2="981.2" y2="644.1" stroke="#858585" stroke-width="2" />
<line x1="357.4" y1="699.3" x2="981.2" y2="699.3" stroke="#858585" stroke-width="2" />
<line x1="357.4" y1="753.3" x2="981.2" y2="753.3" stroke="#858585" stroke-width="2" />
<line x1="357.4" y1="807.3" x2="981.2" y2="807.3" stroke="#858585" stroke-width="2" />
<rect x="433.9" y="803.13" width="11.3" height="57.87" fill="#000" />
<rect x="435.4" y="804.63" width="8.3" height="54.87" fill="url(#g7)" />
<rect x="471.5" y="701.41" width="11.7" height="159.59" fill="#000" />
<rect x="473" y="702.91" width="8.7" height="156.59" fill="url(#g8)" />
<rect x="482.6" y="643.04" width="11.7" height="217.96" fill="#000" />
<rect x="484.1" y="644.54" width="8.7" height="214.96" fill="url(#g9)" />
<rect x="493.7" y="772.11" width="11.7" height="88.89" fill="#000" />
<rect x="495.2" y="773.61" width="8.7" height="85.89" fill="url(#g10)" />
<rect x="504.8" y="687.36" width="11.7" height="173.64" fill="#000" />
<rect x="506.3" y="688.86" width="8.7" height="170.64" fill="url(#g11)" />
<rect x="515.9" y="740.87" width="11.7" height="120.13" fill="#000" />
<rect x="517.4" y="742.37" width="8.7" height="117.13" fill="url(#g12)" />
<rect x="527" y="630.07" width="11.7" height="230.93" fill="#000" />
<rect x="528.5" y="631.57" width="8.7" height="227.93" fill="url(#g13)" />
<rect x="575.7" y="717.63" width="11.7" height="143.37" fill="#000" />
<rect x="577.2" y="719.13" width="8.7" height="140.37" fill="url(#g14)" />
<rect x="586.8" y="721.95" width="11.7" height="139.05" fill="#000" />
<rect x="588.3" y="723.45" width="8.7" height="136.05" fill="url(#g15)" />
<rect x="597.9" y="788.11" width="11.7" height="72.89" fill="#000" />
<rect x="599.4" y="789.61" width="8.7" height="69.89" fill="url(#g16)" />
<rect x="609" y="685.2" width="11.7" height="175.8" fill="#000" />
<rect x="610.5" y="686.7" width="8.7" height="172.8" fill="url(#g17)" />
<rect x="620.1" y="750.06" width="11.7" height="110.94" fill="#000" />
<rect x="621.6" y="751.56" width="8.7" height="107.94" fill="url(#g18)" />
<rect x="631.2" y="692.76" width="11.7" height="168.24" fill="#000" />
<rect x="632.7" y="694.26" width="8.7" height="165.24" fill="url(#g19)" />
<rect x="679" y="737.52" width="11.7" height="123.48" fill="#000" />
<rect x="680.5" y="739.02" width="8.7" height="120.48" fill="url(#g20)" />
<rect x="690.1" y="763.35" width="11.7" height="97.65" fill="#000" />
<rect x="691.6" y="764.85" width="8.7" height="94.65" fill="url(#g21)" />
<rect x="701.2" y="781.08" width="11.7" height="79.92" fill="#000" />
<rect x="702.7" y="782.58" width="8.7" height="76.92" fill="url(#g22)" />
<rect x="712.3" y="691.68" width="11.7" height="169.32" fill="#000" />
<rect x="713.8" y="693.18" width="8.7" height="166.32" fill="url(#g23)" />
<rect x="723.4" y="752.76" width="11.7" height="108.24" fill="#000" />
<rect x="724.9" y="754.26" width="8.7" height="105.24" fill="url(#g24)" />
<rect x="734.5" y="747.14" width="11.7" height="113.86" fill="#000" />
<rect x="736" y="748.64" width="8.7" height="110.86" fill="url(#g25)" />
<rect x="782.9" y="755.79" width="11.7" height="105.21" fill="#000" />
<rect x="784.4" y="757.29" width="8.7" height="102.21" fill="url(#g26)" />
<rect x="794" y="787.24" width="11.7" height="73.76" fill="#000" />
<rect x="795.5" y="788.74" width="8.7" height="70.76" fill="url(#g27)" />
<rect x="805.1" y="759.79" width="11.7" height="101.21" fill="#000" />
<rect x="806.6" y="761.29" width="8.7" height="98.21" fill="url(#g28)" />
<rect x="816.2" y="696.01" width="11.7" height="164.99" fill="#000" />
<rect x="817.7" y="697.51" width="8.7" height="161.99" fill="url(#g29)" />
<rect x="827.3" y="748.22" width="11.7" height="112.78" fill="#000" />
<rect x="828.8" y="749.72" width="8.7" height="109.78" fill="url(#g30)" />
<rect x="838.4" y="780.76" width="11.7" height="80.24" fill="#000" />
<rect x="839.9" y="782.26" width="8.7" height="77.24" fill="url(#g31)" />
<rect x="886.3" y="749.62" width="11.7" height="111.38" fill="#000" />
<rect x="887.8" y="751.12" width="8.7" height="108.38" fill="url(#g32)" />
<rect x="897.4" y="783.89" width="11.7" height="77.11" fill="#000" />
<rect x="898.9" y="785.39" width="8.7" height="74.11" fill="url(#g33)" />
<rect x="908.5" y="709.41" width="11.7" height="151.59" fill="#000" />
<rect x="910" y="710.91" width="8.7" height="148.59" fill="url(#g34)" />
<rect x="919.6" y="694.49" width="11.7" height="166.51" fill="#000" />
<rect x="921.1" y="695.99" width="8.7" height="163.51" fill="url(#g35)" />
<rect x="930.7" y="736.11" width="11.7" height="124.89" fill="#000" />
<rect x="932.2" y="737.61" width="8.7" height="121.89" fill="url(#g36)" />
<rect x="941.8" y="800.32" width="11.7" height="60.68" fill="#000" />
<rect x="943.3" y="801.82" width="8.7" height="57.68" fill="url(#g37)" />
<line x1="357.4" y1="752.3" x2="981.2" y2="752.3" stroke="#e81010" stroke-width="2" />
<line x1="357.4" y1="828.47" x2="981.2" y2="828.47" stroke="#ffff20" stroke-width="1.6" />
<line x1="357.4" y1="850.09" x2="981.2" y2="850.09" stroke="#0a800a" stroke-width="2" />
<rect x="357.4" y="590.5" width="623.8" height="270.5" fill="none" stroke="#a0a0a0" stroke-width="2"/>
<line x1="351.4" y1="591.1" x2="357.4" y2="591.1" stroke="#c8c8c8" stroke-width="1.5" />
<text x="351.4" y="596.6" font-size="16" fill="#dcdcdc" text-anchor="end" textLength="16.91" lengthAdjust="spacingAndGlyphs" >25</text>
<line x1="351.4" y1="644.1" x2="357.4" y2="644.1" stroke="#c8c8c8" stroke-width="1.5" />
<text x="351.4" y="649.6" font-size="16" fill="#dcdcdc" text-anchor="end" textLength="16.91" lengthAdjust="spacingAndGlyphs" >20</text>
<line x1="351.4" y1="699.3" x2="357.4" y2="699.3" stroke="#c8c8c8" stroke-width="1.5" />
<text x="351.4" y="704.8" font-size="16" fill="#dcdcdc" text-anchor="end" textLength="16.91" lengthAdjust="spacingAndGlyphs" >15</text>
<line x1="351.4" y1="753.3" x2="357.4" y2="753.3" stroke="#c8c8c8" stroke-width="1.5" />
<text x="351.4" y="758.8" font-size="16" fill="#dcdcdc" text-anchor="end" textLength="16.91" lengthAdjust="spacingAndGlyphs" >10</text>
<line x1="351.4" y1="807.3" x2="357.4" y2="807.3" stroke="#c8c8c8" stroke-width="1.5" />
<text x="351.4" y="812.8" font-size="16" fill="#dcdcdc" text-anchor="end" textLength="8.45" lengthAdjust="spacingAndGlyphs" >5</text>
<line x1="351.4" y1="861" x2="357.4" y2="861" stroke="#c8c8c8" stroke-width="1.5" />
<text x="351.4" y="868.7" font-size="16" fill="#dcdcdc" text-anchor="end" textLength="8.45" lengthAdjust="spacingAndGlyphs" >0</text>
<line x1="357.4" y1="861" x2="357.4" y2="868" stroke="#c8c8c8" stroke-width="1.5" />
<line x1="461.37" y1="861" x2="461.37" y2="868" stroke="#c8c8c8" stroke-width="1.5" />
<line x1="565.33" y1="861" x2="565.33" y2="868" stroke="#c8c8c8" stroke-width="1.5" />
<line x1="669.3" y1="861" x2="669.3" y2="868" stroke="#c8c8c8" stroke-width="1.5" />
<line x1="773.27" y1="861" x2="773.27" y2="868" stroke="#c8c8c8" stroke-width="1.5" />
<line x1="877.23" y1="861" x2="877.23" y2="868" stroke="#c8c8c8" stroke-width="1.5" />
<line x1="981.2" y1="861" x2="981.2" y2="868" stroke="#c8c8c8" stroke-width="1.5" />
<text x="408.88" y="878" font-size="16" fill="#dcdcdc" text-anchor="middle" textLength="25.36" lengthAdjust="spacingAndGlyphs" >100</text>
<text x="512.85" y="878" font-size="16" fill="#dcdcdc" text-anchor="middle" textLength="30.42" lengthAdjust="spacingAndGlyphs" >20%</text>
<text x="616.82" y="878" font-size="16" fill="#dcdcdc" text-anchor="middle" textLength="30.42" lengthAdjust="spacingAndGlyphs" >40%</text>
<text x="720.78" y="878" font-size="16" fill="#dcdcdc" text-anchor="middle" textLength="30.42" lengthAdjust="spacingAndGlyphs" >60%</text>
<text x="824.75" y="878" font-size="16" fill="#dcdcdc" text-anchor="middle" textLength="30.42" lengthAdjust="spacingAndGlyphs" >80%</text>
<text x="928.72" y="878" font-size="16" fill="#dcdcdc" text-anchor="middle" textLength="38.88" lengthAdjust="spacingAndGlyphs" >100%</text>
<text x="658.4" y="584" font-size="15.6" fill="#dcdcdc" text-anchor="middle" textLength="82.5" lengthAdjust="spacingAndGlyphs" >DeltaE 2000</text>
<text x="12.6" y="686.8" font-size="30.8" fill="#ececec" textLength="105.5" lengthAdjust="spacingAndGlyphs" >Current</text>
<text x="127.5" y="686.8" font-size="30.8" fill="#ececec" textLength="112" lengthAdjust="spacingAndGlyphs" >Reading</text>
<text x="12.8" y="732.2" font-size="25.5" fill="#ececec" textLength="77.5" lengthAdjust="spacingAndGlyphs" >x: 0,41</text>
<text x="12.8" y="776.4" font-size="25.5" fill="#ececec" textLength="107.3" lengthAdjust="spacingAndGlyphs" >y: 0,4753</text>
<text x="12.8" y="820.7" font-size="25.5" fill="#ececec" textLength="115.3" lengthAdjust="spacingAndGlyphs" >fL: 26,598</text>
<text x="12.8" y="865.1" font-size="25.5" fill="#ececec" textLength="165" lengthAdjust="spacingAndGlyphs" >cd/m²: 91,131</text>
<rect x="1021" y="645.7" width="510" height="34.3" fill="url(#g38)" />
<rect x="1004" y="645.7" width="17" height="34.3" fill="#000" />
<text x="1168" y="669.9" font-size="18.5" fill="#f4f4f4" textLength="37.5" lengthAdjust="spacingAndGlyphs" >20%</text>
<text x="1241.6" y="669.9" font-size="18.5" fill="#f4f4f4" textLength="37.5" lengthAdjust="spacingAndGlyphs" >40%</text>
<text x="1315.1" y="669.9" font-size="18.5" fill="#f4f4f4" textLength="37.5" lengthAdjust="spacingAndGlyphs" >60%</text>
<text x="1388.5" y="669.9" font-size="18.5" fill="#f4f4f4" textLength="37.5" lengthAdjust="spacingAndGlyphs" >80%</text>
<text x="1462" y="669.9" font-size="18.5" fill="#f4f4f4" textLength="48.65" lengthAdjust="spacingAndGlyphs" >100%</text>
<rect x="1021" y="680" width="510" height="31" fill="#404040" />
<rect x="1004" y="680" width="17" height="31" fill="url(#g39)" />
<text x="1026" y="702.1" font-size="18.5" fill="#f4f4f4" textLength="71.9" lengthAdjust="spacingAndGlyphs" >x: CIE31</text>
<text x="1168" y="702.1" font-size="18.5" fill="#f4f4f4" textLength="38.05" lengthAdjust="spacingAndGlyphs" >0,30</text>
<text x="1241.6" y="702.1" font-size="18.5" fill="#f4f4f4" textLength="38.05" lengthAdjust="spacingAndGlyphs" >0,32</text>
<text x="1315.1" y="702.1" font-size="18.5" fill="#f4f4f4" textLength="38.05" lengthAdjust="spacingAndGlyphs" >0,34</text>
<text x="1388.5" y="702.1" font-size="18.5" fill="#f4f4f4" textLength="38.05" lengthAdjust="spacingAndGlyphs" >0,37</text>
<text x="1462" y="702.1" font-size="18.5" fill="#f4f4f4" textLength="38.05" lengthAdjust="spacingAndGlyphs" >0,41</text>
<rect x="1021" y="711" width="510" height="31" fill="#808080" />
<rect x="1004" y="711" width="17" height="31" fill="url(#g39)" />
<text x="1026" y="733.1" font-size="18.5" fill="#f4f4f4" textLength="72" lengthAdjust="spacingAndGlyphs" >y: CIE31</text>
<text x="1168" y="733.1" font-size="18.5" fill="#f4f4f4" textLength="38.05" lengthAdjust="spacingAndGlyphs" >0,31</text>
<text x="1241.6" y="733.1" font-size="18.5" fill="#f4f4f4" textLength="38.05" lengthAdjust="spacingAndGlyphs" >0,34</text>
<text x="1315.1" y="733.1" font-size="18.5" fill="#f4f4f4" textLength="38.05" lengthAdjust="spacingAndGlyphs" >0,38</text>
<text x="1388.5" y="733.1" font-size="18.5" fill="#f4f4f4" textLength="38.05" lengthAdjust="spacingAndGlyphs" >0,42</text>
<text x="1462" y="733.1" font-size="18.5" fill="#f4f4f4" textLength="38.05" lengthAdjust="spacingAndGlyphs" >0,48</text>
<rect x="1021" y="742" width="510" height="30.7" fill="#404040" />
<rect x="1004" y="742" width="17" height="30.7" fill="url(#g39)" />
<text x="1026.5" y="763.8" font-size="18.5" fill="#f4f4f4" >Y</text>
<text x="1168" y="763.8" font-size="18.5" fill="#f4f4f4" textLength="60.35" lengthAdjust="spacingAndGlyphs" >111,66</text>
<text x="1241.6" y="763.8" font-size="18.5" fill="#f4f4f4" textLength="60.35" lengthAdjust="spacingAndGlyphs" >106,11</text>
<text x="1315.1" y="763.8" font-size="18.5" fill="#f4f4f4" textLength="60.35" lengthAdjust="spacingAndGlyphs" >101,51</text>
<text x="1388.5" y="763.8" font-size="18.5" fill="#f4f4f4" textLength="49.2" lengthAdjust="spacingAndGlyphs" >97,50</text>
<text x="1462" y="763.8" font-size="18.5" fill="#f4f4f4" textLength="49.2" lengthAdjust="spacingAndGlyphs" >91,13</text>
<rect x="1021" y="772.7" width="510" height="30.8" fill="#808080" />
<rect x="1004" y="772.7" width="17" height="30.8" fill="url(#g39)" />
<text x="1026" y="794.6" font-size="18.5" fill="#f4f4f4" textLength="128.7" lengthAdjust="spacingAndGlyphs" >Target x:CIE31</text>
<text x="1168" y="794.6" font-size="18.5" fill="#f4f4f4" textLength="38.05" lengthAdjust="spacingAndGlyphs" >0,33</text>
<text x="1241.6" y="794.6" font-size="18.5" fill="#f4f4f4" textLength="38.05" lengthAdjust="spacingAndGlyphs" >0,36</text>
<text x="1315.1" y="794.6" font-size="18.5" fill="#f4f4f4" textLength="38.05" lengthAdjust="spacingAndGlyphs" >0,38</text>
<text x="1388.5" y="794.6" font-size="18.5" fill="#f4f4f4" textLength="38.05" lengthAdjust="spacingAndGlyphs" >0,40</text>
<text x="1462" y="794.6" font-size="18.5" fill="#f4f4f4" textLength="38.05" lengthAdjust="spacingAndGlyphs" >0,42</text>
<rect x="1021" y="803.5" width="510" height="30.7" fill="#404040" />
<rect x="1004" y="803.5" width="17" height="30.7" fill="url(#g39)" />
<text x="1026" y="825.3" font-size="18.5" fill="#f4f4f4" textLength="129.7" lengthAdjust="spacingAndGlyphs" >Target y:CIE31</text>
<text x="1168" y="825.3" font-size="18.5" fill="#f4f4f4" textLength="38.05" lengthAdjust="spacingAndGlyphs" >0,36</text>
<text x="1241.6" y="825.3" font-size="18.5" fill="#f4f4f4" textLength="38.05" lengthAdjust="spacingAndGlyphs" >0,40</text>
<text x="1315.1" y="825.3" font-size="18.5" fill="#f4f4f4" textLength="38.05" lengthAdjust="spacingAndGlyphs" >0,44</text>
<text x="1388.5" y="825.3" font-size="18.5" fill="#f4f4f4" textLength="38.05" lengthAdjust="spacingAndGlyphs" >0,47</text>
<text x="1462" y="825.3" font-size="18.5" fill="#f4f4f4" textLength="38.05" lengthAdjust="spacingAndGlyphs" >0,51</text>
<rect x="1021" y="834.2" width="510" height="30.6" fill="#808080" />
<rect x="1004" y="834.2" width="17" height="30.6" fill="url(#g39)" />
<text x="1026" y="855.9" font-size="18.5" fill="#f4f4f4" textLength="74.2" lengthAdjust="spacingAndGlyphs" >Target Y</text>
<text x="1168" y="855.9" font-size="18.5" fill="#f4f4f4" textLength="60.35" lengthAdjust="spacingAndGlyphs" >112,05</text>
<text x="1241.6" y="855.9" font-size="18.5" fill="#f4f4f4" textLength="60.35" lengthAdjust="spacingAndGlyphs" >110,09</text>
<text x="1315.1" y="855.9" font-size="18.5" fill="#f4f4f4" textLength="60.35" lengthAdjust="spacingAndGlyphs" >108,58</text>
<text x="1388.5" y="855.9" font-size="18.5" fill="#f4f4f4" textLength="60.35" lengthAdjust="spacingAndGlyphs" >107,39</text>
<text x="1462" y="855.9" font-size="18.5" fill="#f4f4f4" textLength="60.35" lengthAdjust="spacingAndGlyphs" >106,24</text>
<rect x="1001" y="14" width="714" height="623" fill="#1c1c1c" />
<rect x="1009" y="22" width="701" height="608" fill="#323232" />
<rect x="1038.5" y="47.5" width="668.5" height="551" fill="#232323" />
<g clip-path="url(#locus)"><g filter="url(#vb)">
<rect x="1086" y="39" width="23" height="3.5" fill="url(#c0)"/>
<rect x="1080" y="42" width="49" height="3.5" fill="url(#c1)"/>
<rect x="1074" y="45" width="69" height="3.5" fill="url(#c2)"/>
<rect x="1069" y="48" width="81" height="3.5" fill="url(#c3)"/>
<rect x="1063" y="51" width="95" height="3.5" fill="url(#c4)"/>
<rect x="1058" y="54" width="107" height="3.5" fill="url(#c5)"/>
<rect x="1057" y="57" width="115" height="3.5" fill="url(#c6)"/>
<rect x="1055" y="60" width="123" height="3.5" fill="url(#c7)"/>
<rect x="1054" y="63" width="130" height="3.5" fill="url(#c8)"/>
<rect x="1052" y="66" width="137" height="3.5" fill="url(#c9)"/>
<rect x="1051" y="69" width="144" height="3.5" fill="url(#c10)"/>
<rect x="1049" y="72" width="152" height="3.5" fill="url(#c11)"/>
<rect x="1048" y="75" width="158" height="3.5" fill="url(#c12)"/>
<rect x="1046" y="78" width="165" height="3.5" fill="url(#c13)"/>
<rect x="1045" y="81" width="171" height="3.5" fill="url(#c14)"/>
<rect x="1043" y="84" width="178" height="3.5" fill="url(#c15)"/>
<rect x="1042" y="87" width="184" height="3.5" fill="url(#c16)"/>
<rect x="1040" y="90" width="191" height="3.5" fill="url(#c17)"/>
<rect x="1039" y="93" width="196" height="3.5" fill="url(#c18)"/>
<rect x="1038" y="96" width="201" height="3.5" fill="url(#c19)"/>
<rect x="1038" y="99" width="206" height="3.5" fill="url(#c20)"/>
<rect x="1037" y="102" width="211" height="3.5" fill="url(#c21)"/>
<rect x="1037" y="105" width="216" height="3.5" fill="url(#c22)"/>
<rect x="1037" y="108" width="220" height="3.5" fill="url(#c23)"/>
<rect x="1036" y="111" width="225" height="3.5" fill="url(#c24)"/>
<rect x="1036" y="114" width="229" height="3.5" fill="url(#c25)"/>
<rect x="1036" y="117" width="234" height="3.5" fill="url(#c26)"/>
<rect x="1035" y="120" width="239" height="3.5" fill="url(#c27)"/>
<rect x="1035" y="123" width="243" height="3.5" fill="url(#c28)"/>
<rect x="1034" y="126" width="248" height="3.5" fill="url(#c29)"/>
<rect x="1034" y="129" width="252" height="3.5" fill="url(#c30)"/>
<rect x="1034" y="132" width="256" height="3.5" fill="url(#c31)"/>
<rect x="1033" y="135" width="261" height="3.5" fill="url(#c32)"/>
<rect x="1033" y="138" width="265" height="3.5" fill="url(#c33)"/>
<rect x="1033" y="141" width="269" height="3.5" fill="url(#c34)"/>
<rect x="1032" y="144" width="273" height="3.5" fill="url(#c35)"/>
<rect x="1032" y="147" width="277" height="3.5" fill="url(#c36)"/>
<rect x="1031" y="150" width="282" height="3.5" fill="url(#c37)"/>
<rect x="1031" y="153" width="286" height="3.5" fill="url(#c38)"/>
<rect x="1031" y="156" width="290" height="3.5" fill="url(#c39)"/>
<rect x="1031" y="159" width="294" height="3.5" fill="url(#c40)"/>
<rect x="1031" y="162" width="297" height="3.5" fill="url(#c41)"/>
<rect x="1031" y="165" width="301" height="3.5" fill="url(#c42)"/>
<rect x="1031" y="168" width="305" height="3.5" fill="url(#c43)"/>
<rect x="1031" y="171" width="309" height="3.5" fill="url(#c44)"/>
<rect x="1031" y="174" width="313" height="3.5" fill="url(#c45)"/>
<rect x="1031" y="177" width="316" height="3.5" fill="url(#c46)"/>
<rect x="1031" y="180" width="320" height="3.5" fill="url(#c47)"/>
<rect x="1031" y="183" width="324" height="3.5" fill="url(#c48)"/>
<rect x="1031" y="186" width="328" height="3.5" fill="url(#c49)"/>
<rect x="1031" y="189" width="331" height="3.5" fill="url(#c50)"/>
<rect x="1031" y="192" width="335" height="3.5" fill="url(#c51)"/>
<rect x="1031" y="195" width="339" height="3.5" fill="url(#c52)"/>
<rect x="1031" y="198" width="342" height="3.5" fill="url(#c53)"/>
<rect x="1032" y="201" width="345" height="3.5" fill="url(#c54)"/>
<rect x="1032" y="204" width="349" height="3.5" fill="url(#c55)"/>
<rect x="1032" y="207" width="352" height="3.5" fill="url(#c56)"/>
<rect x="1032" y="210" width="356" height="3.5" fill="url(#c57)"/>
<rect x="1032" y="213" width="360" height="3.5" fill="url(#c58)"/>
<rect x="1032" y="216" width="364" height="3.5" fill="url(#c59)"/>
<rect x="1032" y="219" width="367" height="3.5" fill="url(#c60)"/>
<rect x="1032" y="222" width="371" height="3.5" fill="url(#c61)"/>
<rect x="1033" y="225" width="374" height="3.5" fill="url(#c62)"/>
<rect x="1033" y="228" width="377" height="3.5" fill="url(#c63)"/>
<rect x="1033" y="231" width="381" height="3.5" fill="url(#c64)"/>
<rect x="1033" y="234" width="385" height="3.5" fill="url(#c65)"/>
<rect x="1033" y="237" width="388" height="3.5" fill="url(#c66)"/>
<rect x="1033" y="240" width="392" height="3.5" fill="url(#c67)"/>
<rect x="1033" y="243" width="396" height="3.5" fill="url(#c68)"/>
<rect x="1034" y="246" width="398" height="3.5" fill="url(#c69)"/>
<rect x="1034" y="249" width="402" height="3.5" fill="url(#c70)"/>
<rect x="1034" y="252" width="406" height="3.5" fill="url(#c71)"/>
<rect x="1034" y="255" width="409" height="3.5" fill="url(#c72)"/>
<rect x="1034" y="258" width="413" height="3.5" fill="url(#c73)"/>
<rect x="1035" y="261" width="416" height="3.5" fill="url(#c74)"/>
<rect x="1035" y="264" width="419" height="3.5" fill="url(#c75)"/>
<rect x="1036" y="267" width="422" height="3.5" fill="url(#c76)"/>
<rect x="1036" y="270" width="425" height="3.5" fill="url(#c77)"/>
<rect x="1036" y="273" width="429" height="3.5" fill="url(#c78)"/>
<rect x="1037" y="276" width="432" height="3.5" fill="url(#c79)"/>
<rect x="1037" y="279" width="435" height="3.5" fill="url(#c80)"/>
<rect x="1038" y="282" width="438" height="3.5" fill="url(#c81)"/>
<rect x="1038" y="285" width="442" height="3.5" fill="url(#c82)"/>
<rect x="1039" y="288" width="444" height="3.5" fill="url(#c83)"/>
<rect x="1039" y="291" width="448" height="3.5" fill="url(#c84)"/>
<rect x="1040" y="294" width="451" height="3.5" fill="url(#c85)"/>
<rect x="1040" y="297" width="454" height="3.5" fill="url(#c86)"/>
<rect x="1040" y="300" width="458" height="3.5" fill="url(#c87)"/>
<rect x="1041" y="303" width="461" height="3.5" fill="url(#c88)"/>
<rect x="1041" y="306" width="464" height="3.5" fill="url(#c89)"/>
<rect x="1042" y="309" width="467" height="3.5" fill="url(#c90)"/>
<rect x="1042" y="312" width="471" height="3.5" fill="url(#c91)"/>
<rect x="1043" y="315" width="473" height="3.5" fill="url(#c92)"/>
<rect x="1043" y="318" width="477" height="3.5" fill="url(#c93)"/>
<rect x="1044" y="321" width="480" height="3.5" fill="url(#c94)"/>
<rect x="1044" y="324" width="483" height="3.5" fill="url(#c95)"/>
<rect x="1044" y="327" width="487" height="3.5" fill="url(#c96)"/>
<rect x="1045" y="330" width="490" height="3.5" fill="url(#c97)"/>
<rect x="1045" y="333" width="493" height="3.5" fill="url(#c98)"/>
<rect x="1046" y="336" width="496" height="3.5" fill="url(#c99)"/>
<rect x="1046" y="339" width="500" height="3.5" fill="url(#c100)"/>
<rect x="1047" y="342" width="502" height="3.5" fill="url(#c101)"/>
<rect x="1048" y="345" width="505" height="3.5" fill="url(#c102)"/>
<rect x="1048" y="348" width="508" height="3.5" fill="url(#c103)"/>
<rect x="1049" y="351" width="511" height="3.5" fill="url(#c104)"/>
<rect x="1050" y="354" width="514" height="3.5" fill="url(#c105)"/>
<rect x="1050" y="357" width="517" height="3.5" fill="url(#c106)"/>
<rect x="1051" y="360" width="520" height="3.5" fill="url(#c107)"/>
<rect x="1052" y="363" width="523" height="3.5" fill="url(#c108)"/>
<rect x="1052" y="366" width="527" height="3.5" fill="url(#c109)"/>
<rect x="1053" y="369" width="529" height="3.5" fill="url(#c110)"/>
<rect x="1054" y="372" width="532" height="3.5" fill="url(#c111)"/>
<rect x="1054" y="375" width="535" height="3.5" fill="url(#c112)"/>
<rect x="1055" y="378" width="538" height="3.5" fill="url(#c113)"/>
<rect x="1056" y="381" width="541" height="3.5" fill="url(#c114)"/>
<rect x="1056" y="384" width="544" height="3.5" fill="url(#c115)"/>
<rect x="1057" y="387" width="547" height="3.5" fill="url(#c116)"/>
<rect x="1058" y="390" width="550" height="3.5" fill="url(#c117)"/>
<rect x="1058" y="393" width="553" height="3.5" fill="url(#c118)"/>
<rect x="1059" y="396" width="556" height="3.5" fill="url(#c119)"/>
<rect x="1060" y="399" width="559" height="3.5" fill="url(#c120)"/>
<rect x="1060" y="402" width="562" height="3.5" fill="url(#c121)"/>
<rect x="1061" y="405" width="565" height="3.5" fill="url(#c122)"/>
<rect x="1062" y="408" width="568" height="3.5" fill="url(#c123)"/>
<rect x="1063" y="411" width="570" height="3.5" fill="url(#c124)"/>
<rect x="1063" y="414" width="571" height="3.5" fill="url(#c125)"/>
<rect x="1064" y="417" width="570" height="3.5" fill="url(#c126)"/>
<rect x="1065" y="420" width="569" height="3.5" fill="url(#c127)"/>
<rect x="1066" y="423" width="568" height="3.5" fill="url(#c128)"/>
<rect x="1067" y="426" width="567" height="3.5" fill="url(#c129)"/>
<rect x="1068" y="429" width="566" height="3.5" fill="url(#c130)"/>
<rect x="1068" y="432" width="566" height="3.5" fill="url(#c131)"/>
<rect x="1069" y="435" width="565" height="3.5" fill="url(#c132)"/>
<rect x="1070" y="438" width="556" height="3.5" fill="url(#c133)"/>
<rect x="1071" y="441" width="547" height="3.5" fill="url(#c134)"/>
<rect x="1072" y="444" width="539" height="3.5" fill="url(#c135)"/>
<rect x="1073" y="447" width="530" height="3.5" fill="url(#c136)"/>
<rect x="1074" y="450" width="521" height="3.5" fill="url(#c137)"/>
<rect x="1075" y="453" width="512" height="3.5" fill="url(#c138)"/>
<rect x="1076" y="456" width="503" height="3.5" fill="url(#c139)"/>
<rect x="1077" y="459" width="494" height="3.5" fill="url(#c140)"/>
<rect x="1077" y="462" width="487" height="3.5" fill="url(#c141)"/>
<rect x="1078" y="465" width="478" height="3.5" fill="url(#c142)"/>
<rect x="1079" y="468" width="469" height="3.5" fill="url(#c143)"/>
<rect x="1080" y="471" width="460" height="3.5" fill="url(#c144)"/>
<rect x="1081" y="474" width="451" height="3.5" fill="url(#c145)"/>
<rect x="1082" y="477" width="442" height="3.5" fill="url(#c146)"/>
<rect x="1083" y="480" width="434" height="3.5" fill="url(#c147)"/>
<rect x="1084" y="483" width="425" height="3.5" fill="url(#c148)"/>
<rect x="1086" y="486" width="415" height="3.5" fill="url(#c149)"/>
<rect x="1087" y="489" width="406" height="3.5" fill="url(#c150)"/>
<rect x="1088" y="492" width="397" height="3.5" fill="url(#c151)"/>
<rect x="1089" y="495" width="388" height="3.5" fill="url(#c152)"/>
<rect x="1090" y="498" width="380" height="3.5" fill="url(#c153)"/>
<rect x="1092" y="501" width="370" height="3.5" fill="url(#c154)"/>
<rect x="1093" y="504" width="361" height="3.5" fill="url(#c155)"/>
<rect x="1094" y="507" width="352" height="3.5" fill="url(#c156)"/>
<rect x="1095" y="510" width="343" height="3.5" fill="url(#c157)"/>
<rect x="1096" y="513" width="334" height="3.5" fill="url(#c158)"/>
<rect x="1098" y="516" width="324" height="3.5" fill="url(#c159)"/>
<rect x="1099" y="519" width="316" height="3.5" fill="url(#c160)"/>
<rect x="1100" y="522" width="307" height="3.5" fill="url(#c161)"/>
<rect x="1101" y="525" width="298" height="3.5" fill="url(#c162)"/>
<rect x="1103" y="528" width="288" height="3.5" fill="url(#c163)"/>
<rect x="1104" y="531" width="279" height="3.5" fill="url(#c164)"/>
<rect x="1106" y="534" width="269" height="3.5" fill="url(#c165)"/>
<rect x="1107" y="537" width="261" height="3.5" fill="url(#c166)"/>
<rect x="1109" y="540" width="251" height="3.5" fill="url(#c167)"/>
<rect x="1110" y="543" width="242" height="3.5" fill="url(#c168)"/>
<rect x="1112" y="546" width="232" height="3.5" fill="url(#c169)"/>
<rect x="1113" y="549" width="223" height="3.5" fill="url(#c170)"/>
<rect x="1115" y="552" width="213" height="3.5" fill="url(#c171)"/>
<rect x="1116" y="555" width="205" height="3.5" fill="url(#c172)"/>
<rect x="1118" y="558" width="195" height="3.5" fill="url(#c173)"/>
<rect x="1120" y="561" width="185" height="3.5" fill="url(#c174)"/>
<rect x="1122" y="564" width="175" height="3.5" fill="url(#c175)"/>
<rect x="1124" y="567" width="165" height="3.5" fill="url(#c176)"/>
<rect x="1125" y="570" width="156" height="3.5" fill="url(#c177)"/>
<rect x="1128" y="573" width="145" height="3.5" fill="url(#c178)"/>
<rect x="1130" y="576" width="136" height="3.5" fill="url(#c179)"/>
<rect x="1132" y="579" width="126" height="3.5" fill="url(#c180)"/>
<rect x="1135" y="582" width="115" height="3.5" fill="url(#c181)"/>
<rect x="1137" y="585" width="105" height="3.5" fill="url(#c182)"/>
<rect x="1140" y="588" width="94" height="3.5" fill="url(#c183)"/>
<rect x="1144" y="591" width="82" height="3.5" fill="url(#c184)"/>
<rect x="1147" y="594" width="72" height="3.5" fill="url(#c185)"/>
<rect x="1151" y="597" width="60" height="3.5" fill="url(#c186)"/>
<rect x="1156" y="600" width="47" height="3.5" fill="url(#c187)"/>
<rect x="1160" y="603" width="35" height="3.5" fill="url(#c188)"/>
</g>
<path d="M1030,40H1712V604H1030Z M1547.3,382.35 L1277,205.5 L1157.75,559.2Z" fill="#000" fill-opacity="0.4" fill-rule="evenodd"/>
</g>
<rect x="1330.7" y="375.1" width="14.2" height="14.6" fill="none" stroke="#fff" stroke-width="1.5"/>
<rect x="1383.9" y="373.9" width="14.2" height="14.6" fill="none" stroke="#fff" stroke-width="1.5"/>
<rect x="1431.8" y="373.7" width="14.2" height="14.6" fill="none" stroke="#fff" stroke-width="1.5"/>
<rect x="1482.5" y="373.7" width="14.2" height="14.6" fill="none" stroke="#fff" stroke-width="1.5"/>
<rect x="1539.8" y="373.7" width="14.2" height="14.6" fill="none" stroke="#fff" stroke-width="1.5"/>
<rect x="1277.5" y="339.75" width="14.2" height="14.6" fill="none" stroke="#fff" stroke-width="1.5"/>
<rect x="1276" y="304.4" width="14.2" height="14.6" fill="none" stroke="#fff" stroke-width="1.5"/>
<rect x="1273.5" y="269.8" width="14.2" height="14.6" fill="none" stroke="#fff" stroke-width="1.5"/>
<rect x="1271.9" y="235.8" width="14.2" height="14.6" fill="none" stroke="#fff" stroke-width="1.5"/>
<rect x="1268.95" y="197.55" width="14.2" height="14.6" fill="none" stroke="#fff" stroke-width="1.5"/>
<rect x="1253.5" y="410.55" width="14.2" height="14.6" fill="none" stroke="#fff" stroke-width="1.5"/>
<rect x="1228.4" y="444.7" width="14.2" height="14.6" fill="none" stroke="#fff" stroke-width="1.5"/>
<rect x="1203.5" y="478.75" width="14.2" height="14.6" fill="none" stroke="#fff" stroke-width="1.5"/>
<rect x="1177.9" y="512.8" width="14.2" height="14.6" fill="none" stroke="#fff" stroke-width="1.5"/>
<rect x="1150" y="551.75" width="14.2" height="14.6" fill="none" stroke="#fff" stroke-width="1.5"/>
<rect x="1266.7" y="375.2" width="14.2" height="14.6" fill="none" stroke="#fff" stroke-width="1.5"/>
<rect x="1252.7" y="375.2" width="14.2" height="14.6" fill="none" stroke="#fff" stroke-width="1.5"/>
<rect x="1238.85" y="375.2" width="14.2" height="14.6" fill="none" stroke="#fff" stroke-width="1.5"/>
<rect x="1224.7" y="375.2" width="14.2" height="14.6" fill="none" stroke="#fff" stroke-width="1.5"/>
<rect x="1210.6" y="375.2" width="14.2" height="14.6" fill="none" stroke="#fff" stroke-width="1.5"/>
<rect x="1281.5" y="397.66" width="14.2" height="14.6" fill="none" stroke="#fff" stroke-width="1.5"/>
<rect x="1282.7" y="421.15" width="14.2" height="14.6" fill="none" stroke="#fff" stroke-width="1.5"/>
<rect x="1282.7" y="441.5" width="14.2" height="14.6" fill="none" stroke="#fff" stroke-width="1.5"/>
<rect x="1284.5" y="465.7" width="14.2" height="14.6" fill="none" stroke="#fff" stroke-width="1.5"/>
<rect x="1285.9" y="489.3" width="14.2" height="14.6" fill="none" stroke="#fff" stroke-width="1.5"/>
<rect x="1296.8" y="351.6" width="14.2" height="14.6" fill="none" stroke="#fff" stroke-width="1.5"/>
<rect x="1313.8" y="327.7" width="14.2" height="14.6" fill="none" stroke="#fff" stroke-width="1.5"/>
<rect x="1330.9" y="304.4" width="14.2" height="14.6" fill="none" stroke="#fff" stroke-width="1.5"/>
<rect x="1346.5" y="283.2" width="14.2" height="14.6" fill="none" stroke="#fff" stroke-width="1.5"/>
<rect x="1364.6" y="259.7" width="14.2" height="14.6" fill="none" stroke="#fff" stroke-width="1.5"/>
<rect x="1280.4" y="375.3" width="14.2" height="14.6" fill="none" stroke="#000" stroke-width="2"/>
<ellipse cx="1288.8" cy="417.8" rx="4.3" ry="4.85" fill="#be877d" stroke="#000" stroke-width="1.2"/>
<ellipse cx="1327.7" cy="411.5" rx="4.3" ry="4.85" fill="#be6964" stroke="#000" stroke-width="1.2"/>
<ellipse cx="1368.95" cy="405" rx="4.3" ry="4.85" fill="#be5550" stroke="#000" stroke-width="1.2"/>
<ellipse cx="1415.9" cy="394.5" rx="4.3" ry="4.85" fill="#c33232" stroke="#000" stroke-width="1.2"/>
<ellipse cx="1466.9" cy="384" rx="4.3" ry="4.85" fill="#c80000" stroke="#000" stroke-width="1.2"/>
<ellipse cx="1263.4" cy="391.2" rx="4.3" ry="4.85" fill="#96b482" stroke="#000" stroke-width="1.2"/>
<ellipse cx="1269" cy="362.9" rx="4.3" ry="4.85" fill="#7db978" stroke="#000" stroke-width="1.2"/>
<ellipse cx="1275.9" cy="327.4" rx="4.3" ry="4.85" fill="#64b964" stroke="#000" stroke-width="1.2"/>
<ellipse cx="1286" cy="285.2" rx="4.3" ry="4.85" fill="#46b946" stroke="#000" stroke-width="1.2"/>
<ellipse cx="1299" cy="228.5" rx="4.3" ry="4.85" fill="#14ac14" stroke="#000" stroke-width="1.2"/>
<ellipse cx="1237.9" cy="442.1" rx="4.3" ry="4.85" fill="#9696be" stroke="#000" stroke-width="1.2"/>
<ellipse cx="1217" cy="468.5" rx="4.3" ry="4.85" fill="#7d7dc3" stroke="#000" stroke-width="1.2"/>
<ellipse cx="1197.9" cy="491.9" rx="4.3" ry="4.85" fill="#6464c8" stroke="#000" stroke-width="1.2"/>
<ellipse cx="1181" cy="511.5" rx="4.3" ry="4.85" fill="#4b4bc8" stroke="#000" stroke-width="1.2"/>
<ellipse cx="1167" cy="530.5" rx="4.3" ry="4.85" fill="#0000c8" stroke="#000" stroke-width="1.2"/>
<ellipse cx="1252.4" cy="413.3" rx="4.3" ry="4.85" fill="#a0beb4" stroke="#000" stroke-width="1.2"/>
<ellipse cx="1244" cy="414.8" rx="4.3" ry="4.85" fill="#82beb4" stroke="#000" stroke-width="1.2"/>
<ellipse cx="1233.9" cy="416.4" rx="4.3" ry="4.85" fill="#64b9af" stroke="#000" stroke-width="1.2"/>
<ellipse cx="1224" cy="417.8" rx="4.3" ry="4.85" fill="#46b9af" stroke="#000" stroke-width="1.2"/>
<ellipse cx="1214.3" cy="419.5" rx="4.3" ry="4.85" fill="#00b9af" stroke="#000" stroke-width="1.2"/>
<ellipse cx="1258" cy="429.9" rx="4.3" ry="4.85" fill="#bea0b9" stroke="#000" stroke-width="1.2"/>
<ellipse cx="1254" cy="447.5" rx="4.3" ry="4.85" fill="#be82b4" stroke="#000" stroke-width="1.2"/>
<ellipse cx="1251" cy="462.3" rx="4.3" ry="4.85" fill="#be69b4" stroke="#000" stroke-width="1.2"/>
<ellipse cx="1247.1" cy="479" rx="4.3" ry="4.85" fill="#c350b4" stroke="#000" stroke-width="1.2"/>
<ellipse cx="1245.1" cy="491.9" rx="4.3" ry="4.85" fill="#c800b9" stroke="#000" stroke-width="1.2"/>
<ellipse cx="1275.05" cy="396.9" rx="4.3" ry="4.85" fill="#b4b48c" stroke="#000" stroke-width="1.2"/>
<ellipse cx="1291.6" cy="376.3" rx="4.3" ry="4.85" fill="#b4b478" stroke="#000" stroke-width="1.2"/>
<ellipse cx="1313.05" cy="351.4" rx="4.3" ry="4.85" fill="#b9b964" stroke="#000" stroke-width="1.2"/>
<ellipse cx="1334.9" cy="322.95" rx="4.3" ry="4.85" fill="#b9b950" stroke="#000" stroke-width="1.2"/>
<ellipse cx="1364.5" cy="286.1" rx="4.3" ry="4.85" fill="#c0c005" stroke="#000" stroke-width="1.2"/>
<ellipse cx="1282.9" cy="381.1" rx="4.3" ry="4.85" fill="#fff" stroke="#000" stroke-width="1.2"/>
<g clip-path="url(#insc)"><g filter="url(#vb2)">
<rect x="1508" y="39.5" width="207" height="4.5" fill="url(#i0)"/>
<rect x="1508" y="43.5" width="207" height="4.5" fill="url(#i1)"/>
<rect x="1508" y="47.5" width="207" height="4.5" fill="url(#i2)"/>
<rect x="1508" y="51.5" width="207" height="4.5" fill="url(#i3)"/>
<rect x="1508" y="55.5" width="207" height="4.5" fill="url(#i4)"/>
<rect x="1508" y="59.5" width="207" height="4.5" fill="url(#i5)"/>
<rect x="1508" y="63.5" width="207" height="4.5" fill="url(#i6)"/>
<rect x="1508" y="67.5" width="207" height="4.5" fill="url(#i7)"/>
<rect x="1508" y="71.5" width="207" height="4.5" fill="url(#i8)"/>
<rect x="1508" y="75.5" width="207" height="4.5" fill="url(#i9)"/>
<rect x="1508" y="79.5" width="207" height="4.5" fill="url(#i10)"/>
<rect x="1508" y="83.5" width="207" height="4.5" fill="url(#i11)"/>
<rect x="1508" y="87.5" width="207" height="4.5" fill="url(#i12)"/>
<rect x="1508" y="91.5" width="207" height="4.5" fill="url(#i13)"/>
<rect x="1508" y="95.5" width="207" height="4.5" fill="url(#i14)"/>
<rect x="1508" y="99.5" width="207" height="4.5" fill="url(#i15)"/>
<rect x="1508" y="103.5" width="207" height="4.5" fill="url(#i16)"/>
<rect x="1508" y="107.5" width="207" height="4.5" fill="url(#i17)"/>
<rect x="1508" y="111.5" width="207" height="4.5" fill="url(#i18)"/>
<rect x="1508" y="115.5" width="207" height="4.5" fill="url(#i19)"/>
<rect x="1508" y="119.5" width="207" height="4.5" fill="url(#i20)"/>
<rect x="1508" y="123.5" width="207" height="4.5" fill="url(#i21)"/>
<rect x="1508" y="127.5" width="207" height="4.5" fill="url(#i22)"/>
<rect x="1508" y="131.5" width="207" height="4.5" fill="url(#i23)"/>
<rect x="1508" y="135.5" width="207" height="4.5" fill="url(#i24)"/>
<rect x="1508" y="139.5" width="207" height="4.5" fill="url(#i25)"/>
<rect x="1508" y="143.5" width="207" height="4.5" fill="url(#i26)"/>
<rect x="1508" y="147.5" width="207" height="4.5" fill="url(#i27)"/>
<rect x="1508" y="151.5" width="207" height="4.5" fill="url(#i28)"/>
<rect x="1508" y="155.5" width="207" height="4.5" fill="url(#i29)"/>
<rect x="1508" y="159.5" width="207" height="4.5" fill="url(#i30)"/>
<rect x="1508" y="163.5" width="207" height="4.5" fill="url(#i31)"/>
<rect x="1508" y="167.5" width="207" height="4.5" fill="url(#i32)"/>
<rect x="1508" y="171.5" width="207" height="4.5" fill="url(#i33)"/>
<rect x="1508" y="175.5" width="207" height="4.5" fill="url(#i34)"/>
<rect x="1508" y="179.5" width="207" height="4.5" fill="url(#i35)"/>
<rect x="1508" y="183.5" width="207" height="4.5" fill="url(#i36)"/>
<rect x="1508" y="187.5" width="207" height="4.5" fill="url(#i37)"/>
<rect x="1508" y="191.5" width="207" height="4.5" fill="url(#i38)"/>
<rect x="1508" y="195.5" width="207" height="4.5" fill="url(#i39)"/>
<rect x="1508" y="199.5" width="207" height="4.5" fill="url(#i40)"/>
<rect x="1508" y="203.5" width="207" height="4.5" fill="url(#i41)"/>
<rect x="1508" y="207.5" width="207" height="4.5" fill="url(#i42)"/>
<rect x="1508" y="211.5" width="207" height="4.5" fill="url(#i43)"/>
<rect x="1508" y="215.5" width="207" height="4.5" fill="url(#i44)"/>
<rect x="1508" y="219.5" width="207" height="4.5" fill="url(#i45)"/>
<rect x="1508" y="223.5" width="207" height="4.5" fill="url(#i46)"/>
<rect x="1508" y="227.5" width="207" height="4.5" fill="url(#i47)"/>
<rect x="1508" y="231.5" width="207" height="4.5" fill="url(#i48)"/>
<rect x="1508" y="235.5" width="207" height="4.5" fill="url(#i49)"/>
<rect x="1508" y="239.5" width="207" height="4.5" fill="url(#i50)"/>
<rect x="1508" y="243.5" width="207" height="4.5" fill="url(#i51)"/>
<rect x="1508" y="247.5" width="207" height="4.5" fill="url(#i52)"/>
<rect x="1508" y="251.5" width="207" height="4.5" fill="url(#i53)"/>
<rect x="1508" y="255.5" width="207" height="1.5" fill="url(#i54)"/>
</g>
<path d="M683.64,-628.72L2539.36,924.32L2539.36,-628.72Z" fill="#000" fill-opacity="0.4"/>
<rect x="1603.8" y="140.1" width="14.2" height="14.6" fill="none" stroke="#fff" stroke-width="1.5"/>
<rect x="1543.9" y="246.9" width="14.2" height="14.6" fill="none" stroke="#fff" stroke-width="1.5"/>
<ellipse cx="1586.1" cy="233.8" rx="4.3" ry="4.85" fill="#c0c005" stroke="#000" stroke-width="1.2"/>
</g>
<rect x="1516" y="47.5" width="191" height="201.0" fill="none" stroke="#a4a4a4" stroke-width="1.4"/>
<rect x="1038.5" y="47.5" width="668.5" height="551" fill="none" stroke="#a0a0a0" stroke-width="2"/>
<line x1="1038.5" y1="598.5" x2="1038.5" y2="605.5" stroke="#c8c8c8" stroke-width="1.5" />
<text x="1038.5" y="622" font-size="16" fill="#dcdcdc" text-anchor="middle" textLength="8.45" lengthAdjust="spacingAndGlyphs" >0</text>
<line x1="1032.5" y1="598.5" x2="1038.5" y2="598.5" stroke="#c8c8c8" stroke-width="1.5" />
<text x="1032.5" y="606" font-size="16" fill="#dcdcdc" text-anchor="end" textLength="8.45" lengthAdjust="spacingAndGlyphs" >0</text>
<line x1="1118" y1="598.5" x2="1118" y2="605.5" stroke="#c8c8c8" stroke-width="1.5" />
<text x="1118" y="622" font-size="16" fill="#dcdcdc" text-anchor="middle" textLength="21.13" lengthAdjust="spacingAndGlyphs" >0,1</text>
<line x1="1032.5" y1="533.6" x2="1038.5" y2="533.6" stroke="#c8c8c8" stroke-width="1.5" />
<text x="1032.5" y="539.6" font-size="16" fill="#dcdcdc" text-anchor="end" textLength="21.13" lengthAdjust="spacingAndGlyphs" >0,1</text>
<line x1="1197.5" y1="598.5" x2="1197.5" y2="605.5" stroke="#c8c8c8" stroke-width="1.5" />
<text x="1197.5" y="622" font-size="16" fill="#dcdcdc" text-anchor="middle" textLength="21.13" lengthAdjust="spacingAndGlyphs" >0,2</text>
<line x1="1032.5" y1="468.1" x2="1038.5" y2="468.1" stroke="#c8c8c8" stroke-width="1.5" />
<text x="1032.5" y="474.1" font-size="16" fill="#dcdcdc" text-anchor="end" textLength="21.13" lengthAdjust="spacingAndGlyphs" >0,2</text>
<line x1="1277" y1="598.5" x2="1277" y2="605.5" stroke="#c8c8c8" stroke-width="1.5" />
<text x="1277" y="622" font-size="16" fill="#dcdcdc" text-anchor="middle" textLength="21.13" lengthAdjust="spacingAndGlyphs" >0,3</text>
<line x1="1032.5" y1="402.6" x2="1038.5" y2="402.6" stroke="#c8c8c8" stroke-width="1.5" />
<text x="1032.5" y="408.6" font-size="16" fill="#dcdcdc" text-anchor="end" textLength="21.13" lengthAdjust="spacingAndGlyphs" >0,3</text>
<line x1="1356.5" y1="598.5" x2="1356.5" y2="605.5" stroke="#c8c8c8" stroke-width="1.5" />
<text x="1356.5" y="622" font-size="16" fill="#dcdcdc" text-anchor="middle" textLength="21.13" lengthAdjust="spacingAndGlyphs" >0,4</text>
<line x1="1032.5" y1="337.1" x2="1038.5" y2="337.1" stroke="#c8c8c8" stroke-width="1.5" />
<text x="1032.5" y="343.1" font-size="16" fill="#dcdcdc" text-anchor="end" textLength="21.13" lengthAdjust="spacingAndGlyphs" >0,4</text>
<line x1="1436" y1="598.5" x2="1436" y2="605.5" stroke="#c8c8c8" stroke-width="1.5" />
<text x="1436" y="622" font-size="16" fill="#dcdcdc" text-anchor="middle" textLength="21.13" lengthAdjust="spacingAndGlyphs" >0,5</text>
<line x1="1032.5" y1="271.6" x2="1038.5" y2="271.6" stroke="#c8c8c8" stroke-width="1.5" />
<text x="1032.5" y="277.6" font-size="16" fill="#dcdcdc" text-anchor="end" textLength="21.13" lengthAdjust="spacingAndGlyphs" >0,5</text>
<line x1="1515.5" y1="598.5" x2="1515.5" y2="605.5" stroke="#c8c8c8" stroke-width="1.5" />
<text x="1515.5" y="622" font-size="16" fill="#dcdcdc" text-anchor="middle" textLength="21.13" lengthAdjust="spacingAndGlyphs" >0,6</text>
<line x1="1032.5" y1="206.1" x2="1038.5" y2="206.1" stroke="#c8c8c8" stroke-width="1.5" />
<text x="1032.5" y="212.1" font-size="16" fill="#dcdcdc" text-anchor="end" textLength="21.13" lengthAdjust="spacingAndGlyphs" >0,6</text>
<line x1="1595" y1="598.5" x2="1595" y2="605.5" stroke="#c8c8c8" stroke-width="1.5" />
<text x="1595" y="622" font-size="16" fill="#dcdcdc" text-anchor="middle" textLength="21.13" lengthAdjust="spacingAndGlyphs" >0,7</text>
<line x1="1032.5" y1="140.6" x2="1038.5" y2="140.6" stroke="#c8c8c8" stroke-width="1.5" />
<text x="1032.5" y="146.6" font-size="16" fill="#dcdcdc" text-anchor="end" textLength="21.13" lengthAdjust="spacingAndGlyphs" >0,7</text>
<line x1="1674.5" y1="598.5" x2="1674.5" y2="605.5" stroke="#c8c8c8" stroke-width="1.5" />
<text x="1674.5" y="622" font-size="16" fill="#dcdcdc" text-anchor="middle" textLength="21.13" lengthAdjust="spacingAndGlyphs" >0,8</text>
<line x1="1032.5" y1="74.5" x2="1038.5" y2="74.5" stroke="#c8c8c8" stroke-width="1.5" />
<text x="1032.5" y="81.3" font-size="16" fill="#dcdcdc" text-anchor="end" textLength="21.13" lengthAdjust="spacingAndGlyphs" >0,8</text>
<text x="1359.3" y="41" font-size="15.6" fill="#dcdcdc" text-anchor="middle" textLength="78.7" lengthAdjust="spacingAndGlyphs" >CIE 1931 xy</text>
<rect x="885.5" y="10.5" width="173" height="21" fill="#ffffe1" stroke="#b000b0" stroke-width="1"/>
<text x="889.2" y="24.8" font-size="12" fill="#000" textLength="165.2" lengthAdjust="spacingAndGlyphs" >Bitte sagen Sie das noch einmal</text></svg></body></html>
